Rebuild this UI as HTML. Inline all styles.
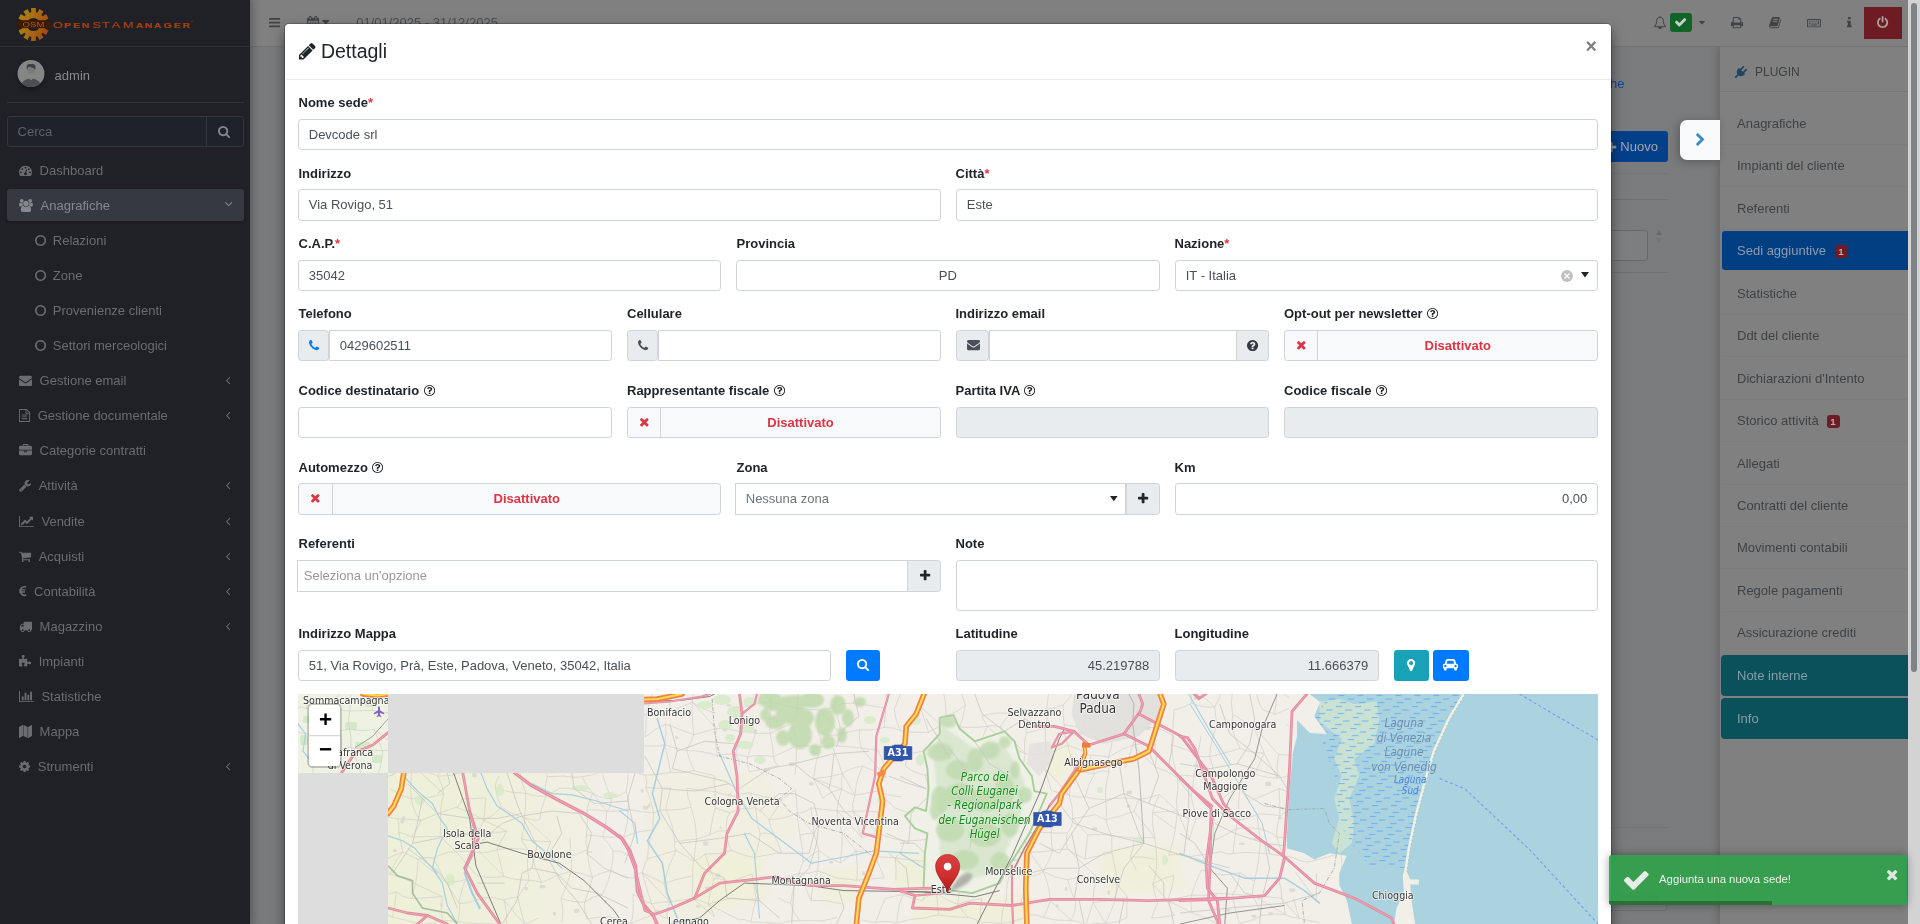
<!DOCTYPE html>
<html lang="it"><head><meta charset="utf-8"><title>OpenSTAManager - Dettagli sede</title>
<style>
html,body{margin:0;padding:0}
body{width:1920px;height:924px;overflow:hidden;position:relative;background:#7a7b7d;font-family:"Liberation Sans",Arial,Helvetica,sans-serif;font-size:13px;}
.ic{position:absolute;display:block;overflow:visible}
.t{position:absolute;white-space:nowrap}
.b{position:absolute}
</style></head>
<body>
<div id="app" style="position:absolute;left:0;top:0;width:1920px;height:924px;overflow:hidden;will-change:transform">
<!-- page content behind backdrop -->
<div class="t" style="left:1555.20px;top:73.50px;font-size:13px;color:#0a4a96;line-height:20px;">Anagrafiche</div>
<div class="b" style="left:1560.00px;top:131.00px;width:108.00px;height:31.00px;background:#04408a;border-radius:3px"></div>
<svg class="ic" style="left:1605.89px;top:141.59px;" width="10.21" height="10.21" viewBox="0.0 -1408.0 1408.0 1408.0"><path fill="#9c9ea2" transform="scale(1,-1)" d="M1408 800v-192q0 -40 -28 -68t-68 -28h-416v-416q0 -40 -28 -68t-68 -28h-192q-40 0 -68 28t-28 68v416h-416q-40 0 -68 28t-28 68v192q0 40 28 68t68 28h416v416q0 40 28 68t68 28h192q40 0 68 -28t28 -68v-416h416q40 0 68 -28t28 -68z"/></svg>
<div class="t" style="left:1620.30px;top:136.50px;font-size:13px;color:#a4a6aa;line-height:20px;">Nuovo</div>
<div class="b" style="left:1500.00px;top:172.50px;width:168.00px;height:1.00px;background:#747577"></div>
<div class="b" style="left:1500.00px;top:199.00px;width:168.00px;height:1.00px;background:#6e6f71"></div>
<div class="b" style="left:1500.00px;top:230.00px;width:147.50px;height:31.00px;box-sizing:border-box;border:1px solid #67696b;border-radius:3px;background:#7d7e80"></div>
<svg class="ic" style="left:1654.8px;top:228.5px" width="8" height="16" viewBox="0 0 8 16"><path d="M4 1 L7 6 H1Z" fill="#68696b"/><path d="M4 14 L7 9 H1Z" fill="#747577"/></svg>
<div class="b" style="left:1500.00px;top:271.50px;width:168.00px;height:1.50px;background:#6e6f71"></div>
<div class="b" style="left:1500.00px;top:827.00px;width:168.00px;height:1.00px;background:#727375"></div>
<div class="b" style="left:1560.00px;top:881.00px;width:107.00px;height:30.00px;box-sizing:border-box;border:1px solid #6f7072;border-radius:3px;background:#7c7d7f"></div>
<div class="t" style="left:1614.00px;top:886.00px;font-size:13px;color:#5a5c5f;line-height:20px;">Stampa</div>
<div class="b" style="left:1720.00px;top:47.00px;width:188.00px;height:877.00px;background:#808080;box-shadow:0 0 9px 1px rgba(0,0,0,.22)"></div>
<div class="b" style="left:1720.00px;top:91.00px;width:188.00px;height:1.00px;background:#767779"></div>
<svg class="ic" style="left:1735.00px;top:65.50px;" width="12.00" height="12.00" viewBox="0.0 -1536.0 1792.0 1792.0"><path fill="#1e4660" transform="scale(1,-1)" d="M1755 1083q37 -38 37 -90.5t-37 -90.5l-401 -400l150 -150l-160 -160q-163 -163 -389.5 -186.5t-411.5 100.5l-362 -362h-181v181l362 362q-124 185 -100.5 411.5t186.5 389.5l160 160l150 -150l400 401q38 37 91 37t90 -37t37 -90.5t-37 -90.5l-400 -401l234 -234 l401 400q38 37 91 37t90 -37z"/></svg>
<div class="t" style="left:1755.00px;top:61.80px;font-size:12px;color:#3d4043;line-height:20px;">PLUGIN</div>
<div class="b" style="left:1722.00px;top:143.80px;width:186.00px;height:1.00px;background:#7b7c7e"></div>
<div class="t" style="left:1737.00px;top:113.60px;font-size:13px;color:#3f4245;line-height:20px;">Anagrafiche</div>
<div class="b" style="left:1722.00px;top:185.80px;width:186.00px;height:1.00px;background:#7b7c7e"></div>
<div class="t" style="left:1737.00px;top:155.60px;font-size:13px;color:#3f4245;line-height:20px;">Impianti del cliente</div>
<div class="b" style="left:1722.00px;top:228.80px;width:186.00px;height:1.00px;background:#7b7c7e"></div>
<div class="t" style="left:1737.00px;top:198.60px;font-size:13px;color:#3f4245;line-height:20px;">Referenti</div>
<div class="b" style="left:1722.00px;top:231.00px;width:186.00px;height:39.00px;background:#003e82;border-radius:3px 0 0 3px"></div>
<div class="t" style="left:1737.00px;top:240.60px;font-size:13px;color:#8a9bb3;line-height:20px;">Sedi aggiuntive</div>
<div class="b" style="left:1834.50px;top:244.70px;width:13.00px;height:13.40px;background:#6e1b23;border-radius:3px"></div>
<div class="t" style="left:1834.50px;top:245.80px;font-size:9.75px;color:#b9adae;line-height:12px;font-weight:700;width:13.00px;text-align:center;">1</div>
<div class="b" style="left:1722.00px;top:313.80px;width:186.00px;height:1.00px;background:#7b7c7e"></div>
<div class="t" style="left:1737.00px;top:283.60px;font-size:13px;color:#3f4245;line-height:20px;">Statistiche</div>
<div class="b" style="left:1722.00px;top:355.80px;width:186.00px;height:1.00px;background:#7b7c7e"></div>
<div class="t" style="left:1737.00px;top:325.60px;font-size:13px;color:#3f4245;line-height:20px;">Ddt del cliente</div>
<div class="b" style="left:1722.00px;top:398.80px;width:186.00px;height:1.00px;background:#7b7c7e"></div>
<div class="t" style="left:1737.00px;top:368.60px;font-size:13px;color:#3f4245;line-height:20px;">Dichiarazioni d'Intento</div>
<div class="b" style="left:1722.00px;top:440.80px;width:186.00px;height:1.00px;background:#7b7c7e"></div>
<div class="t" style="left:1737.00px;top:410.60px;font-size:13px;color:#3f4245;line-height:20px;">Storico attività</div>
<div class="b" style="left:1826.50px;top:414.70px;width:13.00px;height:13.40px;background:#6e1b23;border-radius:3px"></div>
<div class="t" style="left:1826.50px;top:415.80px;font-size:9.75px;color:#b9adae;line-height:12px;font-weight:700;width:13.00px;text-align:center;">1</div>
<div class="b" style="left:1722.00px;top:483.80px;width:186.00px;height:1.00px;background:#7b7c7e"></div>
<div class="t" style="left:1737.00px;top:453.60px;font-size:13px;color:#3f4245;line-height:20px;">Allegati</div>
<div class="b" style="left:1722.00px;top:525.80px;width:186.00px;height:1.00px;background:#7b7c7e"></div>
<div class="t" style="left:1737.00px;top:495.60px;font-size:13px;color:#3f4245;line-height:20px;">Contratti del cliente</div>
<div class="b" style="left:1722.00px;top:567.80px;width:186.00px;height:1.00px;background:#7b7c7e"></div>
<div class="t" style="left:1737.00px;top:537.60px;font-size:13px;color:#3f4245;line-height:20px;">Movimenti contabili</div>
<div class="b" style="left:1722.00px;top:610.80px;width:186.00px;height:1.00px;background:#7b7c7e"></div>
<div class="t" style="left:1737.00px;top:580.60px;font-size:13px;color:#3f4245;line-height:20px;">Regole pagamenti</div>
<div class="b" style="left:1722.00px;top:652.80px;width:186.00px;height:1.00px;background:#7b7c7e"></div>
<div class="t" style="left:1737.00px;top:622.60px;font-size:13px;color:#3f4245;line-height:20px;">Assicurazione crediti</div>
<div class="b" style="left:1721.00px;top:655.00px;width:187.00px;height:41.00px;background:#0b515c;border-radius:4px 0 0 4px"></div>
<div class="t" style="left:1737.00px;top:665.60px;font-size:13px;color:#869fa4;line-height:20px;">Note interne</div>
<div class="b" style="left:1721.00px;top:697.50px;width:187.00px;height:41.00px;background:#0b515c;border-radius:4px 0 0 4px"></div>
<div class="t" style="left:1737.00px;top:708.50px;font-size:13px;color:#869fa4;line-height:20px;">Info</div>
<div class="b" style="left:250.00px;top:0.00px;width:1658.00px;height:46.00px;background:#808080"></div>
<div class="b" style="left:250.00px;top:46.00px;width:1658.00px;height:1.00px;background:#707274"></div>
<svg class="ic" style="left:269.43px;top:17.76px;" width="11.14" height="9.29" viewBox="0.0 -1280.0 1536.0 1280.0"><path fill="#404346" transform="scale(1,-1)" d="M1536 192v-128q0 -26 -19 -45t-45 -19h-1408q-26 0 -45 19t-19 45v128q0 26 19 45t45 19h1408q26 0 45 -19t19 -45zM1536 704v-128q0 -26 -19 -45t-45 -19h-1408q-26 0 -45 19t-19 45v128q0 26 19 45t45 19h1408q26 0 45 -19t19 -45zM1536 1216v-128q0 -26 -19 -45 t-45 -19h-1408q-26 0 -45 19t-19 45v128q0 26 19 45t45 19h1408q26 0 45 -19t19 -45z"/></svg>
<svg class="ic" style="left:306.66px;top:15.50px;" width="12.07" height="13.00" viewBox="0.0 -1536.0 1664.0 1792.0"><path fill="#404346" transform="scale(1,-1)" d="M128 -128h288v288h-288v-288zM480 -128h320v288h-320v-288zM128 224h288v320h-288v-320zM480 224h320v320h-320v-320zM128 608h288v288h-288v-288zM864 -128h320v288h-320v-288zM480 608h320v288h-320v-288zM1248 -128h288v288h-288v-288zM864 224h320v320h-320v-320z M512 1088v288q0 13 -9.5 22.5t-22.5 9.5h-64q-13 0 -22.5 -9.5t-9.5 -22.5v-288q0 -13 9.5 -22.5t22.5 -9.5h64q13 0 22.5 9.5t9.5 22.5zM1248 224h288v320h-288v-320zM864 608h320v288h-320v-288zM1248 608h288v288h-288v-288zM1280 1088v288q0 13 -9.5 22.5t-22.5 9.5h-64 q-13 0 -22.5 -9.5t-9.5 -22.5v-288q0 -13 9.5 -22.5t22.5 -9.5h64q13 0 22.5 9.5t9.5 22.5zM1664 1152v-1280q0 -52 -38 -90t-90 -38h-1408q-52 0 -90 38t-38 90v1280q0 52 38 90t90 38h128v96q0 66 47 113t113 47h64q66 0 113 -47t47 -113v-96h384v96q0 66 47 113t113 47 h64q66 0 113 -47t47 -113v-96h128q52 0 90 -38t38 -90z"/></svg>
<svg class="ic" style="left:322.49px;top:20.41px;" width="7.43" height="4.18" viewBox="0.0 -896.0 1024.0 576.0"><path fill="#404346" transform="scale(1,-1)" d="M1024 832q0 -26 -19 -45l-448 -448q-19 -19 -45 -19t-45 19l-448 448q-19 19 -19 45t19 45t45 19h896q26 0 45 -19t19 -45z"/></svg>
<div class="t" style="left:356.20px;top:13.20px;font-size:13px;color:#4a4d50;line-height:20px;">01/01/2025 - 31/12/2025</div>
<svg class="ic" style="left:1653.66px;top:15.70px;" width="12.07" height="13.00" viewBox="64.0 -1536.0 1664.0 1792.0"><path fill="#404346" transform="scale(1,-1)" d="M912 -160q0 16 -16 16q-59 0 -101.5 42.5t-42.5 101.5q0 16 -16 16t-16 -16q0 -73 51.5 -124.5t124.5 -51.5q16 0 16 16zM246 128h1300q-266 300 -266 832q0 51 -24 105t-69 103t-121.5 80.5t-169.5 31.5t-169.5 -31.5t-121.5 -80.5t-69 -103t-24 -105q0 -532 -266 -832z M1728 128q0 -52 -38 -90t-90 -38h-448q0 -106 -75 -181t-181 -75t-181 75t-75 181h-448q-52 0 -90 38t-38 90q50 42 91 88t85 119.5t74.5 158.5t50 206t19.5 260q0 152 117 282.5t307 158.5q-8 19 -8 39q0 40 28 68t68 28t68 -28t28 -68q0 -20 -8 -39q190 -28 307 -158.5 t117 -282.5q0 -139 19.5 -260t50 -206t74.5 -158.5t85 -119.5t91 -88z"/></svg>
<div class="b" style="left:1670.00px;top:12.70px;width:22.20px;height:19.30px;background:#116428;border-radius:3px"></div>
<svg class="ic" style="left:1675.18px;top:18.09px;" width="11.24" height="8.62" viewBox="121.0 -1202.0 1550.0 1188.0"><path fill="#cccccc" transform="scale(1,-1)" d="M1671 970q0 -40 -28 -68l-724 -724l-136 -136q-28 -28 -68 -28t-68 28l-136 136l-362 362q-28 28 -28 68t28 68l136 136q28 28 68 28t68 -28l294 -295l656 657q28 28 68 28t68 -28l136 -136q28 -28 28 -68z"/></svg>
<svg class="ic" style="left:1698.80px;top:20.51px;" width="6.00" height="3.38" viewBox="0.0 -896.0 1024.0 576.0"><path fill="#404346" transform="scale(1,-1)" d="M1024 832q0 -26 -19 -45l-448 -448q-19 -19 -45 -19t-45 19l-448 448q-19 19 -19 45t19 45t45 19h896q26 0 45 -19t19 -45z"/></svg>
<svg class="ic" style="left:1730.96px;top:16.93px;" width="12.07" height="11.14" viewBox="0.0 -1408.0 1664.0 1536.0"><path fill="#404346" transform="scale(1,-1)" d="M384 0h896v256h-896v-256zM384 640h896v384h-160q-40 0 -68 28t-28 68v160h-640v-640zM1536 576q0 26 -19 45t-45 19t-45 -19t-19 -45t19 -45t45 -19t45 19t19 45zM1664 576v-416q0 -13 -9.5 -22.5t-22.5 -9.5h-224v-160q0 -40 -28 -68t-68 -28h-960q-40 0 -68 28t-28 68 v160h-224q-13 0 -22.5 9.5t-9.5 22.5v416q0 79 56.5 135.5t135.5 56.5h64v544q0 40 28 68t68 28h672q40 0 88 -20t76 -48l152 -152q28 -28 48 -76t20 -88v-256h64q79 0 135.5 -56.5t56.5 -135.5z"/></svg>
<svg class="ic" style="left:1768.96px;top:16.93px;" width="12.08" height="11.14" viewBox="-0.5217391304347814 -1408.0 1665.328190743338 1536.0"><path fill="#404346" transform="scale(1,-1)" d="M1639 1058q40 -57 18 -129l-275 -906q-19 -64 -76.5 -107.5t-122.5 -43.5h-923q-77 0 -148.5 53.5t-99.5 131.5q-24 67 -2 127q0 4 3 27t4 37q1 8 -3 21.5t-3 19.5q2 11 8 21t16.5 23.5t16.5 23.5q23 38 45 91.5t30 91.5q3 10 0.5 30t-0.5 28q3 11 17 28t17 23 q21 36 42 92t25 90q1 9 -2.5 32t0.5 28q4 13 22 30.5t22 22.5q19 26 42.5 84.5t27.5 96.5q1 8 -3 25.5t-2 26.5q2 8 9 18t18 23t17 21q8 12 16.5 30.5t15 35t16 36t19.5 32t26.5 23.5t36 11.5t47.5 -5.5l-1 -3q38 9 51 9h761q74 0 114 -56t18 -130l-274 -906 q-36 -119 -71.5 -153.5t-128.5 -34.5h-869q-27 0 -38 -15q-11 -16 -1 -43q24 -70 144 -70h923q29 0 56 15.5t35 41.5l300 987q7 22 5 57q38 -15 59 -43zM575 1056q-4 -13 2 -22.5t20 -9.5h608q13 0 25.5 9.5t16.5 22.5l21 64q4 13 -2 22.5t-20 9.5h-608q-13 0 -25.5 -9.5 t-16.5 -22.5zM492 800q-4 -13 2 -22.5t20 -9.5h608q13 0 25.5 9.5t16.5 22.5l21 64q4 13 -2 22.5t-20 9.5h-608q-13 0 -25.5 -9.5t-16.5 -22.5z"/></svg>
<svg class="ic" style="left:1807.04px;top:18.82px;" width="13.93" height="8.36" viewBox="0.0 -1152.0 1920.0 1152.0"><path fill="#404346" transform="scale(1,-1)" d="M384 368v-96q0 -16 -16 -16h-96q-16 0 -16 16v96q0 16 16 16h96q16 0 16 -16zM512 624v-96q0 -16 -16 -16h-224q-16 0 -16 16v96q0 16 16 16h224q16 0 16 -16zM384 880v-96q0 -16 -16 -16h-96q-16 0 -16 16v96q0 16 16 16h96q16 0 16 -16zM1408 368v-96q0 -16 -16 -16 h-864q-16 0 -16 16v96q0 16 16 16h864q16 0 16 -16zM768 624v-96q0 -16 -16 -16h-96q-16 0 -16 16v96q0 16 16 16h96q16 0 16 -16zM640 880v-96q0 -16 -16 -16h-96q-16 0 -16 16v96q0 16 16 16h96q16 0 16 -16zM1024 624v-96q0 -16 -16 -16h-96q-16 0 -16 16v96q0 16 16 16 h96q16 0 16 -16zM896 880v-96q0 -16 -16 -16h-96q-16 0 -16 16v96q0 16 16 16h96q16 0 16 -16zM1280 624v-96q0 -16 -16 -16h-96q-16 0 -16 16v96q0 16 16 16h96q16 0 16 -16zM1664 368v-96q0 -16 -16 -16h-96q-16 0 -16 16v96q0 16 16 16h96q16 0 16 -16zM1152 880v-96 q0 -16 -16 -16h-96q-16 0 -16 16v96q0 16 16 16h96q16 0 16 -16zM1408 880v-96q0 -16 -16 -16h-96q-16 0 -16 16v96q0 16 16 16h96q16 0 16 -16zM1664 880v-352q0 -16 -16 -16h-224q-16 0 -16 16v96q0 16 16 16h112v240q0 16 16 16h96q16 0 16 -16zM1792 128v896h-1664v-896 h1664zM1920 1024v-896q0 -53 -37.5 -90.5t-90.5 -37.5h-1664q-53 0 -90.5 37.5t-37.5 90.5v896q0 53 37.5 90.5t90.5 37.5h1664q53 0 90.5 -37.5t37.5 -90.5z"/></svg>
<svg class="ic" style="left:1846.88px;top:17.19px;" width="4.64" height="10.21" viewBox="0.0 -1408.0 640.0 1408.0"><path fill="#404346" transform="scale(1,-1)" d="M640 192v-128q0 -26 -19 -45t-45 -19h-512q-26 0 -45 19t-19 45v128q0 26 19 45t45 19h64v384h-64q-26 0 -45 19t-19 45v128q0 26 19 45t45 19h384q26 0 45 -19t19 -45v-576h64q26 0 45 -19t19 -45zM512 1344v-192q0 -26 -19 -45t-45 -19h-256q-26 0 -45 19t-19 45v192 q0 26 19 45t45 19h256q26 0 45 -19t19 -45z"/></svg>
<div class="b" style="left:1864.00px;top:7.00px;width:38.00px;height:32.00px;background:#6f1b23"></div>
<svg class="ic" style="left:1877.43px;top:15.76px;" width="11.14" height="12.07" viewBox="0.0 -1536.0 1536.0 1664.0"><path fill="#a9a0a1" transform="scale(1,-1)" d="M1536 640q0 -156 -61 -298t-164 -245t-245 -164t-298 -61t-298 61t-245 164t-164 245t-61 298q0 182 80.5 343t226.5 270q43 32 95.5 25t83.5 -50q32 -42 24.5 -94.5t-49.5 -84.5q-98 -74 -151.5 -181t-53.5 -228q0 -104 40.5 -198.5t109.5 -163.5t163.5 -109.5 t198.5 -40.5t198.5 40.5t163.5 109.5t109.5 163.5t40.5 198.5q0 121 -53.5 228t-151.5 181q-42 32 -49.5 84.5t24.5 94.5q31 43 84 50t95 -25q146 -109 226.5 -270t80.5 -343zM896 1408v-640q0 -52 -38 -90t-90 -38t-90 38t-38 90v640q0 52 38 90t90 38t90 -38t38 -90z"/></svg>
<!-- modal shadow gradient on the sides -->
<div class="b" style="left:0;top:0;width:250px;height:924px;background:#1f2127;box-shadow:0 0 9px 2px rgba(0,0,0,.32)"></div>
<div class="b" style="left:0.00px;top:46.00px;width:250.00px;height:1.00px;background:#2e3036"></div>
<svg class="ic" style="left:16px;top:7px" width="36" height="36" viewBox="-17.5 -17.5 36 36">
<defs><linearGradient id="gg" gradientUnits="userSpaceOnUse" x1="-16" x2="16" y1="-6" y2="6"><stop offset="0" stop-color="#ad8211"/><stop offset=".5" stop-color="#a86a12"/><stop offset="1" stop-color="#a24413"/></linearGradient></defs>
<path d="M-2.27 -12.22 L-2.41 -16.54 L2.41 -16.54 L2.27 -12.22 L3.93 -11.76 L5.90 -15.57 L10.08 -13.07 L7.87 -9.41 L9.08 -8.15 L12.63 -10.43 L15.04 -6.11 L11.35 -4.07 L11.80 -2.35 L15.97 -2.50 L15.97 2.50 L11.80 2.35 L11.35 4.07 L15.04 6.11 L12.63 10.43 L9.08 8.15 L7.87 9.41 L10.08 13.07 L5.90 15.57 L3.93 11.76 L2.27 12.22 L2.41 16.54 L-2.41 16.54 L-2.27 12.22 L-3.93 11.76 L-5.90 15.57 L-10.08 13.07 L-7.87 9.41 L-9.08 8.15 L-12.63 10.43 L-15.04 6.11 L-11.35 4.07 L-11.80 2.35 L-15.97 2.50 L-15.97 -2.50 L-11.80 -2.35 L-11.35 -4.07 L-15.04 -6.11 L-12.63 -10.43 L-9.08 -8.15 L-7.87 -9.41 L-10.08 -13.07 L-5.90 -15.57 L-3.93 -11.76Z" fill="url(#gg)"/>
<circle r="6.6" fill="#1f2127"/>
<rect x="-16.6" y="-4.3" width="33.4" height="7.9" fill="#3d1a07"/>
<text x="0" y="2.2" transform="scale(1.45,1)" font-family="Liberation Sans, sans-serif" font-size="6.6" font-weight="400" fill="#a8600f" text-anchor="middle">OSM</text>
</svg>
<svg class="ic" style="left:0;top:10px" width="200" height="26" viewBox="0 10 200 26"><text y="28.1" transform="scale(1.42,1)" font-family="Liberation Sans, sans-serif" fill="#a5400f" stroke="#a5400f" stroke-width=".22"><tspan x="37.32" font-size="9.0" font-weight="400">O</tspan><tspan x="45.28 51.55 57.75" font-size="7.3" font-weight="700">PEN</tspan><tspan x="65.07 71.83 78.66 86.62" font-size="9.0" font-weight="400">STAM</tspan><tspan x="95.77 102.11 108.45 115.28 122.54 128.73" font-size="7.3" font-weight="700">ANAGER</tspan></text><text x="191" y="22.5" font-size="3.6" fill="#8a380f" font-family="Liberation Sans, sans-serif">®</text></svg>
<svg class="ic" style="left:12px;top:55px" width="38" height="40" viewBox="-19 -18.5 38 40">
<defs><clipPath id="avc"><circle r="13.5"/></clipPath></defs>
<circle r="13.5" cy="2" fill="#000" opacity=".35" style="filter:blur(2px)"/>
<circle r="13.5" fill="#858585"/>
<g clip-path="url(#avc)">
<path d="M-10 14 C-10 7 -5 6 -2 5 L0 7 L2 5 C5 6 10 7 10 14 Z" fill="#4b4e53"/>
<path d="M-3.6 -3 C-5 -8 -2 -9.5 0 -8.8 C3 -10 5.5 -7.5 3.8 -3 C3.5 1.5 -3.3 1.5 -3.6 -3Z" fill="#7a7a7a"/>
<path d="M-4 -3.5 C-5.5 -9 -2 -10 -0.5 -9.2 C3 -10.5 6 -8 4 -3.5 C4 -6 1 -5.5 -1 -6.8 C-3 -6.5 -3.8 -5.5 -4 -3.5Z" fill="#3b3e43"/>
</g></svg>
<div class="t" style="left:54.60px;top:65.50px;font-size:13px;color:#85888c;line-height:20px;">admin</div>
<div class="b" style="left:7.00px;top:102.00px;width:236.50px;height:1.00px;background:#30333a"></div>
<div class="b" style="left:7.00px;top:116.00px;width:236.50px;height:30.50px;box-sizing:border-box;border:1px solid #33363c;border-radius:3px;background:#1f2228"></div>
<div class="b" style="left:205.50px;top:116.50px;width:1.00px;height:29.50px;background:#33363c"></div>
<div class="t" style="left:17.60px;top:121.50px;font-size:13px;color:#5e6166;line-height:20px;">Cerca</div>
<svg class="ic" style="left:218.26px;top:125.66px;" width="12.07" height="12.07" viewBox="0.0 -1408.0 1664.0 1664.0"><path fill="#85888c" transform="scale(1,-1)" d="M1152 704q0 185 -131.5 316.5t-316.5 131.5t-316.5 -131.5t-131.5 -316.5t131.5 -316.5t316.5 -131.5t316.5 131.5t131.5 316.5zM1664 -128q0 -52 -38 -90t-90 -38q-54 0 -90 38l-343 342q-179 -124 -399 -124q-143 0 -273.5 55.5t-225 150t-150 225t-55.5 273.5 t55.5 273.5t150 225t225 150t273.5 55.5t273.5 -55.5t225 -150t150 -225t55.5 -273.5q0 -220 -124 -399l343 -343q37 -37 37 -90z"/></svg>
<svg class="ic" style="left:19.40px;top:163.90px;" width="13.00" height="13.00" viewBox="0 -1536 1792 1792"><path fill="#696c71" transform="scale(1,-1)" d="M384 384q0 53 -37.5 90.5t-90.5 37.5t-90.5 -37.5t-37.5 -90.5t37.5 -90.5t90.5 -37.5t90.5 37.5t37.5 90.5zM576 832q0 53 -37.5 90.5t-90.5 37.5t-90.5 -37.5t-37.5 -90.5t37.5 -90.5t90.5 -37.5t90.5 37.5t37.5 90.5zM1004 351l101 382q6 26 -7.5 48.5t-38.5 29.5 t-48 -6.5t-30 -39.5l-101 -382q-60 -5 -107 -43.5t-63 -98.5q-20 -77 20 -146t117 -89t146 20t89 117q16 60 -6 117t-72 91zM1664 384q0 53 -37.5 90.5t-90.5 37.5t-90.5 -37.5t-37.5 -90.5t37.5 -90.5t90.5 -37.5t90.5 37.5t37.5 90.5zM1024 1024q0 53 -37.5 90.5 t-90.5 37.5t-90.5 -37.5t-37.5 -90.5t37.5 -90.5t90.5 -37.5t90.5 37.5t37.5 90.5zM1472 832q0 53 -37.5 90.5t-90.5 37.5t-90.5 -37.5t-37.5 -90.5t37.5 -90.5t90.5 -37.5t90.5 37.5t37.5 90.5zM1792 384q0 -261 -141 -483q-19 -29 -54 -29h-1402q-35 0 -54 29 q-141 221 -141 483q0 182 71 348t191 286t286 191t348 71t348 -71t286 -191t191 -286t71 -348z"/></svg>
<div class="t" style="left:39.60px;top:160.60px;font-size:13px;color:#696c71;line-height:20px;">Dashboard</div>
<div class="b" style="left:7.00px;top:189.00px;width:236.50px;height:32.00px;background:#363a40;border-radius:3px;box-shadow:0 1px 3px rgba(0,0,0,.25)"></div>
<svg class="ic" style="left:19.40px;top:198.90px;" width="13.93" height="13.00" viewBox="0 -1536 1920 1792"><path fill="#85888c" transform="scale(1,-1)" d="M593 640q-162 -5 -265 -128h-134q-82 0 -138 40.5t-56 118.5q0 353 124 353q6 0 43.5 -21t97.5 -42.5t119 -21.5q67 0 133 23q-5 -37 -5 -66q0 -139 81 -256zM1664 3q0 -120 -73 -189.5t-194 -69.5h-874q-121 0 -194 69.5t-73 189.5q0 53 3.5 103.5t14 109t26.5 108.5 t43 97.5t62 81t85.5 53.5t111.5 20q10 0 43 -21.5t73 -48t107 -48t135 -21.5t135 21.5t107 48t73 48t43 21.5q61 0 111.5 -20t85.5 -53.5t62 -81t43 -97.5t26.5 -108.5t14 -109t3.5 -103.5zM640 1280q0 -106 -75 -181t-181 -75t-181 75t-75 181t75 181t181 75t181 -75 t75 -181zM1344 896q0 -159 -112.5 -271.5t-271.5 -112.5t-271.5 112.5t-112.5 271.5t112.5 271.5t271.5 112.5t271.5 -112.5t112.5 -271.5zM1920 671q0 -78 -56 -118.5t-138 -40.5h-134q-103 123 -265 128q81 117 81 256q0 29 -5 66q66 -23 133 -23q59 0 119 21.5t97.5 42.5 t43.5 21q124 0 124 -353zM1792 1280q0 -106 -75 -181t-181 -75t-181 75t-75 181t75 181t181 75t181 -75t75 -181z"/></svg>
<div class="t" style="left:40.53px;top:195.60px;font-size:13px;color:#85888c;line-height:20px;">Anagrafiche</div>
<svg class="ic" style="left:224.88px;top:202.49px;" width="7.24" height="4.22" viewBox="77.0 -883.0 998.0 582.0"><path fill="#85888c" transform="scale(1,-1)" d="M1075 800q0 -13 -10 -23l-466 -466q-10 -10 -23 -10t-23 10l-466 466q-10 10 -10 23t10 23l50 50q10 10 23 10t23 -10l393 -393l393 393q10 10 23 10t23 -10l50 -50q10 -10 10 -23z"/></svg>
<svg class="ic" style="left:34.50px;top:233.90px;" width="11.14" height="13.00" viewBox="0 -1536 1536 1792"><path fill="#696c71" transform="scale(1,-1)" d="M768 1184q-148 0 -273 -73t-198 -198t-73 -273t73 -273t198 -198t273 -73t273 73t198 198t73 273t-73 273t-198 198t-273 73zM1536 640q0 -209 -103 -385.5t-279.5 -279.5t-385.5 -103t-385.5 103t-279.5 279.5t-103 385.5t103 385.5t279.5 279.5t385.5 103t385.5 -103 t279.5 -279.5t103 -385.5z"/></svg>
<div class="t" style="left:52.84px;top:230.60px;font-size:13px;color:#696c71;line-height:20px;">Relazioni</div>
<svg class="ic" style="left:34.50px;top:268.90px;" width="11.14" height="13.00" viewBox="0 -1536 1536 1792"><path fill="#696c71" transform="scale(1,-1)" d="M768 1184q-148 0 -273 -73t-198 -198t-73 -273t73 -273t198 -198t273 -73t273 73t198 198t73 273t-73 273t-198 198t-273 73zM1536 640q0 -209 -103 -385.5t-279.5 -279.5t-385.5 -103t-385.5 103t-279.5 279.5t-103 385.5t103 385.5t279.5 279.5t385.5 103t385.5 -103 t279.5 -279.5t103 -385.5z"/></svg>
<div class="t" style="left:52.84px;top:265.60px;font-size:13px;color:#696c71;line-height:20px;">Zone</div>
<svg class="ic" style="left:34.50px;top:303.90px;" width="11.14" height="13.00" viewBox="0 -1536 1536 1792"><path fill="#696c71" transform="scale(1,-1)" d="M768 1184q-148 0 -273 -73t-198 -198t-73 -273t73 -273t198 -198t273 -73t273 73t198 198t73 273t-73 273t-198 198t-273 73zM1536 640q0 -209 -103 -385.5t-279.5 -279.5t-385.5 -103t-385.5 103t-279.5 279.5t-103 385.5t103 385.5t279.5 279.5t385.5 103t385.5 -103 t279.5 -279.5t103 -385.5z"/></svg>
<div class="t" style="left:52.84px;top:300.60px;font-size:13px;color:#696c71;line-height:20px;">Provenienze clienti</div>
<svg class="ic" style="left:34.50px;top:338.90px;" width="11.14" height="13.00" viewBox="0 -1536 1536 1792"><path fill="#696c71" transform="scale(1,-1)" d="M768 1184q-148 0 -273 -73t-198 -198t-73 -273t73 -273t198 -198t273 -73t273 73t198 198t73 273t-73 273t-198 198t-273 73zM1536 640q0 -209 -103 -385.5t-279.5 -279.5t-385.5 -103t-385.5 103t-279.5 279.5t-103 385.5t103 385.5t279.5 279.5t385.5 103t385.5 -103 t279.5 -279.5t103 -385.5z"/></svg>
<div class="t" style="left:52.84px;top:335.60px;font-size:13px;color:#696c71;line-height:20px;">Settori merceologici</div>
<svg class="ic" style="left:19.40px;top:373.90px;" width="13.00" height="13.00" viewBox="0 -1536 1792 1792"><path fill="#696c71" transform="scale(1,-1)" d="M1792 826v-794q0 -66 -47 -113t-113 -47h-1472q-66 0 -113 47t-47 113v794q44 -49 101 -87q362 -246 497 -345q57 -42 92.5 -65.5t94.5 -48t110 -24.5h1h1q51 0 110 24.5t94.5 48t92.5 65.5q170 123 498 345q57 39 100 87zM1792 1120q0 -79 -49 -151t-122 -123 q-376 -261 -468 -325q-10 -7 -42.5 -30.5t-54 -38t-52 -32.5t-57.5 -27t-50 -9h-1h-1q-23 0 -50 9t-57.5 27t-52 32.5t-54 38t-42.5 30.5q-91 64 -262 182.5t-205 142.5q-62 42 -117 115.5t-55 136.5q0 78 41.5 130t118.5 52h1472q65 0 112.5 -47t47.5 -113z"/></svg>
<div class="t" style="left:39.60px;top:370.60px;font-size:13px;color:#696c71;line-height:20px;">Gestione email</div>
<svg class="ic" style="left:226.29px;top:377.28px;" width="4.22" height="7.24" viewBox="45.0 -1075.0 582.0 998.0"><path fill="#696c71" transform="scale(1,-1)" d="M627 992q0 -13 -10 -23l-393 -393l393 -393q10 -10 10 -23t-10 -23l-50 -50q-10 -10 -23 -10t-23 10l-466 466q-10 10 -10 23t10 23l466 466q10 10 23 10t23 -10l50 -50q10 -10 10 -23z"/></svg>
<svg class="ic" style="left:19.40px;top:408.90px;" width="11.14" height="13.00" viewBox="0 -1536 1536 1792"><path fill="#696c71" transform="scale(1,-1)" d="M1468 1156q28 -28 48 -76t20 -88v-1152q0 -40 -28 -68t-68 -28h-1344q-40 0 -68 28t-28 68v1600q0 40 28 68t68 28h896q40 0 88 -20t76 -48zM1024 1400v-376h376q-10 29 -22 41l-313 313q-12 12 -41 22zM1408 -128v1024h-416q-40 0 -68 28t-28 68v416h-768v-1536h1280z M384 736q0 14 9 23t23 9h704q14 0 23 -9t9 -23v-64q0 -14 -9 -23t-23 -9h-704q-14 0 -23 9t-9 23v64zM1120 512q14 0 23 -9t9 -23v-64q0 -14 -9 -23t-23 -9h-704q-14 0 -23 9t-9 23v64q0 14 9 23t23 9h704zM1120 256q14 0 23 -9t9 -23v-64q0 -14 -9 -23t-23 -9h-704 q-14 0 -23 9t-9 23v64q0 14 9 23t23 9h704z"/></svg>
<div class="t" style="left:37.74px;top:405.60px;font-size:13px;color:#696c71;line-height:20px;">Gestione documentale</div>
<svg class="ic" style="left:226.29px;top:412.28px;" width="4.22" height="7.24" viewBox="45.0 -1075.0 582.0 998.0"><path fill="#696c71" transform="scale(1,-1)" d="M627 992q0 -13 -10 -23l-393 -393l393 -393q10 -10 10 -23t-10 -23l-50 -50q-10 -10 -23 -10t-23 10l-466 466q-10 10 -10 23t10 23l466 466q10 10 23 10t23 -10l50 -50q10 -10 10 -23z"/></svg>
<svg class="ic" style="left:19.40px;top:443.90px;" width="13.00" height="13.00" viewBox="0 -1536 1792 1792"><path fill="#696c71" transform="scale(1,-1)" d="M640 1280h512v128h-512v-128zM1792 640v-480q0 -66 -47 -113t-113 -47h-1472q-66 0 -113 47t-47 113v480h672v-160q0 -26 19 -45t45 -19h320q26 0 45 19t19 45v160h672zM1024 640v-128h-256v128h256zM1792 1120v-384h-1792v384q0 66 47 113t113 47h352v160q0 40 28 68 t68 28h576q40 0 68 -28t28 -68v-160h352q66 0 113 -47t47 -113z"/></svg>
<div class="t" style="left:39.60px;top:440.60px;font-size:13px;color:#696c71;line-height:20px;">Categorie contratti</div>
<svg class="ic" style="left:19.40px;top:478.90px;" width="12.07" height="13.00" viewBox="0 -1536 1664 1792"><path fill="#696c71" transform="scale(1,-1)" d="M384 64q0 26 -19 45t-45 19t-45 -19t-19 -45t19 -45t45 -19t45 19t19 45zM1028 484l-682 -682q-37 -37 -90 -37q-52 0 -91 37l-106 108q-38 36 -38 90q0 53 38 91l681 681q39 -98 114.5 -173.5t173.5 -114.5zM1662 919q0 -39 -23 -106q-47 -134 -164.5 -217.5 t-258.5 -83.5q-185 0 -316.5 131.5t-131.5 316.5t131.5 316.5t316.5 131.5q58 0 121.5 -16.5t107.5 -46.5q16 -11 16 -28t-16 -28l-293 -169v-224l193 -107q5 3 79 48.5t135.5 81t70.5 35.5q15 0 23.5 -10t8.5 -25z"/></svg>
<div class="t" style="left:38.67px;top:475.60px;font-size:13px;color:#696c71;line-height:20px;">Attività</div>
<svg class="ic" style="left:226.29px;top:482.28px;" width="4.22" height="7.24" viewBox="45.0 -1075.0 582.0 998.0"><path fill="#696c71" transform="scale(1,-1)" d="M627 992q0 -13 -10 -23l-393 -393l393 -393q10 -10 10 -23t-10 -23l-50 -50q-10 -10 -23 -10t-23 10l-466 466q-10 10 -10 23t10 23l466 466q10 10 23 10t23 -10l50 -50q10 -10 10 -23z"/></svg>
<svg class="ic" style="left:19.40px;top:514.90px;" width="14.86" height="13.00" viewBox="0 -1536 2048 1792"><path fill="#696c71" transform="scale(1,-1)" d="M2048 0v-128h-2048v1536h128v-1408h1920zM1920 1248v-435q0 -21 -19.5 -29.5t-35.5 7.5l-121 121l-633 -633q-10 -10 -23 -10t-23 10l-233 233l-416 -416l-192 192l585 585q10 10 23 10t23 -10l233 -233l464 464l-121 121q-16 16 -7.5 35.5t29.5 19.5h435q14 0 23 -9 t9 -23z"/></svg>
<div class="t" style="left:41.46px;top:511.60px;font-size:13px;color:#696c71;line-height:20px;">Vendite</div>
<svg class="ic" style="left:226.29px;top:518.28px;" width="4.22" height="7.24" viewBox="45.0 -1075.0 582.0 998.0"><path fill="#696c71" transform="scale(1,-1)" d="M627 992q0 -13 -10 -23l-393 -393l393 -393q10 -10 10 -23t-10 -23l-50 -50q-10 -10 -23 -10t-23 10l-466 466q-10 10 -10 23t10 23l466 466q10 10 23 10t23 -10l50 -50q10 -10 10 -23z"/></svg>
<svg class="ic" style="left:19.40px;top:549.90px;" width="12.07" height="13.00" viewBox="0 -1536 1664 1792"><path fill="#696c71" transform="scale(1,-1)" d="M640 0q0 -52 -38 -90t-90 -38t-90 38t-38 90t38 90t90 38t90 -38t38 -90zM1536 0q0 -52 -38 -90t-90 -38t-90 38t-38 90t38 90t90 38t90 -38t38 -90zM1664 1088v-512q0 -24 -16.5 -42.5t-40.5 -21.5l-1044 -122q13 -60 13 -70q0 -16 -24 -64h920q26 0 45 -19t19 -45 t-19 -45t-45 -19h-1024q-26 0 -45 19t-19 45q0 11 8 31.5t16 36t21.5 40t15.5 29.5l-177 823h-204q-26 0 -45 19t-19 45t19 45t45 19h256q16 0 28.5 -6.5t19.5 -15.5t13 -24.5t8 -26t5.5 -29.5t4.5 -26h1201q26 0 45 -19t19 -45z"/></svg>
<div class="t" style="left:38.67px;top:546.60px;font-size:13px;color:#696c71;line-height:20px;">Acquisti</div>
<svg class="ic" style="left:226.29px;top:553.28px;" width="4.22" height="7.24" viewBox="45.0 -1075.0 582.0 998.0"><path fill="#696c71" transform="scale(1,-1)" d="M627 992q0 -13 -10 -23l-393 -393l393 -393q10 -10 10 -23t-10 -23l-50 -50q-10 -10 -23 -10t-23 10l-466 466q-10 10 -10 23t10 23l466 466q10 10 23 10t23 -10l50 -50q10 -10 10 -23z"/></svg>
<svg class="ic" style="left:19.40px;top:584.90px;" width="7.43" height="13.00" viewBox="0 -1536 1024 1792"><path fill="#696c71" transform="scale(1,-1)" d="M976 229l35 -159q3 -12 -3 -22.5t-17 -14.5l-5 -1q-4 -2 -10.5 -3.5t-16 -4.5t-21.5 -5.5t-25.5 -5t-30 -5t-33.5 -4.5t-36.5 -3t-38.5 -1q-234 0 -409 130.5t-238 351.5h-95q-13 0 -22.5 9.5t-9.5 22.5v113q0 13 9.5 22.5t22.5 9.5h66q-2 57 1 105h-67q-14 0 -23 9 t-9 23v114q0 14 9 23t23 9h98q67 210 243.5 338t400.5 128q102 0 194 -23q11 -3 20 -15q6 -11 3 -24l-43 -159q-3 -13 -14 -19.5t-24 -2.5l-4 1q-4 1 -11.5 2.5l-17.5 3.5t-22.5 3.5t-26 3t-29 2.5t-29.5 1q-126 0 -226 -64t-150 -176h468q16 0 25 -12q10 -12 7 -26 l-24 -114q-5 -26 -32 -26h-488q-3 -37 0 -105h459q15 0 25 -12q9 -12 6 -27l-24 -112q-2 -11 -11 -18.5t-20 -7.5h-387q48 -117 149.5 -185.5t228.5 -68.5q18 0 36 1.5t33.5 3.5t29.5 4.5t24.5 5t18.5 4.5l12 3l5 2q13 5 26 -2q12 -7 15 -21z"/></svg>
<div class="t" style="left:34.03px;top:581.60px;font-size:13px;color:#696c71;line-height:20px;">Contabilità</div>
<svg class="ic" style="left:226.29px;top:588.28px;" width="4.22" height="7.24" viewBox="45.0 -1075.0 582.0 998.0"><path fill="#696c71" transform="scale(1,-1)" d="M627 992q0 -13 -10 -23l-393 -393l393 -393q10 -10 10 -23t-10 -23l-50 -50q-10 -10 -23 -10t-23 10l-466 466q-10 10 -10 23t10 23l466 466q10 10 23 10t23 -10l50 -50q10 -10 10 -23z"/></svg>
<svg class="ic" style="left:19.40px;top:619.90px;" width="13.00" height="13.00" viewBox="0 -1536 1792 1792"><path fill="#696c71" transform="scale(1,-1)" d="M640 128q0 52 -38 90t-90 38t-90 -38t-38 -90t38 -90t90 -38t90 38t38 90zM256 640h384v256h-158q-13 0 -22 -9l-195 -195q-9 -9 -9 -22v-30zM1536 128q0 52 -38 90t-90 38t-90 -38t-38 -90t38 -90t90 -38t90 38t38 90zM1792 1216v-1024q0 -15 -4 -26.5t-13.5 -18.5 t-16.5 -11.5t-23.5 -6t-22.5 -2t-25.5 0t-22.5 0.5q0 -106 -75 -181t-181 -75t-181 75t-75 181h-384q0 -106 -75 -181t-181 -75t-181 75t-75 181h-64q-3 0 -22.5 -0.5t-25.5 0t-22.5 2t-23.5 6t-16.5 11.5t-13.5 18.5t-4 26.5q0 26 19 45t45 19v320q0 8 -0.5 35t0 38 t2.5 34.5t6.5 37t14 30.5t22.5 30l198 198q19 19 50.5 32t58.5 13h160v192q0 26 19 45t45 19h1024q26 0 45 -19t19 -45z"/></svg>
<div class="t" style="left:39.60px;top:616.60px;font-size:13px;color:#696c71;line-height:20px;">Magazzino</div>
<svg class="ic" style="left:226.29px;top:623.28px;" width="4.22" height="7.24" viewBox="45.0 -1075.0 582.0 998.0"><path fill="#696c71" transform="scale(1,-1)" d="M627 992q0 -13 -10 -23l-393 -393l393 -393q10 -10 10 -23t-10 -23l-50 -50q-10 -10 -23 -10t-23 10l-466 466q-10 10 -10 23t10 23l466 466q10 10 23 10t23 -10l50 -50q10 -10 10 -23z"/></svg>
<svg class="ic" style="left:19.40px;top:654.90px;" width="12.07" height="13.00" viewBox="0 -1536 1664 1792"><path fill="#696c71" transform="scale(1,-1)" d="M1664 438q0 -81 -44.5 -135t-123.5 -54q-41 0 -77.5 17.5t-59 38t-56.5 38t-71 17.5q-110 0 -110 -124q0 -39 16 -115t15 -115v-5q-22 0 -33 -1q-34 -3 -97.5 -11.5t-115.5 -13.5t-98 -5q-61 0 -103 26.5t-42 83.5q0 37 17.5 71t38 56.5t38 59t17.5 77.5q0 79 -54 123.5 t-135 44.5q-84 0 -143 -45.5t-59 -127.5q0 -43 15 -83t33.5 -64.5t33.5 -53t15 -50.5q0 -45 -46 -89q-37 -35 -117 -35q-95 0 -245 24q-9 2 -27.5 4t-27.5 4l-13 2q-1 0 -3 1q-2 0 -2 1v1024q2 -1 17.5 -3.5t34 -5t21.5 -3.5q150 -24 245 -24q80 0 117 35q46 44 46 89 q0 22 -15 50.5t-33.5 53t-33.5 64.5t-15 83q0 82 59 127.5t144 45.5q80 0 134 -44.5t54 -123.5q0 -41 -17.5 -77.5t-38 -59t-38 -56.5t-17.5 -71q0 -57 42 -83.5t103 -26.5q64 0 180 15t163 17v-2q-1 -2 -3.5 -17.5t-5 -34t-3.5 -21.5q-24 -150 -24 -245q0 -80 35 -117 q44 -46 89 -46q22 0 50.5 15t53 33.5t64.5 33.5t83 15q82 0 127.5 -59t45.5 -143z"/></svg>
<div class="t" style="left:38.67px;top:651.60px;font-size:13px;color:#696c71;line-height:20px;">Impianti</div>
<svg class="ic" style="left:19.40px;top:689.90px;" width="14.86" height="13.00" viewBox="0 -1536 2048 1792"><path fill="#696c71" transform="scale(1,-1)" d="M640 640v-512h-256v512h256zM1024 1152v-1024h-256v1024h256zM2048 0v-128h-2048v1536h128v-1408h1920zM1408 896v-768h-256v768h256zM1792 1280v-1152h-256v1152h256z"/></svg>
<div class="t" style="left:41.46px;top:686.60px;font-size:13px;color:#696c71;line-height:20px;">Statistiche</div>
<svg class="ic" style="left:19.40px;top:724.90px;" width="13.00" height="13.00" viewBox="0 -1536 1792 1792"><path fill="#696c71" transform="scale(1,-1)" d="M512 1536q13 0 22.5 -9.5t9.5 -22.5v-1472q0 -20 -17 -28l-480 -256q-7 -4 -15 -4q-13 0 -22.5 9.5t-9.5 22.5v1472q0 20 17 28l480 256q7 4 15 4zM1760 1536q13 0 22.5 -9.5t9.5 -22.5v-1472q0 -20 -17 -28l-480 -256q-7 -4 -15 -4q-13 0 -22.5 9.5t-9.5 22.5v1472 q0 20 17 28l480 256q7 4 15 4zM640 1536q8 0 14 -3l512 -256q18 -10 18 -29v-1472q0 -13 -9.5 -22.5t-22.5 -9.5q-8 0 -14 3l-512 256q-18 10 -18 29v1472q0 13 9.5 22.5t22.5 9.5z"/></svg>
<div class="t" style="left:39.60px;top:721.60px;font-size:13px;color:#696c71;line-height:20px;">Mappa</div>
<svg class="ic" style="left:19.40px;top:759.90px;" width="11.14" height="13.00" viewBox="0 -1536 1536 1792"><path fill="#696c71" transform="scale(1,-1)" d="M1024 640q0 106 -75 181t-181 75t-181 -75t-75 -181t75 -181t181 -75t181 75t75 181zM1536 749v-222q0 -12 -8 -23t-20 -13l-185 -28q-19 -54 -39 -91q35 -50 107 -138q10 -12 10 -25t-9 -23q-27 -37 -99 -108t-94 -71q-12 0 -26 9l-138 108q-44 -23 -91 -38 q-16 -136 -29 -186q-7 -28 -36 -28h-222q-14 0 -24.5 8.5t-11.5 21.5l-28 184q-49 16 -90 37l-141 -107q-10 -9 -25 -9q-14 0 -25 11q-126 114 -165 168q-7 10 -7 23q0 12 8 23q15 21 51 66.5t54 70.5q-27 50 -41 99l-183 27q-13 2 -21 12.5t-8 23.5v222q0 12 8 23t19 13 l186 28q14 46 39 92q-40 57 -107 138q-10 12 -10 24q0 10 9 23q26 36 98.5 107.5t94.5 71.5q13 0 26 -10l138 -107q44 23 91 38q16 136 29 186q7 28 36 28h222q14 0 24.5 -8.5t11.5 -21.5l28 -184q49 -16 90 -37l142 107q9 9 24 9q13 0 25 -10q129 -119 165 -170q7 -8 7 -22 q0 -12 -8 -23q-15 -21 -51 -66.5t-54 -70.5q26 -50 41 -98l183 -28q13 -2 21 -12.5t8 -23.5z"/></svg>
<div class="t" style="left:37.74px;top:756.60px;font-size:13px;color:#696c71;line-height:20px;">Strumenti</div>
<svg class="ic" style="left:226.29px;top:763.28px;" width="4.22" height="7.24" viewBox="45.0 -1075.0 582.0 998.0"><path fill="#696c71" transform="scale(1,-1)" d="M627 992q0 -13 -10 -23l-393 -393l393 -393q10 -10 10 -23t-10 -23l-50 -50q-10 -10 -23 -10t-23 10l-466 466q-10 10 -10 23t10 23l466 466q10 10 23 10t23 -10l50 -50q10 -10 10 -23z"/></svg>
<div class="b" style="left:1908.00px;top:0.00px;width:12.00px;height:924.00px;background:#d3d3d3"></div>
<div class="b" style="left:1911.00px;top:3.00px;width:6.00px;height:668.50px;background:#7f8385;border-radius:3px"></div>
<div class="b" style="left:1680.00px;top:120.00px;width:40.00px;height:40.00px;background:#f8f9fa;border-radius:7px 0 0 7px;box-shadow:-2px 2px 8px rgba(0,0,0,.25)"></div>
<svg class="ic" style="left:1696.07px;top:133.37px;" width="8.27" height="12.86" viewBox="90.0 -1510.0 1036.0 1612.0"><path fill="#3c8dbc" transform="scale(1,-1)" d="M1107 659l-742 -742q-19 -19 -45 -19t-45 19l-166 166q-19 19 -19 45t19 45l531 531l-531 531q-19 19 -19 45t19 45l166 166q19 19 45 19t45 -19l742 -742q19 -19 19 -45t-19 -45z"/></svg>
<div class="b" style="left:285px;top:24px;width:1326px;height:920px;background:#fff;border-radius:4px 4px 0 0;box-shadow:0 6px 13px rgba(0,0,0,.5), 0 0 0 1px rgba(0,0,0,.2)"></div>
<div class="b" style="left:286.00px;top:79.25px;width:1324.00px;height:1.00px;background:#e9ecef"></div>
<svg class="ic" style="left:299.06px;top:43.26px;" width="16.49" height="16.49" viewBox="0.0 -1387.0 1515.0 1515.0"><path fill="#212529" transform="scale(1,-1)" d="M363 0l91 91l-235 235l-91 -91v-107h128v-128h107zM886 928q0 22 -22 22q-10 0 -17 -7l-542 -542q-7 -7 -7 -17q0 -22 22 -22q10 0 17 7l542 542q7 7 7 17zM832 1120l416 -416l-832 -832h-416v416zM1515 1024q0 -53 -37 -90l-166 -166l-416 416l166 165q36 38 90 38 q53 0 91 -38l235 -234q37 -39 37 -91z"/></svg>
<div class="t" style="left:320.90px;top:36.20px;font-size:19.5px;color:#212529;line-height:30px;">Dettagli</div>
<div class="t" style="left:1585.60px;top:36.30px;font-size:19.5px;color:#7f7f7f;line-height:20px;font-weight:700;">×</div>
<div class="t" style="left:298.50px;top:93.00px;line-height:19.5px;font-weight:700;color:#212529;font-size:13px">Nome sede<span style="color:#dc3545">*</span></div>
<div class="b" style="left:298.00px;top:119.00px;width:1300.00px;height:31.25px;box-sizing:border-box;border:1px solid #ced4da;border-radius:3.25px;background:#fff;padding:0 9.75px;line-height:29.25px;color:#495057;text-align:left;font-size:13px;white-space:nowrap;overflow:hidden">Devcode srl</div>
<div class="t" style="left:298.50px;top:163.85px;line-height:19.5px;font-weight:700;color:#212529;font-size:13px">Indirizzo</div>
<div class="b" style="left:298.00px;top:189.25px;width:643.00px;height:31.25px;box-sizing:border-box;border:1px solid #ced4da;border-radius:3.25px;background:#fff;padding:0 9.75px;line-height:29.25px;color:#495057;text-align:left;font-size:13px;white-space:nowrap;overflow:hidden">Via Rovigo, 51</div>
<div class="t" style="left:955.50px;top:163.85px;line-height:19.5px;font-weight:700;color:#212529;font-size:13px">Città<span style="color:#dc3545">*</span></div>
<div class="b" style="left:956.00px;top:189.25px;width:642.00px;height:31.25px;box-sizing:border-box;border:1px solid #ced4da;border-radius:3.25px;background:#fff;padding:0 9.75px;line-height:29.25px;color:#495057;text-align:left;font-size:13px;white-space:nowrap;overflow:hidden">Este</div>
<div class="t" style="left:298.50px;top:233.50px;line-height:19.5px;font-weight:700;color:#212529;font-size:13px">C.A.P.<span style="color:#dc3545">*</span></div>
<div class="b" style="left:298.00px;top:259.50px;width:423.00px;height:31.25px;box-sizing:border-box;border:1px solid #ced4da;border-radius:3.25px;background:#fff;padding:0 9.75px;line-height:29.25px;color:#495057;text-align:left;font-size:13px;white-space:nowrap;overflow:hidden">35042</div>
<div class="t" style="left:736.50px;top:233.50px;line-height:19.5px;font-weight:700;color:#212529;font-size:13px">Provincia</div>
<div class="b" style="left:736.00px;top:259.50px;width:423.70px;height:31.25px;box-sizing:border-box;border:1px solid #ced4da;border-radius:3.25px;background:#fff;padding:0 9.75px;line-height:29.25px;color:#495057;text-align:center;font-size:13px;white-space:nowrap;overflow:hidden">PD</div>
<div class="t" style="left:1174.50px;top:233.50px;line-height:19.5px;font-weight:700;color:#212529;font-size:13px">Nazione<span style="color:#dc3545">*</span></div>
<div class="b" style="left:1175.00px;top:259.50px;width:423.00px;height:31.25px;box-sizing:border-box;border:1px solid #ced4da;border-radius:3.25px;background:#fff;padding:0 9.75px;line-height:29.25px;color:#495057;text-align:left;font-size:13px;white-space:nowrap;overflow:hidden">IT - Italia</div>
<svg class="ic" style="left:1561px;top:269.5px" width="12" height="12" viewBox="-6 -6 12 12"><circle r="5.9" fill="#c0c0c0"/><path d="M-2.5 -2.5L2.5 2.5M2.5 -2.5L-2.5 2.5" stroke="#fff" stroke-width="1.2" fill="none"/></svg>
<svg class="ic" style="left:1581px;top:272.4px" width="8" height="6" viewBox="0 0 8 6"><path d="M0 0H8L4 5.6Z" fill="#212529"/></svg>
<div class="t" style="left:298.50px;top:303.75px;line-height:19.5px;font-weight:700;color:#212529;font-size:13px">Telefono</div>
<div class="b" style="left:298.00px;top:329.75px;width:31.00px;height:31.25px;box-sizing:border-box;border:1px solid #ced4da;border-radius:3.25px;background:#e9ecef;padding:0 9.75px;line-height:29.25px;color:#495057;text-align:left;font-size:13px;white-space:nowrap;overflow:hidden"></div><svg class="ic" style="left:308.89px;top:339.97px;" width="10.21" height="10.21" viewBox="0.0 -1408.0 1408.0 1408.0"><path fill="#007bff" transform="scale(1,-1)" d="M1408 296q0 -27 -10 -70.5t-21 -68.5q-21 -50 -122 -106q-94 -51 -186 -51q-27 0 -53 3.5t-57.5 12.5t-47 14.5t-55.5 20.5t-49 18q-98 35 -175 83q-127 79 -264 216t-216 264q-48 77 -83 175q-3 9 -18 49t-20.5 55.5t-14.5 47t-12.5 57.5t-3.5 53q0 92 51 186 q56 101 106 122q25 11 68.5 21t70.5 10q14 0 21 -3q18 -6 53 -76q11 -19 30 -54t35 -63.5t31 -53.5q3 -4 17.5 -25t21.5 -35.5t7 -28.5q0 -20 -28.5 -50t-62 -55t-62 -53t-28.5 -46q0 -9 5 -22.5t8.5 -20.5t14 -24t11.5 -19q76 -137 174 -235t235 -174q2 -1 19 -11.5t24 -14 t20.5 -8.5t22.5 -5q18 0 46 28.5t53 62t55 62t50 28.5q14 0 28.5 -7t35.5 -21.5t25 -17.5q25 -15 53.5 -31t63.5 -35t54 -30q70 -35 76 -53q3 -7 3 -21z"/></svg>
<div class="b" style="left:329.00px;top:329.75px;width:282.60px;height:31.25px;box-sizing:border-box;border:1px solid #ced4da;border-radius:0 3.25px 3.25px 0;background:#fff;padding:0 9.75px;line-height:29.25px;color:#495057;text-align:left;font-size:13px;white-space:nowrap;overflow:hidden">0429602511</div>
<div class="t" style="left:627.00px;top:303.75px;line-height:19.5px;font-weight:700;color:#212529;font-size:13px">Cellulare</div>
<div class="b" style="left:627.00px;top:329.75px;width:31.00px;height:31.25px;box-sizing:border-box;border:1px solid #ced4da;border-radius:3.25px;background:#e9ecef;padding:0 9.75px;line-height:29.25px;color:#495057;text-align:left;font-size:13px;white-space:nowrap;overflow:hidden"></div><svg class="ic" style="left:637.89px;top:339.97px;" width="10.21" height="10.21" viewBox="0.0 -1408.0 1408.0 1408.0"><path fill="#495057" transform="scale(1,-1)" d="M1408 296q0 -27 -10 -70.5t-21 -68.5q-21 -50 -122 -106q-94 -51 -186 -51q-27 0 -53 3.5t-57.5 12.5t-47 14.5t-55.5 20.5t-49 18q-98 35 -175 83q-127 79 -264 216t-216 264q-48 77 -83 175q-3 9 -18 49t-20.5 55.5t-14.5 47t-12.5 57.5t-3.5 53q0 92 51 186 q56 101 106 122q25 11 68.5 21t70.5 10q14 0 21 -3q18 -6 53 -76q11 -19 30 -54t35 -63.5t31 -53.5q3 -4 17.5 -25t21.5 -35.5t7 -28.5q0 -20 -28.5 -50t-62 -55t-62 -53t-28.5 -46q0 -9 5 -22.5t8.5 -20.5t14 -24t11.5 -19q76 -137 174 -235t235 -174q2 -1 19 -11.5t24 -14 t20.5 -8.5t22.5 -5q18 0 46 28.5t53 62t55 62t50 28.5q14 0 28.5 -7t35.5 -21.5t25 -17.5q25 -15 53.5 -31t63.5 -35t54 -30q70 -35 76 -53q3 -7 3 -21z"/></svg>
<div class="b" style="left:658.00px;top:329.75px;width:282.60px;height:31.25px;box-sizing:border-box;border:1px solid #ced4da;border-radius:0 3.25px 3.25px 0;background:#fff;padding:0 9.75px;line-height:29.25px;color:#495057;text-align:left;font-size:13px;white-space:nowrap;overflow:hidden"></div>
<div class="t" style="left:955.50px;top:303.75px;line-height:19.5px;font-weight:700;color:#212529;font-size:13px">Indirizzo email</div>
<div class="b" style="left:956.00px;top:329.75px;width:33.30px;height:31.25px;box-sizing:border-box;border:1px solid #ced4da;border-radius:3.25px;background:#e9ecef;padding:0 9.75px;line-height:29.25px;color:#495057;text-align:left;font-size:13px;white-space:nowrap;overflow:hidden"></div><svg class="ic" style="left:966.65px;top:339.97px;" width="13.00" height="10.21" viewBox="0.0 -1280.0 1792.0 1408.0"><path fill="#495057" transform="scale(1,-1)" d="M1792 826v-794q0 -66 -47 -113t-113 -47h-1472q-66 0 -113 47t-47 113v794q44 -49 101 -87q362 -246 497 -345q57 -42 92.5 -65.5t94.5 -48t110 -24.5h1h1q51 0 110 24.5t94.5 48t92.5 65.5q170 123 498 345q57 39 100 87zM1792 1120q0 -79 -49 -151t-122 -123 q-376 -261 -468 -325q-10 -7 -42.5 -30.5t-54 -38t-52 -32.5t-57.5 -27t-50 -9h-1h-1q-23 0 -50 9t-57.5 27t-52 32.5t-54 38t-42.5 30.5q-91 64 -262 182.5t-205 142.5q-62 42 -117 115.5t-55 136.5q0 78 41.5 130t118.5 52h1472q65 0 112.5 -47t47.5 -113z"/></svg>
<div class="b" style="left:989.30px;top:329.75px;width:248.00px;height:31.25px;box-sizing:border-box;border:1px solid #ced4da;border-radius:0;background:#fff;padding:0 9.75px;line-height:29.25px;color:#495057;text-align:left;font-size:13px;white-space:nowrap;overflow:hidden"></div>
<div class="b" style="left:1236.30px;top:329.75px;width:32.30px;height:31.25px;box-sizing:border-box;border:1px solid #ced4da;border-radius:0 3.25px 3.25px 0;background:#e9ecef;padding:0 9.75px;line-height:29.25px;color:#495057;text-align:left;font-size:13px;white-space:nowrap;overflow:hidden"></div><svg class="ic" style="left:1247.38px;top:339.50px;" width="11.14" height="11.14" viewBox="0.0 -1408.0 1536.0 1536.0"><path fill="#343a40" transform="scale(1,-1)" d="M896 160v192q0 14 -9 23t-23 9h-192q-14 0 -23 -9t-9 -23v-192q0 -14 9 -23t23 -9h192q14 0 23 9t9 23zM1152 832q0 88 -55.5 163t-138.5 116t-170 41q-243 0 -371 -213q-15 -24 8 -42l132 -100q7 -6 19 -6q16 0 25 12q53 68 86 92q34 24 86 24q48 0 85.5 -26t37.5 -59 q0 -38 -20 -61t-68 -45q-63 -28 -115.5 -86.5t-52.5 -125.5v-36q0 -14 9 -23t23 -9h192q14 0 23 9t9 23q0 19 21.5 49.5t54.5 49.5q32 18 49 28.5t46 35t44.5 48t28 60.5t12.5 81zM1536 640q0 -209 -103 -385.5t-279.5 -279.5t-385.5 -103t-385.5 103t-279.5 279.5 t-103 385.5t103 385.5t279.5 279.5t385.5 103t385.5 -103t279.5 -279.5t103 -385.5z"/></svg>
<div class="t" style="left:1284.00px;top:303.75px;line-height:19.5px;font-weight:700;color:#212529;font-size:13px">Opt-out per newsletter <svg style="display:inline-block;vertical-align:-2px;margin-left:0.8px" width="11.14" height="13.00" viewBox="0 -1536 1536 1792"><path fill="#212529" transform="scale(1,-1)" d="M880 336v-160q0 -14 -9 -23t-23 -9h-160q-14 0 -23 9t-9 23v160q0 14 9 23t23 9h160q14 0 23 -9t9 -23zM1136 832q0 -50 -15 -90t-45.5 -69t-52 -44t-59.5 -36q-32 -18 -46.5 -28t-26 -24t-11.5 -29v-32q0 -14 -9 -23t-23 -9h-160q-14 0 -23 9t-9 23v68q0 35 10.5 64.5 t24 47.5t39 35.5t41 25.5t44.5 21q53 25 75 43t22 49q0 42 -43.5 71.5t-95.5 29.5q-56 0 -95 -27q-29 -20 -80 -83q-9 -12 -25 -12q-11 0 -19 6l-108 82q-10 7 -12 20t5 23q122 192 349 192q129 0 238.5 -89.5t109.5 -214.5zM768 1280q-130 0 -248.5 -51t-204 -136.5 t-136.5 -204t-51 -248.5t51 -248.5t136.5 -204t204 -136.5t248.5 -51t248.5 51t204 136.5t136.5 204t51 248.5t-51 248.5t-136.5 204t-204 136.5t-248.5 51zM1536 640q0 -209 -103 -385.5t-279.5 -279.5t-385.5 -103t-385.5 103t-279.5 279.5t-103 385.5t103 385.5 t279.5 279.5t385.5 103t385.5 -103t279.5 -279.5t103 -385.5z"/></svg></div>
<div class="b" style="left:1284.00px;top:329.75px;width:314.00px;height:31.25px;box-sizing:border-box;border:1px solid #ced4da;border-radius:3.25px;background:#f8f9fa;padding:0 9.75px;line-height:29.25px;color:#495057;text-align:left;font-size:13px;white-space:nowrap;overflow:hidden"></div><div class="b" style="left:1317.00px;top:330.75px;width:1.00px;height:29.25px;background:#ced4da"></div><svg class="ic" style="left:1296.74px;top:340.87px;" width="8.62" height="8.62" viewBox="110.0 -1170.0 1188.0 1188.0"><path fill="#dc3545" transform="scale(1,-1)" d="M1298 214q0 -40 -28 -68l-136 -136q-28 -28 -68 -28t-68 28l-294 294l-294 -294q-28 -28 -68 -28t-68 28l-136 136q-28 28 -28 68t28 68l294 294l-294 294q-28 28 -28 68t28 68l136 136q28 28 68 28t68 -28l294 -294l294 294q28 28 68 28t68 -28l136 -136q28 -28 28 -68 t-28 -68l-294 -294l294 -294q28 -28 28 -68z"/></svg><div class="t" style="left:1317.50px;top:335.88px;font-size:13px;color:#dc3545;line-height:20px;font-weight:700;width:280.50px;text-align:center;">Disattivato</div>
<div class="t" style="left:298.50px;top:381.00px;line-height:19.5px;font-weight:700;color:#212529;font-size:13px">Codice destinatario <svg style="display:inline-block;vertical-align:-2px;margin-left:0.8px" width="11.14" height="13.00" viewBox="0 -1536 1536 1792"><path fill="#212529" transform="scale(1,-1)" d="M880 336v-160q0 -14 -9 -23t-23 -9h-160q-14 0 -23 9t-9 23v160q0 14 9 23t23 9h160q14 0 23 -9t9 -23zM1136 832q0 -50 -15 -90t-45.5 -69t-52 -44t-59.5 -36q-32 -18 -46.5 -28t-26 -24t-11.5 -29v-32q0 -14 -9 -23t-23 -9h-160q-14 0 -23 9t-9 23v68q0 35 10.5 64.5 t24 47.5t39 35.5t41 25.5t44.5 21q53 25 75 43t22 49q0 42 -43.5 71.5t-95.5 29.5q-56 0 -95 -27q-29 -20 -80 -83q-9 -12 -25 -12q-11 0 -19 6l-108 82q-10 7 -12 20t5 23q122 192 349 192q129 0 238.5 -89.5t109.5 -214.5zM768 1280q-130 0 -248.5 -51t-204 -136.5 t-136.5 -204t-51 -248.5t51 -248.5t136.5 -204t204 -136.5t248.5 -51t248.5 51t204 136.5t136.5 204t51 248.5t-51 248.5t-136.5 204t-204 136.5t-248.5 51zM1536 640q0 -209 -103 -385.5t-279.5 -279.5t-385.5 -103t-385.5 103t-279.5 279.5t-103 385.5t103 385.5 t279.5 279.5t385.5 103t385.5 -103t279.5 -279.5t103 -385.5z"/></svg></div>
<div class="b" style="left:298.00px;top:407.00px;width:313.60px;height:31.25px;box-sizing:border-box;border:1px solid #ced4da;border-radius:3.25px;background:#fff;padding:0 9.75px;line-height:29.25px;color:#495057;text-align:left;font-size:13px;white-space:nowrap;overflow:hidden"></div>
<div class="t" style="left:627.00px;top:381.00px;line-height:19.5px;font-weight:700;color:#212529;font-size:13px">Rappresentante fiscale <svg style="display:inline-block;vertical-align:-2px;margin-left:0.8px" width="11.14" height="13.00" viewBox="0 -1536 1536 1792"><path fill="#212529" transform="scale(1,-1)" d="M880 336v-160q0 -14 -9 -23t-23 -9h-160q-14 0 -23 9t-9 23v160q0 14 9 23t23 9h160q14 0 23 -9t9 -23zM1136 832q0 -50 -15 -90t-45.5 -69t-52 -44t-59.5 -36q-32 -18 -46.5 -28t-26 -24t-11.5 -29v-32q0 -14 -9 -23t-23 -9h-160q-14 0 -23 9t-9 23v68q0 35 10.5 64.5 t24 47.5t39 35.5t41 25.5t44.5 21q53 25 75 43t22 49q0 42 -43.5 71.5t-95.5 29.5q-56 0 -95 -27q-29 -20 -80 -83q-9 -12 -25 -12q-11 0 -19 6l-108 82q-10 7 -12 20t5 23q122 192 349 192q129 0 238.5 -89.5t109.5 -214.5zM768 1280q-130 0 -248.5 -51t-204 -136.5 t-136.5 -204t-51 -248.5t51 -248.5t136.5 -204t204 -136.5t248.5 -51t248.5 51t204 136.5t136.5 204t51 248.5t-51 248.5t-136.5 204t-204 136.5t-248.5 51zM1536 640q0 -209 -103 -385.5t-279.5 -279.5t-385.5 -103t-385.5 103t-279.5 279.5t-103 385.5t103 385.5 t279.5 279.5t385.5 103t385.5 -103t279.5 -279.5t103 -385.5z"/></svg></div>
<div class="b" style="left:627.00px;top:407.00px;width:313.60px;height:31.25px;box-sizing:border-box;border:1px solid #ced4da;border-radius:3.25px;background:#f8f9fa;padding:0 9.75px;line-height:29.25px;color:#495057;text-align:left;font-size:13px;white-space:nowrap;overflow:hidden"></div><div class="b" style="left:660.00px;top:408.00px;width:1.00px;height:29.25px;background:#ced4da"></div><svg class="ic" style="left:639.74px;top:418.12px;" width="8.62" height="8.62" viewBox="110.0 -1170.0 1188.0 1188.0"><path fill="#dc3545" transform="scale(1,-1)" d="M1298 214q0 -40 -28 -68l-136 -136q-28 -28 -68 -28t-68 28l-294 294l-294 -294q-28 -28 -68 -28t-68 28l-136 136q-28 28 -28 68t28 68l294 294l-294 294q-28 28 -28 68t28 68l136 136q28 28 68 28t68 -28l294 -294l294 294q28 28 68 28t68 -28l136 -136q28 -28 28 -68 t-28 -68l-294 -294l294 -294q28 -28 28 -68z"/></svg><div class="t" style="left:660.50px;top:413.12px;font-size:13px;color:#dc3545;line-height:20px;font-weight:700;width:280.10px;text-align:center;">Disattivato</div>
<div class="t" style="left:955.50px;top:381.00px;line-height:19.5px;font-weight:700;color:#212529;font-size:13px">Partita IVA <svg style="display:inline-block;vertical-align:-2px;margin-left:0.8px" width="11.14" height="13.00" viewBox="0 -1536 1536 1792"><path fill="#212529" transform="scale(1,-1)" d="M880 336v-160q0 -14 -9 -23t-23 -9h-160q-14 0 -23 9t-9 23v160q0 14 9 23t23 9h160q14 0 23 -9t9 -23zM1136 832q0 -50 -15 -90t-45.5 -69t-52 -44t-59.5 -36q-32 -18 -46.5 -28t-26 -24t-11.5 -29v-32q0 -14 -9 -23t-23 -9h-160q-14 0 -23 9t-9 23v68q0 35 10.5 64.5 t24 47.5t39 35.5t41 25.5t44.5 21q53 25 75 43t22 49q0 42 -43.5 71.5t-95.5 29.5q-56 0 -95 -27q-29 -20 -80 -83q-9 -12 -25 -12q-11 0 -19 6l-108 82q-10 7 -12 20t5 23q122 192 349 192q129 0 238.5 -89.5t109.5 -214.5zM768 1280q-130 0 -248.5 -51t-204 -136.5 t-136.5 -204t-51 -248.5t51 -248.5t136.5 -204t204 -136.5t248.5 -51t248.5 51t204 136.5t136.5 204t51 248.5t-51 248.5t-136.5 204t-204 136.5t-248.5 51zM1536 640q0 -209 -103 -385.5t-279.5 -279.5t-385.5 -103t-385.5 103t-279.5 279.5t-103 385.5t103 385.5 t279.5 279.5t385.5 103t385.5 -103t279.5 -279.5t103 -385.5z"/></svg></div>
<div class="b" style="left:956.00px;top:407.00px;width:312.60px;height:31.25px;box-sizing:border-box;border:1px solid #ced4da;border-radius:3.25px;background:#e9ecef;padding:0 9.75px;line-height:29.25px;color:#495057;text-align:left;font-size:13px;white-space:nowrap;overflow:hidden"></div>
<div class="t" style="left:1284.00px;top:381.00px;line-height:19.5px;font-weight:700;color:#212529;font-size:13px">Codice fiscale <svg style="display:inline-block;vertical-align:-2px;margin-left:0.8px" width="11.14" height="13.00" viewBox="0 -1536 1536 1792"><path fill="#212529" transform="scale(1,-1)" d="M880 336v-160q0 -14 -9 -23t-23 -9h-160q-14 0 -23 9t-9 23v160q0 14 9 23t23 9h160q14 0 23 -9t9 -23zM1136 832q0 -50 -15 -90t-45.5 -69t-52 -44t-59.5 -36q-32 -18 -46.5 -28t-26 -24t-11.5 -29v-32q0 -14 -9 -23t-23 -9h-160q-14 0 -23 9t-9 23v68q0 35 10.5 64.5 t24 47.5t39 35.5t41 25.5t44.5 21q53 25 75 43t22 49q0 42 -43.5 71.5t-95.5 29.5q-56 0 -95 -27q-29 -20 -80 -83q-9 -12 -25 -12q-11 0 -19 6l-108 82q-10 7 -12 20t5 23q122 192 349 192q129 0 238.5 -89.5t109.5 -214.5zM768 1280q-130 0 -248.5 -51t-204 -136.5 t-136.5 -204t-51 -248.5t51 -248.5t136.5 -204t204 -136.5t248.5 -51t248.5 51t204 136.5t136.5 204t51 248.5t-51 248.5t-136.5 204t-204 136.5t-248.5 51zM1536 640q0 -209 -103 -385.5t-279.5 -279.5t-385.5 -103t-385.5 103t-279.5 279.5t-103 385.5t103 385.5 t279.5 279.5t385.5 103t385.5 -103t279.5 -279.5t103 -385.5z"/></svg></div>
<div class="b" style="left:1284.00px;top:407.00px;width:314.00px;height:31.25px;box-sizing:border-box;border:1px solid #ced4da;border-radius:3.25px;background:#e9ecef;padding:0 9.75px;line-height:29.25px;color:#495057;text-align:left;font-size:13px;white-space:nowrap;overflow:hidden"></div>
<div class="t" style="left:298.50px;top:458.00px;line-height:19.5px;font-weight:700;color:#212529;font-size:13px">Automezzo <svg style="display:inline-block;vertical-align:-2px;margin-left:0.8px" width="11.14" height="13.00" viewBox="0 -1536 1536 1792"><path fill="#212529" transform="scale(1,-1)" d="M880 336v-160q0 -14 -9 -23t-23 -9h-160q-14 0 -23 9t-9 23v160q0 14 9 23t23 9h160q14 0 23 -9t9 -23zM1136 832q0 -50 -15 -90t-45.5 -69t-52 -44t-59.5 -36q-32 -18 -46.5 -28t-26 -24t-11.5 -29v-32q0 -14 -9 -23t-23 -9h-160q-14 0 -23 9t-9 23v68q0 35 10.5 64.5 t24 47.5t39 35.5t41 25.5t44.5 21q53 25 75 43t22 49q0 42 -43.5 71.5t-95.5 29.5q-56 0 -95 -27q-29 -20 -80 -83q-9 -12 -25 -12q-11 0 -19 6l-108 82q-10 7 -12 20t5 23q122 192 349 192q129 0 238.5 -89.5t109.5 -214.5zM768 1280q-130 0 -248.5 -51t-204 -136.5 t-136.5 -204t-51 -248.5t51 -248.5t136.5 -204t204 -136.5t248.5 -51t248.5 51t204 136.5t136.5 204t51 248.5t-51 248.5t-136.5 204t-204 136.5t-248.5 51zM1536 640q0 -209 -103 -385.5t-279.5 -279.5t-385.5 -103t-385.5 103t-279.5 279.5t-103 385.5t103 385.5 t279.5 279.5t385.5 103t385.5 -103t279.5 -279.5t103 -385.5z"/></svg></div>
<div class="b" style="left:298.00px;top:483.25px;width:423.00px;height:31.25px;box-sizing:border-box;border:1px solid #ced4da;border-radius:3.25px;background:#f8f9fa;padding:0 9.75px;line-height:29.25px;color:#495057;text-align:left;font-size:13px;white-space:nowrap;overflow:hidden"></div><div class="b" style="left:332.00px;top:484.25px;width:1.00px;height:29.25px;background:#ced4da"></div><svg class="ic" style="left:311.24px;top:494.37px;" width="8.62" height="8.62" viewBox="110.0 -1170.0 1188.0 1188.0"><path fill="#dc3545" transform="scale(1,-1)" d="M1298 214q0 -40 -28 -68l-136 -136q-28 -28 -68 -28t-68 28l-294 294l-294 -294q-28 -28 -68 -28t-68 28l-136 136q-28 28 -28 68t28 68l294 294l-294 294q-28 28 -28 68t28 68l136 136q28 28 68 28t68 -28l294 -294l294 294q28 28 68 28t68 -28l136 -136q28 -28 28 -68 t-28 -68l-294 -294l294 -294q28 -28 28 -68z"/></svg><div class="t" style="left:332.50px;top:489.38px;font-size:13px;color:#dc3545;line-height:20px;font-weight:700;width:388.50px;text-align:center;">Disattivato</div>
<div class="t" style="left:736.50px;top:458.00px;line-height:19.5px;font-weight:700;color:#212529;font-size:13px">Zona</div>
<div class="b" style="left:735.00px;top:483.25px;width:391.40px;height:31.75px;box-sizing:border-box;border:1px solid #ced4da;border-radius:0;background:#fff;padding:0 9.75px;line-height:29.75px;color:#6c757d;text-align:left;font-size:13px;white-space:nowrap;overflow:hidden">Nessuna zona</div>
<svg class="ic" style="left:1110px;top:496.2px" width="8" height="6" viewBox="0 0 8 6"><path d="M0 0H7.6L3.8 5.2Z" fill="#212529"/></svg>
<div class="b" style="left:1126.40px;top:483.25px;width:33.30px;height:31.25px;box-sizing:border-box;border:1px solid #ced4da;border-radius:0 3.25px 3.25px 0;background:#e9ecef;padding:0 9.75px;line-height:29.25px;color:#495057;text-align:left;font-size:13px;white-space:nowrap;overflow:hidden"></div><svg class="ic" style="left:1138.44px;top:493.47px;" width="10.21" height="10.21" viewBox="0.0 -1408.0 1408.0 1408.0"><path fill="#212529" transform="scale(1,-1)" d="M1408 800v-192q0 -40 -28 -68t-68 -28h-416v-416q0 -40 -28 -68t-68 -28h-192q-40 0 -68 28t-28 68v416h-416q-40 0 -68 28t-28 68v192q0 40 28 68t68 28h416v416q0 40 28 68t68 28h192q40 0 68 -28t28 -68v-416h416q40 0 68 -28t28 -68z"/></svg>
<div class="t" style="left:1174.50px;top:458.00px;line-height:19.5px;font-weight:700;color:#212529;font-size:13px">Km</div>
<div class="b" style="left:1175.00px;top:483.25px;width:423.00px;height:31.25px;box-sizing:border-box;border:1px solid #ced4da;border-radius:3.25px;background:#fff;padding:0 9.75px;line-height:29.25px;color:#495057;text-align:right;font-size:13px;white-space:nowrap;overflow:hidden">0,00</div>
<div class="t" style="left:298.50px;top:534.00px;line-height:19.5px;font-weight:700;color:#212529;font-size:13px">Referenti</div>
<div class="b" style="left:297.00px;top:560.00px;width:611.00px;height:32.00px;box-sizing:border-box;border:1px solid #ced4da;border-radius:0;background:#fff;padding:0 5.8px;line-height:30.00px;color:#999;text-align:left;font-size:13px;white-space:nowrap;overflow:hidden">Seleziona un'opzione</div>
<div class="b" style="left:907.30px;top:560.25px;width:33.70px;height:31.25px;box-sizing:border-box;border:1px solid #ced4da;border-radius:0 3.25px 3.25px 0;background:#e9ecef;padding:0 9.75px;line-height:29.25px;color:#495057;text-align:left;font-size:13px;white-space:nowrap;overflow:hidden"></div><svg class="ic" style="left:919.54px;top:570.47px;" width="10.21" height="10.21" viewBox="0.0 -1408.0 1408.0 1408.0"><path fill="#212529" transform="scale(1,-1)" d="M1408 800v-192q0 -40 -28 -68t-68 -28h-416v-416q0 -40 -28 -68t-68 -28h-192q-40 0 -68 28t-28 68v416h-416q-40 0 -68 28t-28 68v192q0 40 28 68t68 28h416v416q0 40 28 68t68 28h192q40 0 68 -28t28 -68v-416h416q40 0 68 -28t28 -68z"/></svg>
<div class="t" style="left:955.50px;top:534.00px;line-height:19.5px;font-weight:700;color:#212529;font-size:13px">Note</div>
<div class="b" style="left:956.00px;top:560.00px;width:642.00px;height:50.75px;box-sizing:border-box;border:1px solid #ced4da;border-radius:3.25px;background:#fff;padding:0 9.75px;line-height:48.75px;color:#495057;text-align:left;font-size:13px;white-space:nowrap;overflow:hidden"></div>
<div class="t" style="left:298.50px;top:624.00px;line-height:19.5px;font-weight:700;color:#212529;font-size:13px">Indirizzo Mappa</div>
<div class="b" style="left:298.00px;top:650.00px;width:533.00px;height:31.25px;box-sizing:border-box;border:1px solid #ced4da;border-radius:3.25px;background:#fff;padding:0 9.75px;line-height:29.25px;color:#495057;text-align:left;font-size:13px;white-space:nowrap;overflow:hidden">51, Via Rovigo, Prà, Este, Padova, Veneto, 35042, Italia</div>
<div class="b" style="left:846.00px;top:649.75px;width:34.00px;height:31.00px;background:#007bff;border-radius:3.25px"></div>
<svg class="ic" style="left:856.96px;top:659.36px;" width="12.07" height="12.07" viewBox="0.0 -1408.0 1664.0 1664.0"><path fill="#fff" transform="scale(1,-1)" d="M1152 704q0 185 -131.5 316.5t-316.5 131.5t-316.5 -131.5t-131.5 -316.5t131.5 -316.5t316.5 -131.5t316.5 131.5t131.5 316.5zM1664 -128q0 -52 -38 -90t-90 -38q-54 0 -90 38l-343 342q-179 -124 -399 -124q-143 0 -273.5 55.5t-225 150t-150 225t-55.5 273.5 t55.5 273.5t150 225t225 150t273.5 55.5t273.5 -55.5t225 -150t150 -225t55.5 -273.5q0 -220 -124 -399l343 -343q37 -37 37 -90z"/></svg>
<div class="t" style="left:955.50px;top:624.00px;line-height:19.5px;font-weight:700;color:#212529;font-size:13px">Latitudine</div>
<div class="b" style="left:956.00px;top:650.00px;width:204.00px;height:31.25px;box-sizing:border-box;border:1px solid #ced4da;border-radius:3.25px;background:#e9ecef;padding:0 9.75px;line-height:29.25px;color:#495057;text-align:right;font-size:13px;white-space:nowrap;overflow:hidden">45.219788</div>
<div class="t" style="left:1174.50px;top:624.00px;line-height:19.5px;font-weight:700;color:#212529;font-size:13px">Longitudine</div>
<div class="b" style="left:1175.00px;top:650.00px;width:204.00px;height:31.25px;box-sizing:border-box;border:1px solid #ced4da;border-radius:3.25px;background:#e9ecef;padding:0 9.75px;line-height:29.25px;color:#495057;text-align:right;font-size:13px;white-space:nowrap;overflow:hidden">11.666379</div>
<div class="b" style="left:1394.00px;top:649.75px;width:34.50px;height:31.00px;background:#17a2b8;border-radius:3.25px"></div>
<svg class="ic" style="left:1407.21px;top:659.27px;" width="8.17" height="12.26" viewBox="0.0 -1408.0 1024.0 1536.0"><path fill="#fff" transform="scale(1,-1)" d="M768 896q0 106 -75 181t-181 75t-181 -75t-75 -181t75 -181t181 -75t181 75t75 181zM1024 896q0 -109 -33 -179l-364 -774q-16 -33 -47.5 -52t-67.5 -19t-67.5 19t-46.5 52l-365 774q-33 70 -33 179q0 212 150 362t362 150t362 -150t150 -362z"/></svg>
<div class="b" style="left:1433.00px;top:649.75px;width:35.70px;height:31.00px;background:#007bff;border-radius:3.25px"></div>
<svg class="ic" style="left:1443.37px;top:659.40px;" width="14.86" height="11.61" viewBox="0.0 -1408.0 2048.0 1600.0"><path fill="#fff" transform="scale(1,-1)" d="M480 448q0 66 -47 113t-113 47t-113 -47t-47 -113t47 -113t113 -47t113 47t47 113zM516 768h1016l-89 357q-2 8 -14 17.5t-21 9.5h-768q-9 0 -21 -9.5t-14 -17.5zM1888 448q0 66 -47 113t-113 47t-113 -47t-47 -113t47 -113t113 -47t113 47t47 113zM2048 544v-384 q0 -14 -9 -23t-23 -9h-96v-128q0 -80 -56 -136t-136 -56t-136 56t-56 136v128h-1024v-128q0 -80 -56 -136t-136 -56t-136 56t-56 136v128h-96q-14 0 -23 9t-9 23v384q0 93 65.5 158.5t158.5 65.5h28l105 419q23 94 104 157.5t179 63.5h768q98 0 179 -63.5t104 -157.5 l105 -419h28q93 0 158.5 -65.5t65.5 -158.5z"/></svg>
<svg class="ic" style="left:298px;top:694px;overflow:hidden" width="1299.5" height="230" viewBox="298 694 1299.5 230" font-family="'DejaVu Sans Condensed','DejaVu Sans','Liberation Sans',sans-serif">
<defs><clipPath id="tiles"><path d="M298 694H388V773H298Z M644 694H1598V773H644Z M388 773H1598V924H388Z"/></clipPath><pattern id="wet" width="19" height="11" patternUnits="userSpaceOnUse" patternTransform="translate(3,1) skewX(-12)"><path d="M1 1.5H7M11 5H17.5M4 8.6H10.5" stroke="#4a9dff" stroke-width=".75" fill="none"/></pattern><pattern id="forest" width="9" height="9" patternUnits="userSpaceOnUse"><rect width="9" height="9" fill="#c3dcb0"/><circle cx="2" cy="2" r="1.6" fill="#b3d3a0"/><circle cx="6.5" cy="6" r="1.8" fill="#b8d6a4"/></pattern><filter id="blur0" x="-20%" y="-20%" width="140%" height="140%"><feGaussianBlur stdDeviation="1.1"/></filter><filter id="blur3" x="-30%" y="-30%" width="160%" height="160%"><feGaussianBlur stdDeviation="4"/></filter></defs>
<rect x="298" y="694" width="1300" height="230" fill="#dddddd"/>
<g clip-path="url(#tiles)">
<rect x="298" y="694" width="1300" height="230" fill="#f2efe9"/>
<defs><linearGradient id="farm" gradientUnits="userSpaceOnUse" x1="388" x2="640" y1="0" y2="0"><stop offset="0" stop-color="#eef0d8"/><stop offset=".45" stop-color="#eff0dc"/><stop offset="1" stop-color="#f2efe9"/></linearGradient></defs><rect x="388" y="773" width="256" height="151" fill="url(#farm)"/>
<rect x="298" y="694" width="90" height="79" fill="#eef2e2"/>
<path d="M644 773H760L800 830L700 924H644Z" fill="#f0efe0" opacity=".8"/>
<rect x="303" y="716" width="10" height="7" rx="2" fill="#cfe6c0" opacity=".8"/>
<rect x="320" y="705" width="14" height="6" rx="2" fill="#cfe6c0" opacity=".8"/>
<rect x="345" y="722" width="12" height="8" rx="2" fill="#cfe6c0" opacity=".8"/>
<rect x="355" y="742" width="16" height="7" rx="2" fill="#cfe6c0" opacity=".8"/>
<rect x="300" y="735" width="8" height="10" rx="2" fill="#cfe6c0" opacity=".8"/>
<rect x="365" y="700" width="12" height="7" rx="2" fill="#cfe6c0" opacity=".8"/>
<rect x="330" y="730" width="9" height="5" rx="2" fill="#cfe6c0" opacity=".8"/>
<rect x="372" y="755" width="10" height="8" rx="2" fill="#cfe6c0" opacity=".8"/>
<polygon points="891.0,855.0 929.0,850.0 935.0,893.0 895.0,893.0" fill="#eff0d6" opacity=".75" filter="url(#blur3)"/>
<polygon points="912.0,897.0 1025.0,897.0 1025.0,924.0 912.0,924.0" fill="#eff0d6" opacity=".75" filter="url(#blur3)"/>
<polygon points="820.0,870.0 860.0,865.0 865.0,900.0 822.0,905.0" fill="#eff0d6" opacity=".75" filter="url(#blur3)"/>
<polygon points="690.0,860.0 760.0,850.0 770.0,900.0 700.0,915.0" fill="#eff0d6" opacity=".75" filter="url(#blur3)"/>
<polygon points="1100.0,850.0 1180.0,845.0 1185.0,890.0 1105.0,895.0" fill="#eff0d6" opacity=".75" filter="url(#blur3)"/>
<polygon points="1040.0,740.0 1075.0,745.0 1070.0,780.0 1045.0,778.0" fill="#eff0d6" opacity=".75" filter="url(#blur3)"/>
<path d="M291.3 688.8Q297.9 687.4 308.7 684.4M291.3 688.8Q293.0 698.6 297.9 708.5M297.9 708.5Q299.5 705.9 306.4 708.5M292.1 731.2Q300.2 732.9 312.2 734.8M287.6 751.2Q290.2 765.5 293.8 776.1M293.8 776.1Q303.7 776.1 313.0 774.3M293.8 776.1Q288.7 785.8 286.3 790.2M286.3 790.2Q288.3 805.6 286.3 818.3M286.3 790.2L320.0 820.9M286.3 818.3Q301.1 817.4 320.0 820.9M286.3 818.3Q289.6 825.0 294.7 828.6M294.7 828.6Q303.3 831.5 317.8 837.9M294.7 828.6L310.4 852.2M298.8 862.5Q306.4 859.1 310.4 852.2M287.2 891.2Q292.5 901.4 292.4 912.8M292.4 912.8Q307.6 912.3 317.9 917.4M308.7 684.4Q322.9 688.0 340.4 692.9M308.7 684.4Q308.5 698.3 306.4 708.5M306.4 708.5Q315.8 705.4 327.0 704.9M312.2 734.8Q325.0 733.6 339.7 729.6M312.2 734.8Q314.2 744.2 313.3 753.0M313.3 753.0Q324.6 749.1 340.7 749.6M313.3 753.0Q312.7 760.7 313.0 774.3M313.0 774.3Q319.4 774.3 328.0 773.8M312.4 789.9Q317.7 803.1 320.0 820.9M320.0 820.9Q326.9 814.6 328.2 811.7M320.0 820.9Q320.1 827.5 317.8 837.9M317.8 837.9Q331.8 837.2 340.5 838.6M317.8 837.9Q313.2 848.0 310.4 852.2M317.8 837.9L328.7 852.4M310.4 852.2Q318.8 853.2 328.7 852.4M310.4 852.2Q310.9 863.9 310.0 871.0M310.0 871.0Q319.3 871.3 328.4 870.8M310.0 871.0Q315.4 884.9 316.7 896.6M316.7 896.6Q327.0 894.4 338.2 893.5M316.7 896.6Q317.9 907.4 317.9 917.4M317.9 917.4Q327.1 917.5 334.8 918.3M340.4 692.9Q346.1 694.6 350.7 691.2M340.4 692.9Q333.5 701.9 327.0 704.9M327.0 704.9Q339.8 710.9 349.8 711.0M327.0 704.9Q335.6 715.0 339.7 729.6M339.7 729.6Q343.1 731.3 349.6 728.9M339.7 729.6Q342.9 741.5 340.7 749.6M340.7 749.6Q348.8 746.1 351.0 747.8M328.0 773.8Q346.7 774.8 361.6 776.2M328.0 773.8Q335.2 780.0 337.9 789.8M337.9 789.8Q342.5 794.4 352.3 798.4M328.2 811.7Q341.4 814.2 350.9 812.5M340.5 838.6L349.4 862.9M328.7 852.4Q336.6 854.9 349.4 862.9M328.7 852.4Q330.7 863.6 328.4 870.8M328.7 852.4L351.0 873.6M328.4 870.8Q339.0 874.3 351.0 873.6M328.4 870.8Q335.7 879.6 338.2 893.5M338.2 893.5Q349.3 896.8 358.8 895.6M334.8 918.3Q343.1 912.7 352.1 913.0M350.7 691.2Q359.4 691.0 370.3 689.2M350.7 691.2Q350.9 702.3 349.8 711.0M349.8 711.0Q362.3 710.5 372.4 710.4M349.8 711.0Q347.4 722.6 349.6 728.9M349.6 728.9Q360.1 732.1 374.2 729.3M349.6 728.9Q351.7 737.5 351.0 747.8M351.0 747.8Q364.6 750.1 382.4 750.8M351.0 747.8Q358.2 761.5 361.6 776.2M361.6 776.2Q372.0 775.8 377.0 777.1M361.6 776.2Q355.3 787.8 352.3 798.4M352.3 798.4Q353.7 806.5 350.9 812.5M350.9 812.5Q356.9 825.4 360.0 837.0M360.0 837.0Q365.7 832.5 372.5 830.7M360.0 837.0Q357.4 848.7 349.4 862.9M349.4 862.9Q362.8 862.0 379.4 862.2M349.4 862.9Q352.6 866.7 351.0 873.6M351.0 873.6Q363.3 880.6 371.8 883.3M351.0 873.6Q355.2 882.2 358.8 895.6M358.8 895.6Q369.3 896.8 381.4 899.4M352.1 913.0Q365.9 915.9 374.9 913.5M370.3 689.2Q381.2 691.6 390.5 694.5M370.3 689.2Q371.1 698.7 372.4 710.4M372.4 710.4Q385.7 714.0 393.3 711.9M374.2 729.3Q379.5 743.0 382.4 750.8M374.2 729.3L398.4 748.1M382.4 750.8Q389.8 750.4 398.4 748.1M382.4 750.8Q382.7 762.2 377.0 777.1M377.0 777.1Q384.1 777.6 392.5 775.1M377.0 777.1Q372.3 783.5 371.6 788.2M371.6 788.2Q378.5 804.7 381.7 818.4M381.7 818.4Q389.6 815.8 397.8 818.9M372.5 830.7Q375.0 846.6 379.4 862.2M379.4 862.2Q392.8 855.8 402.8 851.9M379.4 862.2Q373.3 873.1 371.8 883.3M379.4 862.2L390.2 873.8M371.8 883.3Q381.1 877.3 390.2 873.8M381.4 899.4Q386.1 894.0 396.2 891.8M381.4 899.4Q378.5 906.2 374.9 913.5M374.9 913.5Q385.8 913.2 392.5 917.2M390.5 694.5Q391.4 703.8 393.3 711.9M393.3 711.9Q390.5 721.1 393.6 734.5M393.6 734.5Q393.9 741.5 398.4 748.1M393.6 734.5L420.7 752.2M398.4 748.1Q408.3 752.9 420.7 752.2M398.4 748.1Q397.5 758.9 392.5 775.1M392.5 775.1Q401.3 768.0 413.0 765.5M391.0 789.2Q402.0 796.3 411.3 798.7M397.8 818.9Q411.7 819.1 420.8 820.5M397.8 818.9Q399.7 824.0 398.6 831.9M398.6 831.9Q404.8 833.6 411.3 836.9M398.6 831.9Q400.4 839.2 402.8 851.9M402.8 851.9Q410.5 855.8 417.8 859.2M402.8 851.9Q394.9 860.4 390.2 873.8M390.2 873.8Q402.8 877.3 415.5 884.0M396.2 891.8Q403.6 898.0 412.1 898.6M396.2 891.8Q394.9 907.3 392.5 917.2M392.5 917.2Q406.1 919.7 421.3 924.6M419.0 682.8Q431.2 685.7 442.3 690.9M419.0 682.8Q417.6 700.2 416.1 714.5M419.0 682.8L443.1 714.8M416.1 714.5Q428.1 713.3 443.1 714.8M424.7 732.2Q421.4 743.3 420.7 752.2M424.7 732.2L444.6 756.2M413.0 765.5Q427.3 772.5 437.8 776.1M413.0 765.5Q409.4 783.7 411.3 798.7M413.0 765.5L444.1 794.0M411.3 798.7Q428.0 798.9 444.1 794.0M411.3 798.7Q413.2 812.2 420.8 820.5M420.8 820.5Q427.8 817.8 440.7 812.4M420.8 820.5Q417.1 831.6 411.3 836.9M411.3 836.9Q427.4 836.4 440.2 836.5M417.8 859.2Q425.1 856.3 433.1 858.0M417.8 859.2Q418.0 869.0 415.5 884.0M417.8 859.2L445.9 882.3M415.5 884.0Q414.0 889.0 412.1 898.6M415.5 884.0L442.2 896.4M412.1 898.6Q429.8 897.9 442.2 896.4M421.3 924.6Q432.0 924.4 442.3 920.1M442.3 690.9Q453.0 691.6 459.2 692.7M442.3 690.9Q442.3 702.1 443.1 714.8M443.1 714.8Q441.2 723.0 436.9 732.6M436.9 732.6Q446.6 730.0 453.4 731.4M436.9 732.6Q439.0 743.5 444.6 756.2M436.9 732.6L459.7 747.2M444.6 756.2Q452.7 751.8 459.7 747.2M444.6 756.2Q441.7 768.2 437.8 776.1M437.8 776.1Q450.2 776.9 462.8 772.0M437.8 776.1Q442.1 783.4 444.1 794.0M444.1 794.0Q441.0 800.6 440.7 812.4M440.7 812.4Q450.0 809.4 456.6 807.2M440.7 812.4Q440.8 827.3 440.2 836.5M440.2 836.5Q448.6 835.4 457.2 837.5M440.2 836.5L455.8 851.4M433.1 858.0Q446.6 851.9 455.8 851.4M433.1 858.0Q439.9 870.4 445.9 882.3M445.9 882.3Q458.5 882.4 465.7 879.2M445.9 882.3L459.2 903.5M442.2 896.4Q440.4 908.5 442.3 920.1M442.3 920.1Q451.5 921.2 457.6 921.3M454.2 712.5Q472.4 715.0 485.3 714.8M454.2 712.5Q455.9 723.3 453.4 731.4M453.4 731.4Q467.0 730.1 486.3 728.4M453.4 731.4Q455.3 737.8 459.7 747.2M453.4 731.4L482.2 748.4M459.7 747.2Q469.6 746.5 482.2 748.4M459.7 747.2Q461.3 761.8 462.8 772.0M459.7 747.2L475.9 772.0M461.6 798.9Q475.1 798.6 485.7 797.9M461.6 798.9Q461.6 804.7 456.6 807.2M456.6 807.2Q472.9 812.9 484.0 820.3M457.2 837.5Q466.8 835.3 477.9 830.4M455.8 851.4Q467.2 850.5 480.3 852.9M455.8 851.4L477.0 875.8M465.7 879.2Q459.9 893.8 459.2 903.5M465.7 879.2L482.8 897.9M459.2 903.5Q468.7 903.6 482.8 897.9M459.2 903.5Q460.6 909.8 457.6 921.3M457.6 921.3Q465.2 923.0 478.4 923.7M476.8 687.0Q483.2 702.6 485.3 714.8M485.3 714.8Q490.8 706.7 496.0 702.4M485.3 714.8Q484.9 721.6 486.3 728.4M486.3 728.4Q496.3 725.9 507.2 723.6M486.3 728.4Q484.2 738.8 482.2 748.4M482.2 748.4Q491.4 749.0 504.9 752.0M482.2 748.4Q480.2 762.8 475.9 772.0M485.7 797.9Q484.8 809.6 484.0 820.3M484.0 820.3Q493.3 816.4 501.4 807.3M484.0 820.3Q481.0 828.1 477.9 830.4M484.0 820.3L506.6 831.3M477.9 830.4Q494.5 833.6 506.6 831.3M477.9 830.4Q476.3 843.6 480.3 852.9M480.3 852.9Q489.1 852.8 497.0 849.7M480.3 852.9L503.8 876.3M477.0 875.8Q492.2 878.9 503.8 876.3M482.8 897.9Q492.4 896.1 503.8 900.2M478.4 923.7Q492.5 923.6 506.3 925.4M508.7 687.3Q516.9 684.0 525.6 683.8M508.7 687.3L522.7 704.5M496.0 702.4Q507.9 703.3 522.7 704.5M507.2 723.6Q512.6 725.2 516.2 729.6M507.2 723.6Q504.6 740.0 504.9 752.0M504.9 752.0Q514.3 748.2 526.0 746.5M499.3 776.1Q494.8 783.6 495.3 787.9M495.3 787.9Q510.0 793.5 525.8 793.3M495.3 787.9Q497.5 800.1 501.4 807.3M501.4 807.3Q510.8 814.2 524.6 817.6M506.6 831.3Q500.5 841.1 497.0 849.7M497.0 849.7Q514.7 847.0 528.7 850.2M497.0 849.7Q499.7 860.3 503.8 876.3M503.8 876.3Q514.7 880.5 529.1 880.1M503.8 900.2Q513.4 896.6 517.8 897.3M503.8 900.2Q507.7 911.0 506.3 925.4M503.8 900.2L524.8 924.7M506.3 925.4Q517.8 926.4 524.8 924.7M525.6 683.8Q523.4 691.9 522.7 704.5M522.7 704.5Q517.5 716.1 516.2 729.6M522.7 704.5L550.2 729.5M516.2 729.6Q531.3 727.3 550.2 729.5M516.2 729.6Q521.3 738.5 526.0 746.5M526.0 746.5Q538.7 744.2 546.1 746.9M526.0 746.5Q520.4 757.0 519.8 769.8M519.8 769.8Q520.7 780.5 525.8 793.3M525.8 793.3Q537.6 797.5 546.0 796.0M525.8 793.3Q525.8 807.5 524.6 817.6M524.6 817.6Q535.0 821.5 540.0 819.6M524.6 817.6Q524.6 827.7 521.5 839.1M524.6 817.6L550.7 841.7M521.5 839.1Q534.2 841.8 550.7 841.7M521.5 839.1Q522.2 843.0 528.7 850.2M528.7 850.2Q537.5 854.9 544.5 860.1M528.7 850.2Q526.0 864.0 529.1 880.1M528.7 850.2L541.5 882.7M529.1 880.1Q536.0 880.6 541.5 882.7M529.1 880.1Q524.2 887.6 517.8 897.3M517.8 897.3Q520.8 911.3 524.8 924.7M524.8 924.7Q533.9 919.9 538.2 918.2M549.3 713.2Q557.1 710.7 564.8 702.4M549.3 713.2Q547.8 722.7 550.2 729.5M550.2 729.5Q557.7 729.4 569.3 723.9M550.2 729.5Q545.8 739.3 546.1 746.9M546.1 746.9Q557.6 749.2 569.2 746.4M546.1 746.9Q545.9 758.7 547.1 776.5M547.1 776.5Q555.3 777.0 562.7 776.0M547.1 776.5Q544.1 786.2 546.0 796.0M546.0 796.0Q555.8 790.7 560.0 788.1M546.0 796.0Q540.5 809.6 540.0 819.6M550.7 841.7Q547.2 851.2 544.5 860.1M544.5 860.1Q557.8 856.7 571.2 855.9M541.5 882.7Q554.6 875.3 571.3 871.2M565.7 691.8Q578.7 691.8 587.9 688.3M565.7 691.8Q567.2 695.9 564.8 702.4M564.8 702.4Q567.1 712.2 569.3 723.9M569.3 723.9Q578.8 728.7 583.4 728.3M569.3 723.9Q566.7 736.2 569.2 746.4M569.3 723.9L590.8 756.6M562.7 776.0Q573.5 778.0 581.9 776.9M560.0 788.1Q577.6 788.1 592.6 793.3M569.8 837.7Q570.5 846.1 571.2 855.9M571.2 855.9Q577.3 854.4 587.5 849.4M571.2 855.9Q572.2 865.2 571.3 871.2M571.3 871.2Q580.8 872.9 592.6 877.2M571.3 871.2Q567.1 885.9 561.1 898.4M561.1 898.4Q575.4 902.8 584.6 902.2M561.1 898.4Q564.3 911.0 562.1 922.2M587.9 688.3Q597.5 685.3 609.7 681.9M587.9 688.3Q586.6 701.3 590.8 709.8M590.8 709.8Q600.6 707.3 607.5 707.8M590.8 709.8Q587.6 717.5 583.4 728.3M583.4 728.3Q595.7 731.3 613.4 735.9M583.4 728.3Q589.8 743.3 590.8 756.6M590.8 756.6Q595.7 753.5 603.8 750.6M590.8 756.6L601.8 771.1M581.9 776.9Q593.0 775.6 601.8 771.1M581.9 776.9Q588.1 787.8 592.6 793.3M592.6 793.3Q602.2 799.0 611.4 798.6M592.6 793.3Q587.9 803.2 587.0 809.8M592.6 793.3L606.7 811.4M587.0 809.8Q597.2 809.3 606.7 811.4M587.0 809.8Q588.1 821.3 586.5 835.0M586.5 835.0Q595.8 835.6 602.7 836.7M586.5 835.0Q584.6 842.1 587.5 849.4M587.5 849.4Q587.4 861.9 592.6 877.2M592.6 877.2Q599.5 873.3 610.9 870.3M592.6 877.2Q590.1 889.1 584.6 902.2M584.6 902.2Q594.4 895.5 602.7 894.2M584.6 902.2Q583.5 907.9 586.9 918.9M586.9 918.9Q595.7 917.0 609.6 916.5M609.7 681.9Q615.5 688.5 626.0 689.7M607.5 707.8Q613.9 712.9 622.5 712.2M607.5 707.8Q609.3 720.2 613.4 735.9M613.4 735.9Q617.5 732.4 622.7 730.1M603.8 750.6Q602.5 760.0 601.8 771.1M601.8 771.1Q614.0 771.8 628.4 771.1M601.8 771.1Q605.4 786.5 611.4 798.6M611.4 798.6Q621.1 794.9 626.3 791.8M611.4 798.6Q611.4 807.9 606.7 811.4M606.7 811.4Q618.6 811.8 628.4 809.2M606.7 811.4Q606.0 826.7 602.7 836.7M602.7 836.7Q612.9 837.7 623.9 836.8M602.7 836.7Q609.4 844.0 613.0 850.8M613.0 850.8Q622.7 850.7 629.9 856.4M613.0 850.8Q613.5 859.1 610.9 870.3M610.9 870.3Q621.3 877.4 632.9 878.6M610.9 870.3Q609.3 879.6 602.7 894.2M609.6 916.5Q621.8 921.5 631.4 923.3M626.0 689.7Q622.7 702.2 622.5 712.2M622.5 712.2Q637.4 711.4 646.4 714.9M624.5 746.8Q639.6 746.3 654.4 745.9M624.5 746.8Q627.2 761.3 628.4 771.1M628.4 771.1Q638.7 772.7 645.4 775.2M628.4 771.1Q628.0 781.2 626.3 791.8M626.3 791.8Q630.1 799.6 628.4 809.2M628.4 809.2Q639.8 812.2 653.7 812.9M628.4 809.2Q628.1 822.3 623.9 836.8M623.9 836.8Q638.7 830.4 653.1 829.8M623.9 836.8Q627.8 844.5 629.9 856.4M632.9 878.6Q635.3 873.2 642.2 872.8M633.0 894.3Q642.2 900.2 651.6 903.8M633.0 894.3Q634.1 911.0 631.4 923.3M631.4 923.3Q644.7 917.5 655.6 913.6M654.6 685.4Q650.4 699.1 646.4 714.9M646.4 714.9Q646.4 728.9 645.1 737.0M645.1 737.0Q656.1 728.4 665.6 724.0M654.4 745.9Q659.0 747.2 664.5 744.5M645.4 775.2Q657.2 774.9 670.7 772.2M645.4 775.2Q647.8 783.5 645.6 787.4M645.6 787.4Q656.7 789.0 671.0 788.1M645.6 787.4Q650.8 797.5 653.7 812.9M653.7 812.9Q660.1 809.0 665.6 809.9M653.7 812.9Q652.5 824.2 653.1 829.8M653.1 829.8Q648.0 841.3 647.6 858.6M647.6 858.6Q660.4 855.5 676.0 850.3M647.6 858.6Q643.9 865.5 642.2 872.8M642.2 872.8Q652.2 877.2 663.9 883.3M642.2 872.8Q645.7 886.9 651.6 903.8M642.2 872.8L669.5 901.7M651.6 903.8Q661.1 901.3 669.5 901.7M651.6 903.8Q655.6 908.5 655.6 913.6M655.6 913.6Q663.9 917.6 667.6 918.5M670.1 691.6Q681.6 690.5 691.2 687.0M670.1 691.6Q669.5 700.9 670.0 711.6M670.0 711.6Q681.4 707.1 692.4 702.2M665.6 724.0Q676.9 728.2 693.8 734.8M665.6 724.0Q666.8 735.0 664.5 744.5M664.5 744.5Q677.7 749.5 686.5 750.4M664.5 744.5Q668.8 759.8 670.7 772.2M670.7 772.2Q682.9 773.7 694.4 770.7M671.0 788.1Q666.8 801.8 665.6 809.9M665.6 809.9Q677.2 810.7 691.2 807.2M665.6 809.9Q673.1 823.3 674.8 841.9M674.8 841.9Q683.5 839.9 696.5 839.2M674.8 841.9Q673.0 846.5 676.0 850.3M676.0 850.3Q686.5 856.2 693.9 861.1M676.0 850.3Q668.0 866.6 663.9 883.3M663.9 883.3Q676.6 879.2 692.8 875.7M663.9 883.3Q665.7 893.0 669.5 901.7M669.5 901.7Q679.3 900.8 692.4 898.1M669.5 901.7Q666.0 911.7 667.6 918.5M691.2 687.0Q697.5 691.2 708.6 693.8M691.2 687.0Q693.7 695.9 692.4 702.2M692.4 702.2Q701.1 709.3 715.4 712.9M692.4 702.2Q691.3 715.7 693.8 734.8M692.4 702.2L716.4 728.7M693.8 734.8Q707.9 730.7 716.4 728.7M693.8 734.8Q692.1 740.7 686.5 750.4M686.5 750.4Q704.7 750.6 717.6 756.3M686.5 750.4Q689.7 762.5 694.4 770.7M694.4 770.7Q702.7 773.2 714.7 775.7M686.7 788.3Q703.7 791.0 715.7 791.7M686.7 788.3Q687.1 796.2 691.2 807.2M691.2 807.2Q696.7 824.2 696.5 839.2M696.5 839.2Q704.4 836.9 709.8 834.6M696.5 839.2Q695.1 849.4 693.9 861.1M693.9 861.1Q696.7 860.4 705.1 854.0M693.9 861.1Q692.3 866.2 692.8 875.7M692.8 875.7Q692.6 886.9 692.4 898.1M692.4 898.1Q698.8 899.3 708.2 904.2M692.4 898.1L714.3 916.7M708.6 693.8Q720.1 691.2 735.2 689.0M716.4 728.7Q730.2 728.2 740.0 732.0M716.4 728.7Q714.2 739.7 717.6 756.3M717.6 756.3Q724.2 752.8 735.8 754.7M714.7 775.7Q712.9 782.4 715.7 791.7M715.7 791.7Q723.4 794.9 734.6 796.3M715.7 791.7Q713.4 800.0 715.1 808.0M715.1 808.0Q722.8 810.4 729.6 812.6M715.1 808.0Q712.3 818.5 709.8 834.6M709.8 834.6Q717.3 829.7 726.7 830.7M705.1 854.0Q718.5 854.8 731.3 850.4M705.1 854.0Q708.8 867.6 713.9 878.7M713.9 878.7Q724.2 878.0 729.5 882.7M713.9 878.7Q709.9 893.0 708.2 904.2M708.2 904.2Q723.5 899.3 733.7 898.1M708.2 904.2Q713.4 912.1 714.3 916.7M708.2 904.2L739.5 920.0M733.5 707.5Q748.7 707.6 758.3 703.1M733.5 707.5Q739.1 722.7 740.0 732.0M740.0 732.0Q750.4 730.7 755.4 733.6M740.0 732.0Q738.3 741.1 735.8 754.7M735.8 754.7Q742.5 754.5 747.6 757.0M735.8 754.7Q738.4 758.1 739.7 765.3M734.6 796.3Q743.2 792.8 749.4 792.9M729.6 812.6Q741.6 807.2 755.6 807.8M729.6 812.6Q725.2 820.6 726.7 830.7M726.7 830.7Q726.4 841.9 731.3 850.4M731.3 850.4Q744.2 856.0 754.4 857.4M729.5 882.7Q740.2 877.2 752.1 874.0M733.7 898.1Q742.8 900.2 756.2 898.8M739.5 920.0Q743.2 918.2 751.0 922.0M760.9 689.9Q764.6 686.9 772.1 681.2M760.9 689.9Q760.7 699.3 758.3 703.1M760.9 689.9L771.4 702.6M758.3 703.1Q762.1 702.6 771.4 702.6M755.4 733.6Q764.9 732.8 770.2 733.6M755.4 733.6Q752.3 742.5 747.6 757.0M747.6 757.0Q758.5 754.2 773.5 756.6M747.6 757.0Q746.2 764.9 749.2 771.6M749.2 771.6Q761.6 769.7 778.5 765.7M749.4 792.9Q766.1 798.3 781.8 799.2M749.4 792.9Q755.3 799.1 755.6 807.8M755.6 807.8Q762.1 810.8 769.0 819.7M755.6 807.8Q756.5 821.5 760.2 833.9M760.2 833.9Q764.5 832.1 774.0 834.7M760.2 833.9Q758.4 848.6 754.4 857.4M754.4 857.4Q767.7 854.9 781.6 852.4M752.1 874.0Q753.5 886.3 756.2 898.8M756.2 898.8Q753.0 907.9 751.0 922.0M751.0 922.0Q764.2 922.3 781.7 923.4M772.1 681.2Q786.4 681.6 797.5 682.6M772.1 681.2Q771.0 694.2 771.4 702.6M771.4 702.6Q786.9 705.4 797.7 708.4M771.4 702.6Q768.6 720.4 770.2 733.6M770.2 733.6Q782.1 726.9 791.9 723.7M770.2 733.6Q772.5 742.4 773.5 756.6M773.5 756.6Q782.8 752.8 796.4 745.7M773.5 756.6Q773.2 762.0 778.5 765.7M781.8 799.2Q789.2 794.3 795.4 789.7M781.8 799.2Q777.9 807.7 769.0 819.7M769.0 819.7Q785.6 819.0 797.2 812.9M769.0 819.7Q770.4 828.5 774.0 834.7M774.0 834.7Q777.8 841.4 781.6 852.4M775.3 883.1Q786.2 876.2 799.3 873.3M778.1 897.6Q783.9 901.7 790.6 903.5M781.7 923.4Q788.4 920.1 800.0 920.7M797.5 682.6Q798.5 694.7 797.7 708.4M797.7 708.4Q811.5 709.8 819.6 709.9M797.7 708.4Q796.0 716.6 791.9 723.7M791.9 723.7Q796.4 737.6 796.4 745.7M796.4 745.7Q807.7 745.7 820.5 746.7M796.4 745.7Q796.7 759.2 795.2 774.4M795.4 789.7Q797.1 799.8 797.2 812.9M797.2 812.9Q805.6 812.9 810.6 807.9M797.2 812.9Q797.8 821.9 799.9 835.4M797.2 812.9L813.8 834.0M799.9 835.4Q809.2 832.2 813.8 834.0M799.9 835.4Q803.0 847.2 803.0 862.3M803.0 862.3Q810.7 854.6 818.7 850.4M803.0 862.3Q800.7 866.5 799.3 873.3M799.3 873.3Q809.3 874.0 817.6 871.0M799.3 873.3Q793.1 886.1 790.6 903.5M799.3 873.3L811.2 900.5M790.6 903.5Q792.4 911.8 800.0 920.7M800.0 920.7Q806.1 920.3 817.7 920.8M815.0 684.8Q828.5 685.4 836.2 687.7M819.6 709.9Q824.5 710.2 833.9 706.8M819.6 709.9Q819.3 718.5 818.3 731.9M819.6 709.9L841.4 734.7M818.3 731.9Q827.8 736.3 841.4 734.7M818.3 731.9Q821.8 742.0 820.5 746.7M820.5 746.7Q826.1 747.8 832.0 745.7M820.5 746.7Q815.0 762.9 813.5 778.7M813.5 778.7Q829.2 777.4 842.3 773.7M813.5 778.7Q819.9 790.5 822.8 798.3M813.5 778.7L841.8 789.0M822.8 798.3Q829.6 791.6 841.8 789.0M810.6 807.9Q823.5 809.6 836.9 810.6M810.6 807.9Q813.8 819.9 813.8 834.0M813.8 834.0Q816.5 839.8 818.7 850.4M818.7 850.4Q828.0 858.3 840.2 862.8M818.7 850.4Q819.2 860.2 817.6 871.0M817.6 871.0Q826.3 872.9 835.6 877.7M817.6 871.0Q812.0 883.6 811.2 900.5M811.2 900.5Q826.8 899.2 841.4 903.9M817.7 920.8Q825.3 921.0 837.0 917.2M836.2 687.7Q836.6 699.2 833.9 706.8M833.9 706.8Q841.2 703.0 853.1 703.2M833.9 706.8Q840.1 723.2 841.4 734.7M841.4 734.7Q849.8 730.7 859.9 729.8M841.4 734.7Q838.1 741.9 832.0 745.7M832.0 745.7Q846.6 746.2 861.6 748.2M832.0 745.7Q838.3 761.0 842.3 773.7M842.3 773.7Q850.5 767.2 862.9 766.1M842.3 773.7Q841.2 778.6 841.8 789.0M842.3 773.7L855.0 795.3M841.8 789.0Q851.0 794.2 855.0 795.3M841.8 789.0Q838.3 799.0 836.9 810.6M836.9 810.6Q845.6 813.0 853.1 811.3M836.9 810.6Q837.7 819.5 842.3 833.2M836.9 810.6L862.1 837.7M842.3 833.2Q842.6 849.8 840.2 862.8M842.3 833.2L856.0 851.0M840.2 862.8Q846.9 858.5 856.0 851.0M835.6 877.7Q845.4 878.8 857.0 880.2M853.4 693.3Q856.2 696.4 853.1 703.2M853.1 703.2Q868.3 705.3 885.8 708.1M859.9 729.8Q874.5 730.7 884.2 727.3M859.9 729.8Q858.1 737.7 861.6 748.2M861.6 748.2Q872.2 749.5 877.4 749.6M861.6 748.2L886.1 777.5M862.9 766.1Q875.9 770.8 886.1 777.5M862.9 766.1Q856.3 778.0 855.0 795.3M855.0 795.3Q865.1 793.6 876.5 791.1M855.0 795.3Q851.2 804.3 853.1 811.3M853.1 811.3Q864.9 810.3 878.1 812.1M853.1 811.3Q856.4 823.3 862.1 837.7M853.1 811.3L878.5 833.4M862.1 837.7Q870.2 832.7 878.5 833.4M856.0 851.0Q866.0 851.1 875.7 856.9M856.0 851.0Q858.2 865.9 857.0 880.2M857.0 880.2Q872.1 878.9 884.2 877.6M861.9 920.0Q868.9 921.8 875.5 922.6M885.9 694.2Q898.0 691.7 906.3 684.9M885.9 694.2Q887.3 701.8 885.8 708.1M885.8 708.1Q884.9 717.0 884.2 727.3M884.2 727.3Q893.3 727.0 901.6 730.9M877.4 749.6Q884.1 760.6 886.1 777.5M876.5 791.1Q886.6 795.3 901.7 797.0M876.5 791.1L895.2 808.1M878.1 812.1Q875.5 822.6 878.5 833.4M878.5 833.4Q893.7 839.6 904.3 840.6M878.5 833.4Q876.8 843.8 875.7 856.9M875.7 856.9Q884.5 856.8 895.2 857.9M875.7 856.9Q879.6 867.8 884.2 877.6M884.7 898.9Q892.4 896.4 903.1 894.4M884.7 898.9Q880.7 909.8 875.5 922.6M875.5 922.6Q883.4 920.2 897.1 922.7M906.3 684.9Q915.7 690.4 922.3 691.7M906.3 684.9Q898.7 695.5 894.3 709.2M894.3 709.2Q895.6 722.9 901.6 730.9M901.6 730.9Q914.9 733.2 928.6 732.4M907.5 753.1Q914.9 753.3 921.9 751.5M907.5 753.1Q907.2 757.4 905.3 765.9M905.3 765.9Q913.5 773.2 925.1 774.9M895.2 808.1Q908.3 813.6 926.6 816.3M904.3 840.6Q913.0 841.3 926.9 839.3M904.3 840.6Q902.1 852.2 895.2 857.9M895.2 857.9Q911.9 860.8 926.7 861.4M895.2 857.9Q896.4 866.6 896.0 880.4M903.1 894.4Q912.4 898.8 922.3 900.9M903.1 894.4Q897.7 905.6 897.1 922.7M897.1 922.7Q910.0 918.6 926.2 917.9M922.3 691.7Q933.3 689.9 941.9 683.0M922.3 691.7Q918.5 701.4 920.5 706.7M920.5 706.7Q923.7 718.6 928.6 732.4M920.5 706.7L941.3 725.3M928.6 732.4Q932.2 730.0 941.3 725.3M921.9 751.5Q932.2 753.5 938.9 749.9M925.1 774.9Q929.7 777.4 940.1 778.6M925.1 774.9Q928.6 784.0 927.8 791.7M927.8 791.7Q934.3 791.8 936.8 790.3M926.9 839.3Q939.3 834.3 946.9 830.5M926.9 839.3Q925.8 849.5 926.7 861.4M926.7 861.4Q930.4 859.6 936.9 855.4M926.7 861.4Q926.4 869.6 928.4 879.0M926.7 861.4L944.2 882.7M928.4 879.0Q935.8 882.7 944.2 882.7M928.4 879.0Q928.2 888.1 922.3 900.9M922.3 900.9Q926.5 895.5 936.5 892.5M926.2 917.9Q932.6 915.1 938.6 915.0M941.9 683.0Q948.5 686.1 960.3 691.0M941.9 683.0Q946.0 701.1 946.4 715.9M946.4 715.9Q958.1 712.0 965.3 705.1M946.4 715.9Q941.6 722.1 941.3 725.3M941.3 725.3L959.4 754.6M938.9 749.9Q949.9 752.9 959.4 754.6M938.9 749.9Q942.3 764.3 940.1 778.6M940.1 778.6Q935.9 785.5 936.8 790.3M936.8 790.3Q951.4 792.2 968.4 792.7M936.8 790.3Q938.2 805.6 937.6 816.1M946.9 830.5Q942.4 840.4 936.9 855.4M946.9 830.5L964.7 862.4M936.9 855.4Q941.8 869.2 944.2 882.7M936.9 855.4L963.8 873.1M944.2 882.7Q942.7 889.5 936.5 892.5M936.5 892.5Q944.3 899.6 957.7 904.3M936.5 892.5Q937.7 906.3 938.6 915.0M938.6 915.0Q954.7 917.4 968.2 917.4M960.3 691.0Q974.5 690.1 985.4 688.2M960.3 691.0Q963.0 696.7 965.3 705.1M965.3 705.1Q964.1 715.2 959.6 726.9M959.6 726.9Q976.2 728.1 987.2 726.3M959.4 754.6Q966.8 749.9 978.2 750.6M959.4 754.6Q961.1 766.4 961.4 772.7M961.4 772.7Q970.6 772.3 983.2 776.2M961.4 772.7Q964.9 782.2 968.4 792.7M968.4 792.7Q966.5 806.3 960.6 819.4M968.4 792.7L980.2 809.2M960.6 819.4Q971.1 816.6 980.2 809.2M960.6 819.4Q966.4 824.5 969.8 832.8M964.7 862.4Q980.2 861.8 990.2 856.2M963.8 873.1Q974.5 881.0 986.9 883.9M963.8 873.1Q959.5 885.9 957.7 904.3M957.7 904.3Q967.2 900.5 981.7 898.5M957.7 904.3Q962.6 911.5 968.2 917.4M968.2 917.4Q974.4 917.4 980.1 922.8M985.4 688.2Q994.1 688.9 999.0 692.5M981.8 715.9Q998.1 711.7 1010.8 713.5M981.8 715.9Q984.7 722.4 987.2 726.3M987.2 726.3Q992.0 724.7 1000.2 726.8M987.2 726.3Q981.4 738.8 978.2 750.6M987.2 726.3L1009.0 745.4M978.2 750.6Q993.1 745.3 1009.0 745.4M978.2 750.6Q983.3 765.5 983.2 776.2M983.2 776.2Q997.4 771.9 1005.7 771.6M988.0 794.5Q997.2 792.1 1012.4 794.2M988.0 794.5Q985.9 802.5 980.2 809.2M980.2 809.2Q996.5 808.0 1011.0 811.3M980.2 809.2Q981.9 821.3 982.5 831.6M982.5 831.6Q985.2 841.8 990.2 856.2M990.2 856.2Q1003.2 854.3 1011.8 850.3M981.7 898.5Q980.0 908.0 980.1 922.8M980.1 922.8Q993.6 922.0 1001.2 923.6M999.0 692.5Q1013.9 691.7 1024.4 685.4M1010.8 713.5Q1006.2 717.5 1000.2 726.8M1000.2 726.8Q1002.5 736.5 1009.0 745.4M1000.2 726.8L1025.0 753.6M1009.0 745.4Q1014.5 749.0 1025.0 753.6M1005.7 771.6Q1008.7 780.2 1012.4 794.2M1012.4 794.2Q1018.9 794.7 1026.5 799.5M1012.4 794.2Q1009.1 800.5 1011.0 811.3M1012.4 794.2L1031.6 816.2M1011.0 811.3Q1019.1 815.7 1031.6 816.2M1011.0 811.3Q1012.7 822.9 1010.1 833.8M1011.0 811.3L1020.2 833.3M1010.1 833.8Q1017.1 834.1 1020.2 833.3M1010.1 833.8Q1011.7 839.3 1011.8 850.3M1011.8 850.3Q1023.0 854.0 1029.9 852.3M1011.8 850.3Q1009.8 858.9 1010.6 872.9M1010.6 872.9Q1021.8 872.9 1027.9 876.4M1010.6 872.9Q1005.7 882.8 1006.6 898.4M1006.6 898.4Q1001.0 911.5 1001.2 923.6M1001.2 923.6Q1018.7 920.8 1031.2 914.9M1024.4 685.4Q1037.6 683.9 1049.6 685.1M1021.1 706.3Q1026.2 718.7 1026.5 733.0M1026.5 733.0Q1034.4 731.2 1045.2 727.7M1026.5 733.0Q1023.5 740.6 1025.0 753.6M1025.0 753.6Q1033.4 755.1 1046.5 753.3M1025.0 753.6Q1024.8 760.7 1021.5 770.5M1026.5 799.5Q1031.7 808.6 1031.6 816.2M1031.6 816.2Q1042.2 815.9 1054.2 814.9M1031.6 816.2Q1026.7 826.9 1020.2 833.3M1020.2 833.3Q1032.8 832.2 1051.1 832.6M1020.2 833.3Q1027.1 843.1 1029.9 852.3M1029.9 852.3Q1041.6 852.4 1052.6 850.3M1029.9 852.3Q1029.2 862.8 1027.9 876.4M1029.9 852.3L1043.0 871.3M1027.9 876.4Q1037.8 876.5 1043.0 871.3M1027.9 876.4Q1024.5 890.8 1020.1 904.9M1020.1 904.9Q1037.1 900.4 1050.5 900.9M1020.1 904.9Q1024.3 908.1 1031.2 914.9M1031.2 914.9Q1037.5 914.3 1043.5 917.6M1049.6 685.1Q1062.3 687.9 1073.7 689.3M1049.6 685.1Q1048.6 696.1 1046.3 709.6M1046.3 709.6Q1053.1 708.8 1063.3 705.2M1046.3 709.6Q1048.6 719.3 1045.2 727.7M1045.2 727.7Q1045.1 740.1 1046.5 753.3M1046.5 753.3Q1055.2 751.9 1067.7 745.0M1044.6 767.8Q1047.2 776.7 1051.2 790.6M1044.6 767.8L1069.2 795.1M1051.2 790.6Q1061.5 793.5 1069.2 795.1M1054.2 814.9Q1053.5 824.1 1051.1 832.6M1051.1 832.6Q1056.8 833.7 1067.4 832.6M1051.1 832.6Q1051.4 844.3 1052.6 850.3M1052.6 850.3Q1060.2 848.9 1067.8 849.2M1052.6 850.3Q1050.1 858.9 1043.0 871.3M1043.0 871.3Q1055.4 878.5 1067.6 879.8M1043.0 871.3Q1048.9 883.2 1050.5 900.9M1050.5 900.9Q1047.8 909.0 1043.5 917.6M1050.5 900.9L1071.2 920.5M1043.5 917.6Q1057.0 921.3 1071.2 920.5M1073.7 689.3Q1078.7 687.3 1083.3 685.6M1073.7 689.3Q1070.2 697.8 1063.3 705.2M1063.3 705.2Q1062.4 715.2 1064.2 724.7M1064.2 724.7Q1075.2 726.4 1084.5 728.3M1064.2 724.7Q1063.9 733.3 1067.7 745.0M1067.7 745.0Q1079.5 748.7 1090.1 755.0M1067.7 745.0Q1071.1 759.8 1074.9 771.0M1074.9 771.0Q1087.6 772.5 1094.6 773.6M1074.9 771.0Q1070.6 784.3 1069.2 795.1M1069.2 795.1Q1075.7 798.1 1085.2 796.7M1069.2 795.1Q1073.2 806.4 1072.7 818.5M1072.7 818.5Q1084.3 816.9 1095.6 814.7M1072.7 818.5Q1072.8 827.0 1067.4 832.6M1072.7 818.5L1087.9 835.0M1067.4 832.6Q1064.9 842.8 1067.8 849.2M1067.8 849.2Q1074.4 854.1 1085.0 859.0M1067.8 849.2L1096.8 877.2M1067.6 879.8Q1079.3 875.8 1096.8 877.2M1067.6 879.8Q1071.6 893.7 1075.7 902.1M1075.7 902.1Q1076.0 912.3 1071.2 920.5M1071.2 920.5Q1078.4 920.5 1085.8 925.2M1083.3 685.6Q1083.7 698.3 1087.8 711.1M1087.8 711.1Q1097.0 705.8 1105.2 705.4M1087.8 711.1Q1084.3 719.7 1084.5 728.3M1084.5 728.3Q1099.4 731.0 1112.1 732.8M1090.1 755.0Q1102.3 755.8 1108.6 757.0M1090.1 755.0Q1090.4 761.8 1094.6 773.6M1094.6 773.6Q1099.0 770.0 1109.1 771.5M1094.6 773.6Q1088.1 783.7 1085.2 796.7M1085.2 796.7Q1093.4 799.3 1105.7 799.6M1095.6 814.7Q1101.0 818.4 1105.9 819.7M1087.9 835.0Q1101.5 833.1 1111.6 835.9M1087.9 835.0Q1086.5 845.1 1085.0 859.0M1085.0 859.0Q1101.1 855.4 1111.8 852.7M1096.8 877.2Q1108.4 880.5 1116.7 883.9M1096.8 877.2Q1092.7 890.9 1093.0 902.7M1093.0 902.7Q1103.1 901.2 1115.4 899.4M1093.0 902.7Q1088.7 915.6 1085.8 925.2M1093.0 902.7L1105.7 923.5M1085.8 925.2Q1095.8 922.3 1105.7 923.5M1112.8 683.8Q1108.4 693.1 1105.2 705.4M1105.2 705.4Q1117.9 707.3 1128.4 710.0M1112.1 732.8Q1124.3 727.7 1136.6 725.6M1112.1 732.8Q1113.0 744.8 1108.6 757.0M1108.6 757.0Q1121.4 748.7 1132.7 745.1M1108.6 757.0Q1106.6 761.4 1109.1 771.5M1109.1 771.5Q1104.5 787.0 1105.7 799.6M1105.7 799.6Q1123.9 796.8 1138.8 799.2M1105.7 799.6Q1107.5 811.2 1105.9 819.7M1105.9 819.7Q1121.9 816.1 1134.2 811.3M1105.9 819.7Q1106.9 825.2 1111.6 835.9M1111.6 835.9Q1123.6 836.9 1134.4 838.3M1111.6 835.9Q1112.1 845.1 1111.8 852.7M1111.8 852.7Q1116.6 871.2 1116.7 883.9M1116.7 883.9Q1116.4 890.1 1115.4 899.4M1116.7 883.9L1127.8 897.6M1115.4 899.4Q1120.1 899.2 1127.8 897.6M1115.4 899.4Q1111.2 911.1 1105.7 923.5M1105.7 923.5Q1117.5 922.8 1127.0 917.4M1129.0 693.6Q1140.4 688.2 1154.0 683.4M1129.0 693.6Q1129.5 703.3 1128.4 710.0M1136.6 725.6Q1145.0 727.5 1154.0 727.6M1136.6 725.6Q1136.6 734.8 1132.7 745.1M1132.7 745.1Q1143.0 741.9 1155.0 744.5M1132.7 745.1Q1128.9 759.0 1125.4 767.5M1132.7 745.1L1155.4 767.0M1138.8 799.2Q1146.2 799.1 1159.4 794.4M1138.8 799.2Q1135.3 807.9 1134.2 811.3M1134.2 811.3L1154.7 837.7M1134.4 838.3Q1142.1 837.3 1154.7 837.7M1134.4 838.3Q1134.3 846.5 1130.3 857.3M1130.3 857.3Q1142.0 855.8 1156.6 859.5M1130.3 857.3Q1133.8 865.0 1136.3 870.2M1127.8 897.6Q1126.2 907.8 1127.0 917.4M1154.0 683.4Q1161.7 691.2 1174.9 693.7M1154.0 683.4Q1151.9 696.1 1153.3 705.7M1153.3 705.7Q1152.1 716.5 1154.0 727.6M1154.0 727.6Q1164.0 729.5 1173.1 735.7M1154.0 727.6Q1152.2 733.3 1155.0 744.5M1155.0 744.5Q1157.6 756.4 1155.4 767.0M1155.4 767.0Q1168.7 771.4 1177.2 777.6M1159.4 794.4Q1154.1 805.0 1152.6 812.8M1159.4 794.4L1177.5 811.3M1152.6 812.8Q1164.3 811.0 1177.5 811.3M1152.6 812.8Q1151.6 824.6 1154.7 837.7M1152.6 812.8L1175.3 829.0M1154.7 837.7Q1156.9 848.2 1156.6 859.5M1156.6 859.5Q1156.8 874.2 1152.8 883.9M1152.8 883.9Q1164.0 877.2 1174.0 875.6M1152.8 883.9Q1154.2 894.2 1157.7 903.0M1152.8 883.9L1167.7 900.7M1157.7 903.0Q1154.3 910.4 1151.7 918.1M1151.7 918.1Q1160.9 917.7 1174.4 915.3M1174.9 693.7Q1184.3 689.6 1192.3 686.5M1174.4 709.4Q1181.7 708.9 1191.3 703.0M1174.4 709.4Q1172.2 722.7 1173.1 735.7M1173.1 735.7Q1171.2 741.6 1171.5 744.8M1171.5 744.8Q1185.5 748.0 1197.3 756.1M1171.5 744.8Q1172.4 760.0 1177.2 777.6M1177.2 777.6Q1183.2 774.1 1193.9 776.3M1177.2 777.6Q1178.8 783.9 1177.2 794.4M1177.2 777.6L1191.1 796.5M1177.2 794.4Q1175.2 802.8 1177.5 811.3M1177.5 811.3Q1176.6 819.4 1175.3 829.0M1177.5 811.3L1189.4 839.1M1175.3 829.0Q1174.0 839.8 1168.7 855.3M1168.7 855.3Q1177.2 853.3 1189.7 856.5M1174.0 875.6Q1172.3 888.7 1167.7 900.7M1167.7 900.7Q1180.4 897.6 1191.4 895.2M1167.7 900.7Q1168.3 906.8 1174.4 915.3M1167.7 900.7L1192.5 912.9M1192.3 686.5Q1205.6 691.2 1221.5 692.4M1192.3 686.5Q1190.5 694.1 1191.3 703.0M1192.3 686.5L1214.6 707.0M1191.3 703.0Q1200.2 707.7 1214.6 707.0M1200.8 736.5Q1200.1 744.0 1197.3 756.1M1197.3 756.1Q1202.8 757.3 1209.4 756.6M1197.3 756.1Q1196.5 764.5 1193.9 776.3M1193.9 776.3Q1203.8 771.5 1213.3 772.0M1193.9 776.3Q1193.8 784.4 1191.1 796.5M1191.1 796.5Q1194.9 809.7 1195.9 819.6M1195.9 819.6Q1205.2 816.3 1215.6 809.9M1195.9 819.6Q1192.5 828.0 1189.4 839.1M1189.7 856.5Q1203.1 855.1 1221.6 851.7M1201.3 870.0Q1211.1 872.0 1220.7 875.0M1201.3 870.0Q1194.5 884.4 1191.4 895.2M1191.4 895.2Q1204.2 896.3 1215.6 893.4M1191.4 895.2Q1190.1 906.7 1192.5 912.9M1192.5 912.9Q1206.7 917.4 1221.3 925.9M1221.5 692.4Q1225.3 689.1 1232.8 689.9M1221.5 692.4Q1218.9 700.7 1214.6 707.0M1214.6 707.0Q1215.6 717.9 1217.2 723.6M1217.2 723.6Q1225.4 725.5 1230.7 724.5M1217.2 723.6Q1210.7 741.5 1209.4 756.6M1209.4 756.6Q1222.5 753.9 1240.2 748.4M1209.4 756.6Q1213.2 765.0 1213.3 772.0M1213.3 772.0Q1227.1 776.0 1242.6 777.2M1213.3 772.0Q1214.9 785.3 1222.1 799.7M1222.1 799.7Q1229.4 791.3 1240.0 787.9M1215.6 809.9Q1225.9 816.5 1239.7 820.1M1215.6 809.9Q1212.4 824.3 1213.1 840.9M1213.1 840.9Q1222.6 836.4 1236.2 829.1M1221.6 851.7Q1229.5 855.3 1233.1 853.3M1220.7 875.0Q1231.8 874.8 1239.9 872.8M1215.6 893.4Q1226.9 893.6 1232.5 894.3M1215.6 893.4Q1219.3 911.4 1221.3 925.9M1232.8 689.9Q1246.9 692.3 1256.2 690.3M1232.8 689.9Q1229.9 702.7 1232.7 714.3M1232.7 714.3Q1233.0 721.0 1230.7 724.5M1232.7 714.3L1254.2 727.2M1230.7 724.5Q1242.1 724.1 1254.2 727.2M1230.7 724.5Q1234.6 737.8 1240.2 748.4M1240.2 748.4Q1249.4 752.6 1264.0 753.3M1242.6 777.2Q1240.0 782.3 1240.0 787.9M1240.0 787.9Q1237.0 803.7 1239.7 820.1M1240.0 787.9L1257.2 814.4M1239.7 820.1Q1249.1 817.9 1257.2 814.4M1239.7 820.1Q1235.4 825.0 1236.2 829.1M1236.2 829.1Q1245.7 826.8 1258.4 828.6M1236.2 829.1Q1233.9 841.7 1233.1 853.3M1233.1 853.3Q1246.9 851.7 1259.4 853.0M1239.9 872.8Q1248.6 878.8 1254.5 881.2M1239.9 872.8Q1238.7 886.4 1232.5 894.3M1232.5 894.3Q1241.0 895.4 1252.2 895.0M1232.5 894.3Q1234.0 906.2 1239.3 923.1M1239.3 923.1Q1253.0 921.1 1261.6 915.4M1256.2 690.3Q1265.1 688.4 1275.9 688.7M1256.2 690.3Q1257.5 702.5 1263.4 710.3M1263.4 710.3Q1271.9 711.7 1274.6 714.6M1254.2 727.2Q1258.9 741.2 1264.0 753.3M1254.2 727.2L1278.5 754.5M1264.0 753.3Q1260.5 761.1 1254.9 774.0M1264.0 753.3L1277.4 778.0M1254.9 774.0Q1267.9 778.6 1277.4 778.0M1252.3 799.8Q1267.3 794.2 1279.0 788.5M1257.2 814.4Q1266.5 813.1 1279.8 816.0M1257.2 814.4Q1257.4 820.2 1258.4 828.6M1258.4 828.6Q1269.3 830.6 1277.0 837.2M1258.4 828.6Q1261.5 839.1 1259.4 853.0M1259.4 853.0Q1270.6 853.7 1283.0 856.2M1259.4 853.0Q1258.1 866.3 1254.5 881.2M1254.5 881.2Q1252.9 887.2 1252.2 895.0M1252.2 895.0Q1265.1 896.4 1281.6 898.3M1252.2 895.0Q1257.0 902.6 1261.6 915.4M1252.2 895.0L1285.3 914.4M1261.6 915.4Q1273.7 913.2 1285.3 914.4M1275.9 688.7Q1288.8 687.2 1303.9 683.3M1275.9 688.7Q1277.3 701.3 1274.6 714.6M1275.9 688.7L1301.5 705.3M1274.6 714.6Q1288.8 707.5 1301.5 705.3M1285.8 723.5Q1289.9 728.4 1299.2 733.8M1278.5 754.5Q1291.5 755.6 1304.0 755.1M1278.5 754.5Q1276.2 766.9 1277.4 778.0M1277.4 778.0Q1288.0 777.1 1296.3 771.8M1279.0 788.5Q1286.4 791.9 1296.1 794.1M1279.0 788.5Q1280.1 802.6 1279.8 816.0M1279.8 816.0Q1287.4 809.1 1300.0 807.5M1279.8 816.0Q1275.9 828.9 1277.0 837.2M1277.0 837.2Q1292.0 838.4 1301.4 838.0M1277.0 837.2Q1279.3 845.9 1283.0 856.2M1283.0 856.2Q1290.4 855.8 1301.0 861.2M1283.0 856.2Q1280.9 867.4 1279.1 881.8M1279.1 881.8Q1282.1 889.2 1281.6 898.3M1281.6 898.3Q1284.9 905.5 1285.3 914.4M1281.6 898.3L1299.1 918.2M1285.3 914.4Q1289.9 917.6 1299.1 918.2M1303.9 683.3Q1310.8 689.6 1317.7 692.2M1303.9 683.3Q1305.2 695.7 1301.5 705.3M1301.5 705.3Q1302.9 720.1 1299.2 733.8M1299.2 733.8Q1310.8 734.9 1322.0 730.6M1299.2 733.8Q1299.7 744.5 1304.0 755.1M1304.0 755.1Q1315.4 748.2 1325.1 747.3M1304.0 755.1Q1300.9 762.8 1296.3 771.8M1296.3 771.8Q1303.8 771.7 1316.0 769.4M1296.3 771.8L1314.6 790.4M1296.1 794.1Q1306.0 792.9 1314.6 790.4M1296.1 794.1Q1298.1 803.7 1300.0 807.5M1300.0 807.5Q1313.2 811.9 1322.7 814.4M1301.4 838.0Q1307.8 835.5 1317.7 836.2M1301.0 861.2Q1308.0 863.2 1315.2 860.5M1295.5 872.1L1316.2 900.7M1293.2 897.9Q1296.9 909.6 1299.1 918.2M1299.1 918.2Q1314.8 922.3 1325.6 923.0M1317.7 692.2Q1317.1 704.9 1315.0 714.7M1315.0 714.7Q1316.1 720.7 1322.0 730.6M1322.0 730.6Q1334.2 725.0 1348.6 723.6M1322.0 730.6Q1324.6 740.9 1325.1 747.3M1322.0 730.6L1341.9 754.7M1325.1 747.3Q1336.3 750.2 1341.9 754.7M1325.1 747.3Q1322.4 755.5 1316.0 769.4M1314.6 790.4Q1330.6 790.8 1341.4 796.4M1314.6 790.4Q1319.5 805.1 1322.7 814.4M1314.6 790.4L1335.5 810.4M1322.7 814.4Q1328.9 814.1 1335.5 810.4M1322.7 814.4Q1321.2 822.6 1317.7 836.2M1317.7 836.2Q1333.9 830.7 1347.5 830.0M1317.7 836.2Q1315.4 847.9 1315.2 860.5M1315.2 860.5Q1325.3 857.7 1340.5 853.2M1316.4 873.6Q1317.0 886.3 1316.2 900.7M1316.2 900.7Q1326.5 905.3 1335.5 904.9M1316.2 900.7L1345.7 922.3M1325.6 923.0Q1333.2 923.0 1345.7 922.3M1335.9 686.7Q1348.7 684.8 1359.2 684.5M1335.9 686.7Q1340.3 693.6 1340.1 705.0M1340.1 705.0Q1349.3 706.8 1363.7 705.4M1340.1 705.0Q1342.0 715.0 1348.6 723.6M1340.1 705.0L1362.5 736.1M1348.6 723.6Q1353.1 728.5 1362.5 736.1M1348.6 723.6Q1345.5 740.0 1341.9 754.7M1341.9 754.7Q1350.6 749.9 1361.1 748.7M1348.8 767.0Q1357.4 769.8 1369.7 773.6M1341.4 796.4Q1339.0 801.9 1335.5 810.4M1335.5 810.4Q1341.2 818.7 1347.5 830.0M1347.5 830.0Q1352.3 834.3 1360.8 837.7M1347.5 830.0Q1342.4 840.2 1340.5 853.2M1340.5 853.2Q1343.0 859.9 1340.9 871.1M1340.9 871.1Q1354.7 875.8 1368.4 876.5M1335.5 904.9Q1345.7 902.9 1361.5 902.8M1335.5 904.9Q1337.6 912.7 1345.7 922.3M1335.5 904.9L1361.3 922.9M1359.2 684.5Q1368.5 683.3 1380.0 685.9M1359.2 684.5L1379.6 709.7M1363.7 705.4Q1370.0 706.0 1379.6 709.7M1362.5 736.1Q1364.6 745.2 1361.1 748.7M1361.1 748.7Q1367.8 749.9 1380.0 750.5M1361.1 748.7Q1367.6 764.1 1369.7 773.6M1369.7 773.6Q1378.4 773.1 1381.3 771.3M1369.7 773.6Q1361.4 785.3 1356.6 791.6M1356.6 791.6Q1358.0 802.4 1365.1 807.8M1365.1 807.8Q1362.9 822.9 1360.8 837.7M1360.8 837.7Q1366.6 845.5 1368.1 857.3M1368.1 857.3Q1374.7 855.1 1386.7 854.1M1368.1 857.3Q1371.1 868.8 1368.4 876.5M1368.4 876.5Q1373.2 875.0 1380.8 870.3M1368.4 876.5Q1362.5 889.2 1361.5 902.8M1361.5 902.8Q1369.8 899.1 1379.5 894.7M1380.0 685.9Q1395.5 682.8 1408.0 684.8M1379.6 709.7Q1393.2 709.2 1403.1 704.1M1379.6 709.7Q1381.7 720.5 1379.3 725.9M1380.0 750.5Q1393.2 754.2 1408.7 754.1M1381.3 771.3Q1396.4 769.5 1410.7 765.3M1381.3 771.3Q1383.2 785.7 1390.9 795.5M1390.9 795.5Q1395.7 793.1 1402.5 791.4M1390.9 795.5L1399.2 819.4M1389.1 809.9Q1385.5 822.2 1382.4 829.0M1382.4 829.0Q1384.0 840.3 1386.7 854.1M1379.5 894.7Q1380.5 909.7 1382.5 924.9M1379.5 894.7L1406.3 912.4M1408.0 684.8Q1414.2 683.3 1423.4 686.9M1408.0 684.8Q1404.6 697.1 1403.1 704.1M1403.1 704.1Q1412.8 701.3 1426.6 703.9M1403.1 704.1Q1407.8 716.1 1411.1 728.0M1411.1 728.0Q1422.4 724.7 1428.9 726.6M1411.1 728.0Q1411.7 740.0 1408.7 754.1M1408.7 754.1Q1417.7 755.3 1429.2 753.3M1408.7 754.1Q1410.0 761.0 1410.7 765.3M1410.7 765.3Q1407.3 775.9 1402.5 791.4M1402.5 791.4Q1413.4 793.5 1422.9 796.0M1402.5 791.4Q1401.1 807.6 1399.2 819.4M1399.2 819.4Q1412.6 814.3 1424.7 812.4M1399.2 819.4Q1398.3 829.8 1402.6 838.8M1402.6 838.8Q1406.2 846.4 1405.3 849.8M1405.3 849.8Q1417.0 854.5 1423.1 853.8M1405.3 849.8Q1405.2 860.6 1403.5 873.3M1405.3 849.8L1422.0 870.6M1403.5 873.3Q1411.2 872.7 1422.0 870.6M1403.5 873.3Q1401.8 885.7 1398.6 893.1M1403.5 873.3L1419.3 899.8M1398.6 893.1Q1406.6 895.7 1419.3 899.8M1423.4 686.9Q1437.6 687.8 1453.7 685.2M1423.4 686.9Q1426.4 696.0 1426.6 703.9M1426.6 703.9Q1437.2 712.3 1449.4 714.9M1426.6 703.9Q1426.4 718.3 1428.9 726.6M1428.9 726.6Q1435.9 730.4 1443.0 732.6M1428.9 726.6Q1427.7 738.7 1429.2 753.3M1429.2 753.3Q1436.8 753.1 1449.3 757.4M1429.2 753.3Q1428.0 762.3 1421.1 767.9M1421.1 767.9Q1422.1 779.0 1422.9 796.0M1422.9 796.0Q1433.6 789.3 1448.9 787.3M1422.9 796.0Q1423.7 802.5 1424.7 812.4M1422.9 796.0L1446.0 812.5M1424.7 812.4Q1438.0 815.4 1446.0 812.5M1424.7 812.4L1440.8 833.4M1431.1 831.2Q1438.3 829.4 1440.8 833.4M1431.1 831.2Q1428.0 845.3 1423.1 853.8M1423.1 853.8Q1424.0 864.8 1422.0 870.6M1419.3 899.8Q1432.0 899.2 1445.6 897.7M1426.9 923.3Q1434.3 924.5 1442.3 921.3M1453.7 685.2Q1458.9 686.3 1464.4 682.3M1449.4 714.9Q1459.8 708.4 1465.8 707.9M1443.0 732.6Q1445.1 743.8 1449.3 757.4M1449.3 757.4Q1461.9 755.5 1470.8 751.7M1449.3 757.4L1470.8 765.3M1452.2 768.3Q1460.9 768.6 1470.8 765.3M1448.9 787.3Q1448.9 801.8 1446.0 812.5M1446.0 812.5Q1456.1 814.6 1461.9 812.7M1446.0 812.5Q1440.6 824.2 1440.8 833.4M1440.8 833.4Q1453.4 835.7 1461.8 834.9M1440.8 833.4Q1440.6 845.6 1444.6 856.0M1444.6 856.0Q1459.3 854.1 1469.2 855.6M1443.9 872.2Q1455.9 873.2 1465.6 873.5M1445.6 897.7Q1451.9 898.8 1461.3 895.9M1445.6 897.7Q1446.5 906.7 1442.3 921.3M1442.3 921.3Q1459.3 923.3 1473.5 919.9M1464.4 682.3Q1475.6 685.8 1485.7 690.4M1464.4 682.3Q1467.1 695.1 1465.8 707.9M1465.8 707.9Q1473.2 706.6 1484.6 708.6M1465.8 707.9L1490.6 736.4M1463.1 731.2Q1476.1 733.1 1490.6 736.4M1470.8 751.7Q1480.4 751.0 1487.1 752.1M1470.8 765.3Q1482.8 770.1 1495.2 775.8M1470.8 765.3Q1469.0 779.4 1466.5 791.1M1466.5 791.1Q1480.6 794.0 1490.8 794.7M1466.5 791.1Q1462.0 800.5 1461.9 812.7M1461.9 812.7Q1477.1 815.5 1487.8 812.8M1461.9 812.7Q1461.0 825.3 1461.8 834.9M1461.8 834.9Q1466.3 846.4 1469.2 855.6M1469.2 855.6Q1482.2 854.5 1494.3 854.3M1469.2 855.6Q1469.0 862.8 1465.6 873.5M1465.6 873.5Q1482.9 872.0 1494.7 870.5M1465.6 873.5Q1466.2 886.4 1461.3 895.9M1461.3 895.9Q1470.4 896.2 1483.9 898.1M1461.3 895.9Q1466.8 907.6 1473.5 919.9M1485.7 690.4Q1499.2 684.8 1516.7 683.1M1485.7 690.4Q1485.2 698.9 1484.6 708.6M1484.6 708.6Q1496.2 707.4 1505.7 705.2M1484.6 708.6Q1487.6 721.0 1490.6 736.4M1490.6 736.4Q1503.1 734.1 1512.5 726.3M1487.1 752.1Q1492.7 753.2 1503.0 751.6M1487.1 752.1Q1490.4 764.4 1495.2 775.8M1495.2 775.8Q1495.8 782.4 1490.8 794.7M1490.8 794.7Q1500.8 795.8 1509.9 795.1M1490.8 794.7Q1491.9 803.4 1487.8 812.8M1487.8 812.8Q1485.4 828.7 1485.9 839.6M1485.9 839.6Q1498.6 842.1 1510.9 839.6M1494.3 854.3Q1505.5 852.8 1516.6 853.7M1494.3 854.3Q1494.2 864.4 1494.7 870.5M1483.9 898.1Q1495.2 902.0 1507.4 901.0M1483.9 898.1L1512.7 921.6M1516.7 683.1Q1526.2 689.3 1537.5 692.5M1516.7 683.1Q1512.3 694.2 1505.7 705.2M1512.5 726.3Q1523.0 729.6 1530.9 730.9M1512.5 726.3Q1507.8 737.6 1503.0 751.6M1503.0 751.6Q1514.9 748.3 1529.2 748.0M1503.0 751.6Q1506.2 762.2 1508.5 768.4M1508.5 768.4Q1523.1 769.8 1534.5 772.5M1508.5 768.4Q1510.1 780.0 1509.9 795.1M1509.9 795.1L1528.5 809.5M1510.7 815.7Q1508.5 828.4 1510.9 839.6M1510.9 839.6Q1521.7 834.9 1531.2 829.8M1510.9 839.6Q1513.8 847.4 1516.6 853.7M1516.6 853.7Q1514.2 867.9 1507.9 882.4M1507.9 882.4Q1514.1 880.9 1525.4 879.9M1507.9 882.4Q1506.0 894.5 1507.4 901.0M1507.4 901.0Q1516.3 902.0 1525.6 897.3M1507.4 901.0Q1508.6 912.1 1512.7 921.6M1512.7 921.6Q1521.6 922.7 1534.8 918.7M1537.5 692.5Q1542.9 691.3 1547.3 693.1M1537.5 692.5L1557.2 702.7M1526.2 710.7Q1539.1 706.9 1557.2 702.7M1526.2 710.7Q1531.3 720.4 1530.9 730.9M1530.9 730.9Q1538.1 733.4 1548.6 730.1M1530.9 730.9Q1527.3 738.0 1529.2 748.0M1529.2 748.0Q1542.0 747.6 1556.2 749.5M1529.2 748.0Q1531.6 758.3 1534.5 772.5M1534.5 772.5Q1545.2 771.9 1555.0 768.5M1534.5 772.5Q1529.2 783.6 1527.3 789.5M1534.5 772.5L1555.0 790.6M1527.3 789.5Q1540.7 789.5 1555.0 790.6M1527.3 789.5Q1530.1 798.3 1528.5 809.5M1528.5 809.5Q1536.9 813.1 1549.7 817.6M1528.5 809.5Q1530.1 821.0 1531.2 829.8M1531.2 829.8Q1527.8 840.9 1524.9 850.0M1524.9 850.0Q1527.4 862.3 1525.4 879.9M1525.4 879.9Q1542.2 879.3 1554.9 878.7M1525.6 897.3Q1542.4 899.9 1556.6 902.2M1525.6 897.3Q1532.6 910.1 1534.8 918.7M1534.8 918.7Q1542.4 915.2 1546.8 917.3M1547.3 693.1Q1560.1 688.7 1575.4 684.2M1547.3 693.1Q1552.5 697.5 1557.2 702.7M1557.2 702.7Q1561.5 700.7 1568.6 702.2M1557.2 702.7Q1551.8 716.0 1548.6 730.1M1556.2 749.5Q1568.0 744.7 1579.6 745.9M1556.2 749.5Q1552.8 759.6 1555.0 768.5M1555.0 768.5Q1568.3 768.6 1575.6 770.9M1555.0 768.5Q1552.7 778.0 1555.0 790.6M1555.0 790.6Q1554.6 802.1 1549.7 817.6M1549.7 817.6Q1564.6 821.0 1579.1 820.8M1549.7 817.6Q1555.6 829.4 1556.8 839.6M1556.8 839.6Q1560.0 839.2 1566.7 838.0M1556.8 839.6L1567.7 849.6M1552.9 854.9Q1559.2 850.8 1567.7 849.6M1554.9 878.7Q1563.7 881.8 1570.0 880.2M1554.9 878.7Q1552.9 891.1 1556.6 902.2M1556.6 902.2Q1568.3 896.9 1579.9 892.7M1556.6 902.2Q1554.2 910.3 1546.8 917.3M1546.8 917.3Q1561.0 916.4 1570.6 912.4M1575.4 684.2Q1583.8 684.8 1594.6 687.8M1568.6 702.2Q1580.5 703.8 1592.2 706.3M1568.6 702.2Q1570.1 721.6 1574.2 736.2M1574.2 736.2Q1579.2 741.3 1579.6 745.9M1579.6 745.9Q1587.9 748.1 1591.0 749.5M1579.6 745.9Q1576.8 758.1 1575.6 770.9M1575.6 770.9Q1584.2 770.8 1595.6 775.7M1575.6 770.9Q1572.4 782.2 1574.8 791.6M1575.6 770.9L1600.7 791.5M1574.8 791.6Q1575.6 806.5 1579.1 820.8M1579.1 820.8Q1575.4 826.7 1566.7 838.0M1579.1 820.8L1598.2 830.1M1566.7 838.0Q1565.8 844.6 1567.7 849.6M1567.7 849.6Q1577.2 850.3 1589.5 850.5M1567.7 849.6Q1570.9 863.5 1570.0 880.2M1570.0 880.2Q1587.3 876.8 1600.1 873.5M1579.9 892.7Q1586.3 895.5 1593.8 892.7M1579.9 892.7Q1575.5 904.2 1570.6 912.4M1570.6 912.4Q1582.0 910.9 1591.5 912.3M1594.6 687.8Q1590.5 698.4 1592.2 706.3M1600.7 791.5Q1597.7 805.6 1596.7 814.6M1596.7 814.6Q1599.7 824.1 1598.2 830.1M1598.2 830.1Q1592.1 841.7 1589.5 850.5M1589.5 850.5Q1591.9 862.2 1600.1 873.5M1600.1 873.5Q1599.1 883.3 1593.8 892.7M1593.8 892.7Q1592.1 899.5 1591.5 912.3" fill="none" stroke="#d0cec9" stroke-width=".65"/>
<g fill="#dad7d3" opacity=".85"><rect x="950.6" y="863.6" width="5.3" height="4.4" rx="1"/><rect x="1055.9" y="904.4" width="2.6" height="3.2" rx="1"/><rect x="1239.0" y="842.7" width="5.7" height="2.3" rx="1"/><rect x="812.2" y="751.7" width="4.4" height="3.4" rx="1"/><rect x="401.8" y="745.0" width="3.5" height="4.3" rx="1"/><rect x="1079.2" y="732.1" width="5.3" height="2.3" rx="1"/><rect x="945.7" y="724.6" width="2.5" height="4.2" rx="1"/><rect x="578.5" y="744.7" width="5.9" height="4.2" rx="1"/><rect x="650.4" y="913.3" width="4.4" height="3.7" rx="1"/><rect x="574.3" y="908.7" width="4.9" height="4.4" rx="1"/><rect x="1194.4" y="763.5" width="3.8" height="2.4" rx="1"/><rect x="521.1" y="710.7" width="3.6" height="3.5" rx="1"/><rect x="393.0" y="849.2" width="3.7" height="2.8" rx="1"/><rect x="1126.7" y="804.6" width="3.6" height="3.2" rx="1"/><rect x="1024.2" y="708.9" width="5.9" height="2.1" rx="1"/><rect x="1064.8" y="886.9" width="2.6" height="4.0" rx="1"/><rect x="719.6" y="826.7" width="2.5" height="2.1" rx="1"/><rect x="552.8" y="911.9" width="3.2" height="3.9" rx="1"/><rect x="1226.7" y="908.9" width="3.7" height="2.9" rx="1"/><rect x="862.2" y="871.3" width="2.9" height="3.9" rx="1"/><rect x="1107.5" y="890.3" width="2.6" height="4.4" rx="1"/><rect x="472.1" y="773.0" width="4.6" height="4.3" rx="1"/><rect x="696.0" y="904.9" width="4.4" height="2.8" rx="1"/><rect x="675.1" y="736.1" width="2.8" height="2.4" rx="1"/><rect x="1010.3" y="921.3" width="3.1" height="2.1" rx="1"/><rect x="1278.0" y="816.6" width="3.9" height="2.6" rx="1"/><rect x="924.6" y="882.7" width="4.1" height="3.1" rx="1"/><rect x="440.1" y="903.0" width="2.6" height="3.2" rx="1"/><rect x="1144.6" y="725.5" width="5.1" height="4.4" rx="1"/><rect x="957.4" y="874.1" width="2.9" height="3.1" rx="1"/><rect x="524.3" y="886.9" width="3.5" height="3.1" rx="1"/><rect x="1289.4" y="888.6" width="5.9" height="3.1" rx="1"/><rect x="829.3" y="860.9" width="4.2" height="2.7" rx="1"/><rect x="753.4" y="729.1" width="3.8" height="4.5" rx="1"/><rect x="1253.8" y="837.7" width="4.2" height="2.8" rx="1"/><rect x="470.2" y="757.5" width="5.2" height="4.2" rx="1"/><rect x="715.2" y="873.6" width="5.2" height="3.7" rx="1"/><rect x="987.6" y="867.7" width="3.8" height="3.8" rx="1"/><rect x="642.8" y="805.8" width="5.2" height="3.7" rx="1"/><rect x="654.5" y="909.7" width="4.8" height="3.5" rx="1"/><rect x="400.4" y="819.6" width="3.4" height="3.7" rx="1"/><rect x="806.6" y="880.6" width="4.8" height="4.0" rx="1"/><rect x="703.1" y="841.6" width="5.1" height="4.1" rx="1"/><rect x="705.0" y="886.5" width="5.5" height="3.7" rx="1"/><rect x="1268.5" y="912.2" width="4.3" height="3.3" rx="1"/><rect x="539.6" y="885.1" width="5.8" height="3.2" rx="1"/><rect x="1012.3" y="858.6" width="5.1" height="2.4" rx="1"/><rect x="1092.3" y="827.3" width="4.8" height="3.1" rx="1"/><rect x="951.4" y="871.1" width="4.7" height="3.8" rx="1"/><rect x="414.9" y="732.2" width="4.0" height="3.6" rx="1"/><rect x="587.1" y="851.0" width="4.7" height="2.1" rx="1"/><rect x="814.4" y="747.1" width="2.7" height="2.3" rx="1"/><rect x="675.6" y="737.0" width="3.2" height="2.1" rx="1"/><rect x="808.8" y="781.9" width="4.6" height="3.5" rx="1"/><rect x="604.1" y="900.1" width="2.5" height="3.0" rx="1"/><rect x="640.7" y="788.7" width="2.9" height="4.1" rx="1"/><rect x="726.5" y="704.2" width="4.6" height="2.2" rx="1"/><rect x="880.7" y="772.7" width="4.5" height="4.4" rx="1"/><rect x="1126.7" y="790.7" width="5.3" height="3.6" rx="1"/><rect x="722.5" y="728.1" width="4.6" height="3.4" rx="1"/><rect x="1251.5" y="914.8" width="4.6" height="2.9" rx="1"/><rect x="1194.1" y="696.2" width="2.9" height="3.4" rx="1"/><rect x="943.7" y="727.8" width="4.7" height="4.2" rx="1"/><rect x="728.3" y="793.6" width="3.3" height="2.7" rx="1"/><rect x="1265.2" y="781.8" width="5.9" height="4.3" rx="1"/><rect x="926.2" y="754.7" width="5.9" height="3.2" rx="1"/><rect x="763.9" y="768.1" width="5.9" height="3.2" rx="1"/><rect x="647.8" y="803.8" width="2.9" height="3.6" rx="1"/><rect x="789.1" y="762.2" width="5.2" height="4.1" rx="1"/><rect x="401.9" y="816.4" width="3.5" height="4.3" rx="1"/></g>
<polygon points="1463.7,694.0 1448.8,718.9 1433.9,751.2 1426.4,776.1 1416.4,813.5 1409.0,848.3 1405.2,873.2 1406.5,888.1 1411.5,924.0 1600.0,924.0 1600.0,694.0" fill="#aad3df"/>
<polygon points="1309.4,694.0 1319.4,701.5 1314.4,716.4 1297.0,718.9 1297.0,736.3 1293.2,751.2 1289.5,788.6 1288.3,811.0 1287.0,833.4 1287.0,848.3 1304.4,853.3 1314.4,859.5 1329.3,853.3 1346.7,855.8 1339.3,873.2 1339.3,885.6 1346.7,900.6 1351.7,924.0 1411.5,924.0 1406.5,888.1 1405.2,873.2 1409.0,848.3 1416.4,813.5 1426.4,776.1 1433.9,751.2 1448.8,718.9 1463.7,694.0" fill="#aad3df"/>
<polygon points="1319.4,701.5 1339.3,699.0 1354.2,704.0 1376.6,701.5 1379.1,721.4 1374.1,743.8 1354.2,758.7 1359.2,776.1 1349.2,798.5 1354.2,823.4 1351.7,843.3 1339.3,853.3 1331.8,843.3 1339.3,818.4 1334.3,798.5 1341.8,776.1 1334.3,758.7 1341.8,738.8 1319.4,721.4" fill="#dfeccb" opacity=".6"/>
<polygon points="1329.3,694.0 1462.5,694.0 1447.5,718.9 1432.6,751.2 1425.1,776.1 1415.2,813.5 1407.7,848.3 1404.0,868.2 1369.1,865.7 1351.7,843.3 1339.3,823.4 1334.3,776.1 1314.4,718.9" fill="url(#wet)"/>
<polyline points="1463.7,694.0 1448.8,718.9 1433.9,751.2 1426.4,776.1 1416.4,813.5 1409.0,848.3 1405.2,873.2 1406.5,888.1 1411.5,924.0" fill="none" stroke="#f3f0e6" stroke-width="2.6"/>
<polyline points="1465.0,694.0 1450.1,718.9 1435.2,751.2 1427.7,776.1 1417.7,813.5 1410.3,848.3 1406.5,873.2 1407.8,888.1 1412.8,924.0" fill="none" stroke="#8a9a80" stroke-width=".5" stroke-dasharray="1.5,2.5"/>
<polygon points="1309.0,694.0 1320.0,703.0 1314.0,716.0 1327.0,734.0 1310.0,733.0 1297.0,720.0 1297.0,736.0 1289.0,740.0 1289.0,694.0" fill="#f2efe9"/>
<polyline points="1439.7,778.6 1464.6,788.6 1530.0,850.0 1598.0,924.0" fill="none" stroke="#7f93f2" stroke-width="1.05" stroke-dasharray="3,2.5"/>
<polyline points="1519.4,694.0 1598.0,740.0" fill="none" stroke="#7f93f2" stroke-width="1.05" stroke-dasharray="3,2.5"/>
<polygon points="1405.2,868.2 1410.2,879.4 1418.9,879.4 1418.9,884.4 1410.2,884.4 1411.5,900.6 1415.2,924.0 1394.0,924.0 1396.5,908.0 1404.0,893.1 1402.7,875.7" fill="#f2efe9"/>
<polygon points="1339.3,885.6 1346.7,900.6 1351.7,924.0 1319.4,924.0 1319.4,893.1" fill="#f2efe9"/>
<g fill="#bcd8a9" opacity=".8" filter="url(#blur0)"><ellipse cx="775" cy="722" rx="10" ry="7"/><ellipse cx="805" cy="718" rx="9" ry="9"/><ellipse cx="828" cy="742" rx="7" ry="7"/><ellipse cx="795" cy="702" rx="18" ry="7"/><ellipse cx="848" cy="718" rx="6" ry="9"/><ellipse cx="772" cy="705" rx="9" ry="6"/><ellipse cx="770" cy="700" rx="12" ry="8"/><ellipse cx="790" cy="712" rx="14" ry="12"/><ellipse cx="812" cy="700" rx="12" ry="8"/><ellipse cx="800" cy="735" rx="12" ry="14"/><ellipse cx="825" cy="722" rx="10" ry="14"/><ellipse cx="838" cy="705" rx="8" ry="10"/><ellipse cx="783" cy="738" rx="7" ry="8"/><ellipse cx="815" cy="750" rx="6" ry="6"/><ellipse cx="842" cy="735" rx="5" ry="8"/><ellipse cx="860" cy="702" rx="6" ry="5"/><ellipse cx="765" cy="715" rx="5" ry="6"/></g>
<g fill="#d3ebc5" opacity=".75"><ellipse cx="722" cy="700" rx="9" ry="5"/><ellipse cx="735" cy="712" rx="8" ry="6"/><ellipse cx="750" cy="702" rx="7" ry="5"/><ellipse cx="748" cy="728" rx="6" ry="5"/><ellipse cx="730" cy="738" rx="5" ry="4"/><ellipse cx="705" cy="705" rx="8" ry="4"/><ellipse cx="725" cy="725" rx="7" ry="5"/><ellipse cx="745" cy="745" rx="9" ry="4"/><ellipse cx="760" cy="760" rx="6" ry="4"/><ellipse cx="870" cy="720" rx="6" ry="4"/><ellipse cx="885" cy="740" rx="5" ry="3"/><ellipse cx="915" cy="720" rx="6" ry="5"/><ellipse cx="920" cy="760" rx="4" ry="6"/><ellipse cx="1020" cy="712" rx="7" ry="4"/><ellipse cx="610" cy="795" rx="7" ry="3"/><ellipse cx="580" cy="788" rx="9" ry="3"/><ellipse cx="420" cy="800" rx="5" ry="5"/><ellipse cx="500" cy="790" rx="4" ry="6"/><ellipse cx="450" cy="880" rx="5" ry="6"/><ellipse cx="1100" cy="790" rx="3" ry="3"/><ellipse cx="1140" cy="840" rx="4" ry="3"/><ellipse cx="1165" cy="860" rx="3" ry="5"/><ellipse cx="880" cy="800" rx="3" ry="3"/></g>
<polygon points="939.8,717.6 953.5,715.2 959.7,728.8 974.7,741.3 1004.5,731.3 1014.5,741.3 1019.5,758.7 1031.9,776.1 1034.4,791.1 1046.8,793.6 1039.4,811.0 1029.4,833.4 1017.0,853.3 1007.0,868.2 999.6,883.1 972.2,893.1 952.3,890.6 923.6,888.1 924.9,853.3 927.4,833.4 914.9,828.4 905.0,816.0 914.9,807.2 926.1,811.0 928.6,788.6 927.4,768.7 923.6,751.2 939.8,733.8" fill="#eff1e7" stroke="#9fcb8f" stroke-width="1.9" stroke-linejoin="round" stroke-opacity=".9"/>
<polygon points="942.3,726.4 957.2,736.3 974.7,748.8 1002.0,741.3 1012.0,758.7 1024.4,781.1 1024.4,801.0 1017.0,828.4 1004.5,853.3 994.6,873.2 974.7,878.2 957.2,868.2 939.8,858.3 937.3,798.5 934.8,768.7 932.4,753.7" fill="#c6debb" opacity=".5" filter="url(#blur0)"/>
<g fill="#bfdaae" opacity=".8" filter="url(#blur0)"><ellipse cx="948" cy="722" rx="9" ry="6"/><ellipse cx="940" cy="752" rx="13" ry="9"/><ellipse cx="958" cy="770" rx="12" ry="10"/><ellipse cx="975" cy="760" rx="8" ry="12"/><ellipse cx="990" cy="750" rx="10" ry="9"/><ellipse cx="1005" cy="742" rx="6" ry="6"/><ellipse cx="960" cy="795" rx="16" ry="12"/><ellipse cx="985" cy="800" rx="14" ry="12"/><ellipse cx="1005" cy="790" rx="10" ry="14"/><ellipse cx="1015" cy="770" rx="5" ry="9"/><ellipse cx="950" cy="830" rx="14" ry="12"/><ellipse cx="985" cy="835" rx="16" ry="12"/><ellipse cx="1010" cy="825" rx="9" ry="12"/><ellipse cx="965" cy="860" rx="14" ry="10"/><ellipse cx="1000" cy="862" rx="10" ry="10"/><ellipse cx="940" cy="800" rx="9" ry="14"/><ellipse cx="1025" cy="795" rx="7" ry="8"/><ellipse cx="935" cy="810" rx="5" ry="10"/></g>
<polygon points="1074.2,694.0 1161.3,694.0 1158.8,716.4 1138.9,736.3 1104.1,743.8 1079.2,733.8 1071.7,713.9" fill="#e1dfdd" opacity=".9"/>
<polygon points="1029.4,743.8 1049.3,741.3 1054.3,758.7 1039.4,776.1 1026.9,763.7" fill="#e2e0de" opacity=".8"/>
<polyline points="405.0,777.4 417.5,791.1 432.4,803.5 439.9,818.4 447.3,828.4 437.4,848.3 432.4,868.2 442.4,883.1 447.3,905.5 457.3,924.0" fill="none" stroke="#a6d0e0" stroke-width="1.2" stroke-linejoin="round" stroke-linecap="round"/>
<polyline points="388.1,835.9 402.5,840.8 415.0,848.3 427.4,863.2 437.4,873.2" fill="none" stroke="#a6d0e0" stroke-width="1.2" stroke-linejoin="round" stroke-linecap="round"/>
<polyline points="480.9,772.9 487.1,788.6 497.1,806.0 512.0,816.0 522.0,823.4 531.9,840.8 546.9,853.3 561.8,868.2" fill="none" stroke="#a6d0e0" stroke-width="1.2" stroke-linejoin="round" stroke-linecap="round"/>
<polyline points="531.9,783.6 551.9,793.6 571.8,794.8 596.7,801.0 628.0,811.0" fill="none" stroke="#a6d0e0" stroke-width="1.2" stroke-linejoin="round" stroke-linecap="round"/>
<polyline points="298.0,723.9 305.5,733.8 303.0,751.2 312.9,763.7" fill="none" stroke="#a6d0e0" stroke-width="1.2" stroke-linejoin="round" stroke-linecap="round"/>
<polyline points="472.2,853.3 464.7,873.2 472.2,893.1 479.7,908.0" fill="none" stroke="#a6d0e0" stroke-width="2.2" stroke-linejoin="round" stroke-linecap="round"/>
<polyline points="657.3,718.9 664.8,743.8 652.4,793.6 659.8,818.4 647.4,840.8 662.3,863.2 667.3,893.1 677.2,918.0" fill="none" stroke="#a6d0e0" stroke-width="1.5" stroke-linejoin="round" stroke-linecap="round"/>
<polyline points="719.6,753.7 729.5,776.1 737.0,793.6 751.9,818.4 781.8,840.8 811.6,863.2 844.0,857.0 873.9,850.8 918.7,853.3" fill="none" stroke="#a6d0e0" stroke-width="1.2" stroke-linejoin="round" stroke-linecap="round"/>
<polyline points="744.4,833.4 754.4,853.3 756.9,883.1 759.4,918.0" fill="none" stroke="#a6d0e0" stroke-width="1.2" stroke-linejoin="round" stroke-linecap="round"/>
<polyline points="620.0,811.0 634.9,823.4 637.4,843.3" fill="none" stroke="#a6d0e0" stroke-width="1.2" stroke-linejoin="round" stroke-linecap="round"/>
<polyline points="1188.7,694.0 1208.6,728.8 1230.0,763.7" fill="none" stroke="#a6d0e0" stroke-width="1.1" stroke-linejoin="round" stroke-linecap="round"/>
<polyline points="900.0,853.3 919.9,865.7 924.9,868.2" fill="none" stroke="#a6d0e0" stroke-width="1.2" stroke-linejoin="round" stroke-linecap="round"/>
<polyline points="1180.0,853.3 1209.9,865.7 1244.7,878.2 1284.5,878.2 1304.4,890.6 1319.4,903.1" fill="none" stroke="#a6d0e0" stroke-width="1.4" stroke-linejoin="round" stroke-linecap="round"/>
<polyline points="1190.0,704.0 1214.8,743.8 1244.7,793.6 1262.1,823.4 1269.6,853.3" fill="none" stroke="#a6d0e0" stroke-width="1.0" stroke-linejoin="round" stroke-linecap="round"/>
<polyline points="407.5,783.6 422.4,798.5 417.5,823.4 412.5,843.3 392.6,873.2" fill="none" stroke="#c9c7c3" stroke-width="0.8" stroke-linejoin="round"/>
<polyline points="422.4,798.5 437.4,813.5 469.7,818.4 497.1,818.4 522.0,813.5" fill="none" stroke="#c9c7c3" stroke-width="0.8" stroke-linejoin="round"/>
<polyline points="412.5,843.3 437.4,838.4 467.2,833.4" fill="none" stroke="#c9c7c3" stroke-width="0.8" stroke-linejoin="round"/>
<polyline points="407.5,848.3 437.4,870.7 447.3,883.1 457.3,908.0" fill="none" stroke="#c9c7c3" stroke-width="0.8" stroke-linejoin="round"/>
<polyline points="482.2,840.8 502.1,823.4 522.0,816.0 551.9,811.0 579.2,813.5" fill="none" stroke="#c9c7c3" stroke-width="0.8" stroke-linejoin="round"/>
<polyline points="522.0,816.0 536.9,845.8 531.9,868.2 522.0,873.2 517.0,900.6 502.1,924.0" fill="none" stroke="#c9c7c3" stroke-width="0.8" stroke-linejoin="round"/>
<polyline points="549.4,860.7 561.8,883.1 576.7,900.6 591.7,924.0" fill="none" stroke="#c9c7c3" stroke-width="0.8" stroke-linejoin="round"/>
<polyline points="556.8,816.0 561.8,833.4 549.4,853.3" fill="none" stroke="#c9c7c3" stroke-width="0.8" stroke-linejoin="round"/>
<polyline points="579.2,813.5 591.7,833.4 586.7,853.3 604.1,868.2 628.0,878.2" fill="none" stroke="#c9c7c3" stroke-width="0.8" stroke-linejoin="round"/>
<polyline points="531.9,868.2 556.8,873.2 571.8,888.1 596.7,893.1 628.0,908.0" fill="none" stroke="#c9c7c3" stroke-width="0.8" stroke-linejoin="round"/>
<polyline points="507.1,772.9 517.0,803.5 522.0,816.0" fill="none" stroke="#c9c7c3" stroke-width="0.8" stroke-linejoin="round"/>
<polyline points="571.8,772.9 574.3,788.6 594.2,803.5 628.0,801.0" fill="none" stroke="#c9c7c3" stroke-width="0.8" stroke-linejoin="round"/>
<polyline points="477.2,883.1 504.6,883.1" fill="none" stroke="#c9c7c3" stroke-width="0.8" stroke-linejoin="round"/>
<polyline points="447.3,772.9 449.8,783.6 437.4,793.6" fill="none" stroke="#c9c7c3" stroke-width="0.8" stroke-linejoin="round"/>
<polyline points="644.9,756.2 662.3,788.6 659.8,811.0 679.7,843.3 702.1,868.2" fill="none" stroke="#c9c7c3" stroke-width="0.8" stroke-linejoin="round"/>
<polyline points="669.8,723.9 677.2,751.2 672.3,768.7 724.5,781.1 737.0,788.6" fill="none" stroke="#c9c7c3" stroke-width="0.8" stroke-linejoin="round"/>
<polyline points="677.2,751.2 704.6,741.3 734.5,743.8" fill="none" stroke="#c9c7c3" stroke-width="0.8" stroke-linejoin="round"/>
<polyline points="662.3,788.6 694.7,791.1 729.5,783.6" fill="none" stroke="#c9c7c3" stroke-width="0.8" stroke-linejoin="round"/>
<polyline points="679.7,843.3 719.6,838.4 749.4,833.4 779.3,853.3 809.1,853.3 814.1,833.4 819.1,823.4" fill="none" stroke="#c9c7c3" stroke-width="0.8" stroke-linejoin="round"/>
<polyline points="739.5,788.6 769.3,768.7 794.2,763.7 834.0,753.7 868.9,751.2" fill="none" stroke="#c9c7c3" stroke-width="0.8" stroke-linejoin="round"/>
<polyline points="794.2,763.7 809.1,776.1 829.1,788.6 844.0,811.0 858.9,823.4" fill="none" stroke="#c9c7c3" stroke-width="0.8" stroke-linejoin="round"/>
<polyline points="759.4,811.0 779.3,793.6 794.2,793.6 814.1,803.5 819.1,823.4" fill="none" stroke="#c9c7c3" stroke-width="0.8" stroke-linejoin="round"/>
<polyline points="819.1,823.4 816.6,843.3 809.1,868.2 794.2,883.1 791.7,924.0" fill="none" stroke="#c9c7c3" stroke-width="0.8" stroke-linejoin="round"/>
<polyline points="834.0,753.7 831.5,776.1 829.1,788.6" fill="none" stroke="#c9c7c3" stroke-width="0.8" stroke-linejoin="round"/>
<polyline points="702.1,868.2 724.5,878.2 727.0,898.1 759.4,900.6" fill="none" stroke="#c9c7c3" stroke-width="0.8" stroke-linejoin="round"/>
<polyline points="754.4,883.1 759.4,900.6 779.3,918.0" fill="none" stroke="#c9c7c3" stroke-width="0.8" stroke-linejoin="round"/>
<polyline points="839.0,890.6 844.0,908.0 836.5,924.0" fill="none" stroke="#c9c7c3" stroke-width="0.8" stroke-linejoin="round"/>
<polyline points="886.3,833.4 908.7,843.3 911.2,813.5 926.1,798.5" fill="none" stroke="#c9c7c3" stroke-width="0.8" stroke-linejoin="round"/>
<polyline points="888.8,776.1 908.7,783.6 926.1,788.6" fill="none" stroke="#c9c7c3" stroke-width="0.8" stroke-linejoin="round"/>
<polyline points="908.7,888.1 906.2,868.2 888.8,853.3" fill="none" stroke="#c9c7c3" stroke-width="0.8" stroke-linejoin="round"/>
<polyline points="853.9,694.0 858.9,716.4 844.0,728.8 836.5,746.3" fill="none" stroke="#c9c7c3" stroke-width="0.8" stroke-linejoin="round"/>
<polyline points="926.1,718.9 938.6,738.8 950.0,758.7" fill="none" stroke="#c9c7c3" stroke-width="0.8" stroke-linejoin="round"/>
<polyline points="634.9,773.6 627.5,798.5 634.9,833.4 625.0,863.2" fill="none" stroke="#c9c7c3" stroke-width="0.8" stroke-linejoin="round"/>
<polyline points="1074.2,776.1 1089.1,808.5 1071.7,833.4 1079.2,868.2 1074.2,900.6" fill="none" stroke="#c9c7c3" stroke-width="0.8" stroke-linejoin="round"/>
<polyline points="1089.1,808.5 1124.0,793.6 1148.9,803.5 1188.7,818.4" fill="none" stroke="#c9c7c3" stroke-width="0.8" stroke-linejoin="round"/>
<polyline points="1059.3,803.5 1074.2,823.4 1104.1,833.4 1143.9,843.3 1183.7,855.8 1230.0,868.2" fill="none" stroke="#c9c7c3" stroke-width="0.8" stroke-linejoin="round"/>
<polyline points="1119.0,761.2 1124.0,793.6 1138.9,833.4 1143.9,843.3 1124.0,868.2 1114.0,900.6" fill="none" stroke="#c9c7c3" stroke-width="0.8" stroke-linejoin="round"/>
<polyline points="1039.4,843.3 1059.3,853.3 1071.7,833.4" fill="none" stroke="#c9c7c3" stroke-width="0.8" stroke-linejoin="round"/>
<polyline points="1029.4,873.2 1049.3,868.2 1079.2,868.2 1104.1,853.3 1143.9,843.3" fill="none" stroke="#c9c7c3" stroke-width="0.8" stroke-linejoin="round"/>
<polyline points="1148.9,751.2 1158.8,776.1 1148.9,803.5" fill="none" stroke="#c9c7c3" stroke-width="0.8" stroke-linejoin="round"/>
<polyline points="1173.8,736.3 1168.8,766.2 1188.7,788.6 1188.7,818.4 1183.7,855.8" fill="none" stroke="#c9c7c3" stroke-width="0.8" stroke-linejoin="round"/>
<polyline points="1079.2,900.6 1084.2,924.0" fill="none" stroke="#c9c7c3" stroke-width="0.8" stroke-linejoin="round"/>
<polyline points="1124.0,900.6 1119.0,924.0" fill="none" stroke="#c9c7c3" stroke-width="0.8" stroke-linejoin="round"/>
<polyline points="1168.8,900.6 1173.8,924.0" fill="none" stroke="#c9c7c3" stroke-width="0.8" stroke-linejoin="round"/>
<polyline points="1148.9,865.7 1163.8,883.1 1163.8,900.6" fill="none" stroke="#c9c7c3" stroke-width="0.8" stroke-linejoin="round"/>
<polyline points="974.7,694.0 982.1,713.9 1004.5,731.3" fill="none" stroke="#c9c7c3" stroke-width="0.8" stroke-linejoin="round"/>
<polyline points="1004.5,731.3 1024.4,718.9 1039.4,726.4" fill="none" stroke="#c9c7c3" stroke-width="0.8" stroke-linejoin="round"/>
<polyline points="900.0,776.1 914.9,783.6 926.1,788.6" fill="none" stroke="#c9c7c3" stroke-width="0.8" stroke-linejoin="round"/>
<polyline points="900.0,843.3 914.9,843.3 924.9,853.3" fill="none" stroke="#c9c7c3" stroke-width="0.8" stroke-linejoin="round"/>
<polyline points="949.8,748.8 964.7,768.7 959.7,798.5 974.7,823.4 969.7,848.3" fill="none" stroke="#c9c7c3" stroke-width="0.8" stroke-linejoin="round"/>
<polyline points="974.7,741.3 989.6,763.7 1009.5,776.1" fill="none" stroke="#c9c7c3" stroke-width="0.8" stroke-linejoin="round"/>
<polyline points="959.7,798.5 984.6,803.5 1024.4,801.0" fill="none" stroke="#c9c7c3" stroke-width="0.8" stroke-linejoin="round"/>
<polyline points="1219.8,704.0 1229.8,733.8 1254.7,753.7 1279.6,776.1 1287.0,788.6" fill="none" stroke="#c9c7c3" stroke-width="0.8" stroke-linejoin="round"/>
<polyline points="1180.0,763.7 1209.9,768.7 1237.2,763.7 1279.6,776.1" fill="none" stroke="#c9c7c3" stroke-width="0.8" stroke-linejoin="round"/>
<polyline points="1244.7,793.6 1264.6,806.0 1287.0,808.5" fill="none" stroke="#c9c7c3" stroke-width="0.8" stroke-linejoin="round"/>
<polyline points="1214.8,823.4 1234.8,833.4 1264.6,843.3 1284.5,845.8" fill="none" stroke="#c9c7c3" stroke-width="0.8" stroke-linejoin="round"/>
<polyline points="1180.0,833.4 1194.9,843.3 1207.4,863.2" fill="none" stroke="#c9c7c3" stroke-width="0.8" stroke-linejoin="round"/>
<polyline points="1229.8,873.2 1244.7,893.1 1262.1,898.1" fill="none" stroke="#c9c7c3" stroke-width="0.8" stroke-linejoin="round"/>
<polyline points="1264.6,843.3 1269.6,868.2 1262.1,898.1 1259.6,924.0" fill="none" stroke="#c9c7c3" stroke-width="0.8" stroke-linejoin="round"/>
<polyline points="1180.0,913.0 1229.8,908.0 1284.5,903.1 1319.4,893.1" fill="none" stroke="#c9c7c3" stroke-width="0.8" stroke-linejoin="round"/>
<polyline points="1249.7,694.0 1254.7,718.9 1249.7,743.8 1237.2,763.7" fill="none" stroke="#c9c7c3" stroke-width="0.8" stroke-linejoin="round"/>
<polyline points="388.1,865.7 397.6,875.7 412.5,880.7 412.5,893.1 422.4,908.0 447.3,913.0 457.3,924.0" fill="none" stroke="#8fae8a" stroke-width="1.6" stroke-opacity=".75"/>
<polyline points="712.1,699.0 714.6,731.3 719.6,756.2 749.4,763.7 779.3,778.6 791.7,788.6 779.3,798.5 789.2,811.0 809.1,823.4 844.0,833.4 868.9,853.3" fill="none" stroke="#9aa59a" stroke-width=".8" stroke-dasharray="4,1.5,1,1.5"/>
<polyline points="1264.6,803.5 1287.0,809.7 1324.4,808.5 1329.3,823.4 1339.3,833.4 1334.3,868.2 1319.4,893.1 1302.0,900.6 1304.4,924.0" fill="none" stroke="#9aa59a" stroke-width=".8" stroke-dasharray="4,1.5,1,1.5"/>
<polyline points="453.6,772.9 469.7,818.4 475.9,865.7 500.8,924.0" fill="none" stroke="#6f6f6f" stroke-width="0.9" stroke-linejoin="round"/>
<polyline points="479.7,843.3 487.1,842.1 522.0,853.3 559.3,863.2 584.2,880.7 614.1,910.5 619.1,918.0" fill="none" stroke="#6f6f6f" stroke-width="0.9" stroke-linejoin="round"/>
<polyline points="388.1,718.9 372.7,736.3 355.2,747.5" fill="none" stroke="#999" stroke-width="0.9" stroke-linejoin="round"/>
<polyline points="669.8,924.0 699.6,918.0 719.6,900.6 744.4,883.1 809.1,885.6 844.0,890.6 931.1,891.9 950.0,891.9" fill="none" stroke="#6f6f6f" stroke-width="0.9" stroke-linejoin="round"/>
<polyline points="643.9,701.5 682.2,700.2 709.6,696.5 714.6,694.0" fill="none" stroke="#6f6f6f" stroke-width="0.9" stroke-linejoin="round"/>
<polyline points="900.0,891.9 922.4,891.9 949.8,894.3 974.7,896.8 999.6,890.6" fill="none" stroke="#6f6f6f" stroke-width="0.9" stroke-linejoin="round"/>
<polyline points="1064.3,728.8 1059.3,738.8 1039.4,793.6 1012.0,855.8 977.2,924.0" fill="none" stroke="#6f6f6f" stroke-width="0.9" stroke-linejoin="round"/>
<polyline points="1129.0,694.0 1133.9,704.0 1132.7,723.9 1138.9,768.7 1143.9,843.3" fill="none" stroke="#aaa" stroke-width="0.8" stroke-linejoin="round"/>
<polyline points="1277.1,694.0 1262.1,728.8 1254.7,758.7 1229.8,798.5 1214.8,833.4 1209.9,868.2 1227.3,888.1 1224.8,924.0" fill="none" stroke="#8a8a8a" stroke-width="0.9" stroke-linejoin="round"/>
<polyline points="1180.0,924.0 1229.8,913.0 1284.5,905.5" fill="none" stroke="#8a8a8a" stroke-width="0.9" stroke-linejoin="round"/>
<polyline points="388.1,732.6 372.7,745.0 355.2,752.5 341.6,772.9" fill="none" stroke="#e58a9e" stroke-width="2.8" stroke-linejoin="round" stroke-linecap="round"/><polyline points="388.1,732.6 372.7,745.0 355.2,752.5 341.6,772.9" fill="none" stroke="#f2bcc7" stroke-width="0.56" stroke-linejoin="round"/>
<polyline points="462.8,772.9 469.7,811.0 478.4,838.4 464.7,868.2 477.2,893.1 499.6,924.0" fill="none" stroke="#e58a9e" stroke-width="2.8" stroke-linejoin="round" stroke-linecap="round"/><polyline points="462.8,772.9 469.7,811.0 478.4,838.4 464.7,868.2 477.2,893.1 499.6,924.0" fill="none" stroke="#f2bcc7" stroke-width="0.56" stroke-linejoin="round"/>
<polyline points="469.7,811.0 475.2,833.4 472.2,855.8 464.7,868.2" fill="none" stroke="#e58a9e" stroke-width="2.0" stroke-linejoin="round" stroke-linecap="round"/><polyline points="469.7,811.0 475.2,833.4 472.2,855.8 464.7,868.2" fill="none" stroke="#f2bcc7" stroke-width="0.40" stroke-linejoin="round"/>
<polyline points="514.7,773.0 530.6,784.9 558.0,800.0 586.0,814.6 606.0,827.0 621.7,838.3 630.0,851.0 635.5,866.0 637.5,891.8 644.0,905.0 653.3,915.6 657.0,924.0" fill="none" stroke="#e58a9e" stroke-width="3.4" stroke-linejoin="round" stroke-linecap="round"/><polyline points="514.7,773.0 530.6,784.9 558.0,800.0 586.0,814.6 606.0,827.0 621.7,838.3 630.0,851.0 635.5,866.0 637.5,891.8 644.0,905.0 653.3,915.6 657.0,924.0" fill="none" stroke="#f2bcc7" stroke-width="0.68" stroke-linejoin="round"/>
<polyline points="388.1,908.0 407.5,913.0 427.4,915.5 417.5,924.0" fill="none" stroke="#e58a9e" stroke-width="2.8" stroke-linejoin="round" stroke-linecap="round"/><polyline points="388.1,908.0 407.5,913.0 427.4,915.5 417.5,924.0" fill="none" stroke="#f2bcc7" stroke-width="0.56" stroke-linejoin="round"/>
<polyline points="427.4,915.5 447.3,924.0" fill="none" stroke="#e58a9e" stroke-width="2.8" stroke-linejoin="round" stroke-linecap="round"/><polyline points="427.4,915.5 447.3,924.0" fill="none" stroke="#f2bcc7" stroke-width="0.56" stroke-linejoin="round"/>
<polyline points="739.5,694.0 742.0,713.9 740.7,733.8 733.2,751.2 737.0,776.1 738.2,811.0 727.0,833.4 724.5,853.3 704.6,873.2 694.7,898.1 672.3,908.0 654.8,914.3 644.9,910.5 634.9,868.2 627.5,848.3 620.0,835.9" fill="none" stroke="#e58a9e" stroke-width="2.8" stroke-linejoin="round" stroke-linecap="round"/><polyline points="739.5,694.0 742.0,713.9 740.7,733.8 733.2,751.2 737.0,776.1 738.2,811.0 727.0,833.4 724.5,853.3 704.6,873.2 694.7,898.1 672.3,908.0 654.8,914.3 644.9,910.5 634.9,868.2 627.5,848.3 620.0,835.9" fill="none" stroke="#f2bcc7" stroke-width="0.56" stroke-linejoin="round"/>
<polyline points="694.7,898.1 719.6,883.1 754.4,879.4 774.3,876.9 809.1,885.6 844.0,885.6 893.8,889.4 931.1,888.1" fill="none" stroke="#e58a9e" stroke-width="2.8" stroke-linejoin="round" stroke-linecap="round"/><polyline points="694.7,898.1 719.6,883.1 754.4,879.4 774.3,876.9 809.1,885.6 844.0,885.6 893.8,889.4 931.1,888.1" fill="none" stroke="#f2bcc7" stroke-width="0.56" stroke-linejoin="round"/>
<polyline points="756.9,694.0 754.4,704.0 742.0,713.9" fill="none" stroke="#e58a9e" stroke-width="2.2" stroke-linejoin="round" stroke-linecap="round"/><polyline points="756.9,694.0 754.4,704.0 742.0,713.9" fill="none" stroke="#f2bcc7" stroke-width="0.44" stroke-linejoin="round"/>
<polyline points="643.9,703.5 669.8,701.5 702.1,696.5 709.6,694.0" fill="none" stroke="#e58a9e" stroke-width="2.2" stroke-linejoin="round" stroke-linecap="round"/><polyline points="643.9,703.5 669.8,701.5 702.1,696.5 709.6,694.0" fill="none" stroke="#f2bcc7" stroke-width="0.44" stroke-linejoin="round"/>
<polyline points="888.8,694.0 876.3,736.3 875.1,776.1 862.7,833.4 876.3,837.1" fill="none" stroke="#e58a9e" stroke-width="2.2" stroke-linejoin="round" stroke-linecap="round"/><polyline points="888.8,694.0 876.3,736.3 875.1,776.1 862.7,833.4 876.3,837.1" fill="none" stroke="#f2bcc7" stroke-width="0.44" stroke-linejoin="round"/>
<polyline points="900.0,890.6 914.9,895.6 912.4,908.0 949.8,909.3 969.7,903.1 1012.0,905.5 1049.3,899.3 1099.1,899.3 1148.9,900.6 1230.0,898.1" fill="none" stroke="#e58a9e" stroke-width="2.8" stroke-linejoin="round" stroke-linecap="round"/><polyline points="900.0,890.6 914.9,895.6 912.4,908.0 949.8,909.3 969.7,903.1 1012.0,905.5 1049.3,899.3 1099.1,899.3 1148.9,900.6 1230.0,898.1" fill="none" stroke="#f2bcc7" stroke-width="0.56" stroke-linejoin="round"/>
<polyline points="914.9,895.6 942.3,893.1" fill="none" stroke="#e58a9e" stroke-width="2.2" stroke-linejoin="round" stroke-linecap="round"/><polyline points="914.9,895.6 942.3,893.1" fill="none" stroke="#f2bcc7" stroke-width="0.44" stroke-linejoin="round"/>
<polyline points="1138.9,694.0 1142.7,704.0 1140.2,711.4 1124.0,733.8 1089.1,745.0 1079.2,736.3 1074.2,731.3 1054.3,726.4 1034.4,726.4" fill="none" stroke="#e58a9e" stroke-width="2.8" stroke-linejoin="round" stroke-linecap="round"/><polyline points="1138.9,694.0 1142.7,704.0 1140.2,711.4 1124.0,733.8 1089.1,745.0 1079.2,736.3 1074.2,731.3 1054.3,726.4 1034.4,726.4" fill="none" stroke="#f2bcc7" stroke-width="0.56" stroke-linejoin="round"/>
<polyline points="1074.2,731.3 1061.8,743.8 1051.8,747.5 1059.3,733.8 1074.2,731.3" fill="none" stroke="#e58a9e" stroke-width="2.2" stroke-linejoin="round" stroke-linecap="round"/><polyline points="1074.2,731.3 1061.8,743.8 1051.8,747.5 1059.3,733.8 1074.2,731.3" fill="none" stroke="#f2bcc7" stroke-width="0.44" stroke-linejoin="round"/>
<polyline points="1084.2,753.7 1074.2,771.2 1059.3,793.6 1049.3,806.0" fill="none" stroke="#e58a9e" stroke-width="2.4" stroke-linejoin="round" stroke-linecap="round"/><polyline points="1084.2,753.7 1074.2,771.2 1059.3,793.6 1049.3,806.0" fill="none" stroke="#f2bcc7" stroke-width="0.48" stroke-linejoin="round"/>
<polyline points="1012.0,865.7 1012.0,900.6 1013.2,924.0" fill="none" stroke="#e58a9e" stroke-width="2.2" stroke-linejoin="round" stroke-linecap="round"/><polyline points="1012.0,865.7 1012.0,900.6 1013.2,924.0" fill="none" stroke="#f2bcc7" stroke-width="0.44" stroke-linejoin="round"/>
<polyline points="1138.9,713.9 1181.2,736.3 1211.1,776.1 1223.5,803.5 1230.0,811.0" fill="none" stroke="#e58a9e" stroke-width="2.8" stroke-linejoin="round" stroke-linecap="round"/><polyline points="1138.9,713.9 1181.2,736.3 1211.1,776.1 1223.5,803.5 1230.0,811.0" fill="none" stroke="#f2bcc7" stroke-width="0.56" stroke-linejoin="round"/>
<polyline points="1124.0,733.8 1148.9,746.3 1211.1,808.5 1209.9,868.2 1208.6,900.6 1218.6,924.0" fill="none" stroke="#e58a9e" stroke-width="2.8" stroke-linejoin="round" stroke-linecap="round"/><polyline points="1124.0,733.8 1148.9,746.3 1211.1,808.5 1209.9,868.2 1208.6,900.6 1218.6,924.0" fill="none" stroke="#f2bcc7" stroke-width="0.56" stroke-linejoin="round"/>
<polyline points="1181.2,736.3 1198.7,758.7 1203.6,776.1" fill="none" stroke="#e58a9e" stroke-width="2.0" stroke-linejoin="round" stroke-linecap="round"/><polyline points="1181.2,736.3 1198.7,758.7 1203.6,776.1" fill="none" stroke="#f2bcc7" stroke-width="0.40" stroke-linejoin="round"/>
<polyline points="1193.7,694.0 1198.7,699.0 1206.1,694.0" fill="none" stroke="#e58a9e" stroke-width="2.2" stroke-linejoin="round" stroke-linecap="round"/><polyline points="1193.7,694.0 1198.7,699.0 1206.1,694.0" fill="none" stroke="#f2bcc7" stroke-width="0.44" stroke-linejoin="round"/>
<polyline points="1306.9,694.0 1292.0,711.4 1289.5,768.7 1284.5,843.3 1283.3,855.8 1314.4,883.1 1354.2,898.1 1391.5,918.0 1394.0,924.0" fill="none" stroke="#e58a9e" stroke-width="2.8" stroke-linejoin="round" stroke-linecap="round"/><polyline points="1306.9,694.0 1292.0,711.4 1289.5,768.7 1284.5,843.3 1283.3,855.8 1314.4,883.1 1354.2,898.1 1391.5,918.0 1394.0,924.0" fill="none" stroke="#f2bcc7" stroke-width="0.56" stroke-linejoin="round"/>
<polyline points="1180.0,736.3 1187.5,737.6 1194.9,748.8 1212.4,798.5 1229.8,816.0 1262.1,840.8 1283.3,855.8" fill="none" stroke="#e58a9e" stroke-width="2.8" stroke-linejoin="round" stroke-linecap="round"/><polyline points="1180.0,736.3 1187.5,737.6 1194.9,748.8 1212.4,798.5 1229.8,816.0 1262.1,840.8 1283.3,855.8" fill="none" stroke="#f2bcc7" stroke-width="0.56" stroke-linejoin="round"/>
<polyline points="1212.4,816.0 1206.1,863.2 1207.4,888.1 1217.3,900.6 1219.8,924.0" fill="none" stroke="#e58a9e" stroke-width="2.8" stroke-linejoin="round" stroke-linecap="round"/><polyline points="1212.4,816.0 1206.1,863.2 1207.4,888.1 1217.3,900.6 1219.8,924.0" fill="none" stroke="#f2bcc7" stroke-width="0.56" stroke-linejoin="round"/>
<polyline points="1180.0,900.6 1217.3,899.3 1264.6,895.6 1279.6,878.2 1284.5,858.3" fill="none" stroke="#e58a9e" stroke-width="2.8" stroke-linejoin="round" stroke-linecap="round"/><polyline points="1180.0,900.6 1217.3,899.3 1264.6,895.6 1279.6,878.2 1284.5,858.3" fill="none" stroke="#f2bcc7" stroke-width="0.56" stroke-linejoin="round"/>
<polyline points="1180.0,778.6 1197.4,793.6 1212.4,806.0" fill="none" stroke="#e58a9e" stroke-width="2.2" stroke-linejoin="round" stroke-linecap="round"/><polyline points="1180.0,778.6 1197.4,793.6 1212.4,806.0" fill="none" stroke="#f2bcc7" stroke-width="0.44" stroke-linejoin="round"/>
<polyline points="1194.9,694.0 1199.9,697.7 1204.9,694.0" fill="none" stroke="#e58a9e" stroke-width="2.0" stroke-linejoin="round" stroke-linecap="round"/><polyline points="1194.9,694.0 1199.9,697.7 1204.9,694.0" fill="none" stroke="#f2bcc7" stroke-width="0.40" stroke-linejoin="round"/>
<polyline points="1049.3,806.0 1039.4,823.4 1024.4,848.3 1014.5,868.2" fill="none" stroke="#b08878" stroke-width="1.6"/>
<polyline points="362.7,694.0 377.6,695.5 388.1,694.0" fill="none" stroke="#f1814a" stroke-width="5.5" stroke-linejoin="round" stroke-linecap="round"/><polyline points="362.7,694.0 377.6,695.5 388.1,694.0" fill="none" stroke="#f9dd4c" stroke-width="2.09" stroke-linejoin="round"/>
<polyline points="403.8,772.9 401.3,788.6 393.8,806.0 388.1,813.5" fill="none" stroke="#f1814a" stroke-width="5.6" stroke-linejoin="round" stroke-linecap="round"/><polyline points="403.8,772.9 401.3,788.6 393.8,806.0 388.1,813.5" fill="none" stroke="#f9dd4c" stroke-width="2.13" stroke-linejoin="round"/>
<polyline points="643.9,699.5 657.3,699.0 669.8,696.5 682.2,694.0" fill="none" stroke="#f1814a" stroke-width="5.5" stroke-linejoin="round" stroke-linecap="round"/><polyline points="643.9,699.5 657.3,699.0 669.8,696.5 682.2,694.0" fill="none" stroke="#f9dd4c" stroke-width="2.09" stroke-linejoin="round"/>
<polyline points="924.1,694.0 916.2,713.9 906.2,726.4 905.0,743.8 883.8,768.7 878.8,783.6 882.6,801.0 878.8,833.4 876.3,853.3 868.9,873.2 858.9,898.1 856.4,924.0" fill="none" stroke="#f1814a" stroke-width="5.6" stroke-linejoin="round" stroke-linecap="round"/><polyline points="924.1,694.0 916.2,713.9 906.2,726.4 905.0,743.8 883.8,768.7 878.8,783.6 882.6,801.0 878.8,833.4 876.3,853.3 868.9,873.2 858.9,898.1 856.4,924.0" fill="none" stroke="#f9dd4c" stroke-width="2.13" stroke-linejoin="round"/>
<polyline points="1160.1,694.0 1163.8,704.0 1148.9,751.2 1133.9,758.7 1079.2,769.9 1061.8,793.6 1059.3,803.5 1039.4,828.4 1026.9,853.3 1025.7,888.1 1026.9,924.0" fill="none" stroke="#f1814a" stroke-width="5.6" stroke-linejoin="round" stroke-linecap="round"/><polyline points="1160.1,694.0 1163.8,704.0 1148.9,751.2 1133.9,758.7 1079.2,769.9 1061.8,793.6 1059.3,803.5 1039.4,828.4 1026.9,853.3 1025.7,888.1 1026.9,924.0" fill="none" stroke="#f9dd4c" stroke-width="2.13" stroke-linejoin="round"/>
<polyline points="1084.2,743.8 1085.4,753.7 1079.2,769.9" fill="none" stroke="#f1814a" stroke-width="4" stroke-linejoin="round" stroke-linecap="round"/><polyline points="1084.2,743.8 1085.4,753.7 1079.2,769.9" fill="none" stroke="#f9dd4c" stroke-width="1.52" stroke-linejoin="round"/>
<rect x="1082" y="743" width="8.5" height="4.6" fill="#f07c3c"/>
<rect x="877" y="771" width="8" height="5" fill="#f28a4a" transform="rotate(-25 881 773)"/>
<text x="303.0" y="703.7" font-size="10.6" fill="#333" text-anchor="start" stroke="#fff" stroke-width="1.6" stroke-opacity=".75" paint-order="stroke" stroke-linejoin="round" >Sommacampagna</text>
<text x="348.0" y="756.0" font-size="10.6" fill="#333" text-anchor="middle" stroke="#fff" stroke-width="1.6" stroke-opacity=".75" paint-order="stroke" stroke-linejoin="round" >Villafranca</text>
<text x="350.0" y="768.7" font-size="10.6" fill="#333" text-anchor="middle" stroke="#fff" stroke-width="1.6" stroke-opacity=".75" paint-order="stroke" stroke-linejoin="round" >di Verona</text>
<g transform="translate(379,711.5)" fill="#8461c4"><path d="M0 -5.2C.8 -5.2 1 -4 1 -3V-1.2L5.2 1.6V2.8L1 1.4V3.6L2.3 4.6V5.4L0 4.8L-2.3 5.4V4.6L-1 3.6V1.4L-5.2 2.8V1.6L-1 -1.2V-3C-1 -4 -.8 -5.2 0 -5.2Z"/></g>
<text x="647.0" y="716.4" font-size="10.6" fill="#333" text-anchor="start" stroke="#fff" stroke-width="1.6" stroke-opacity=".75" paint-order="stroke" stroke-linejoin="round" >Bonifacio</text>
<text x="744.4" y="723.7" font-size="10.6" fill="#333" text-anchor="middle" stroke="#fff" stroke-width="1.6" stroke-opacity=".75" paint-order="stroke" stroke-linejoin="round" >Lonigo</text>
<text x="742.0" y="804.7" font-size="10.6" fill="#333" text-anchor="middle" stroke="#fff" stroke-width="1.6" stroke-opacity=".75" paint-order="stroke" stroke-linejoin="round" >Cologna Veneta</text>
<text x="855.2" y="824.7" font-size="10.6" fill="#333" text-anchor="middle" stroke="#fff" stroke-width="1.6" stroke-opacity=".75" paint-order="stroke" stroke-linejoin="round" >Noventa Vicentina</text>
<text x="801.2" y="883.9" font-size="10.6" fill="#333" text-anchor="middle" stroke="#fff" stroke-width="1.6" stroke-opacity=".75" paint-order="stroke" stroke-linejoin="round" >Montagnana</text>
<text x="688.4" y="925.4" font-size="10.6" fill="#333" text-anchor="middle" stroke="#fff" stroke-width="1.6" stroke-opacity=".75" paint-order="stroke" stroke-linejoin="round" >Legnago</text>
<text x="614.0" y="925.4" font-size="10.6" fill="#333" text-anchor="middle" stroke="#fff" stroke-width="1.6" stroke-opacity=".75" paint-order="stroke" stroke-linejoin="round" >Cerea</text>
<text x="941.0" y="893.1" font-size="10.6" fill="#333" text-anchor="middle" stroke="#fff" stroke-width="1.6" stroke-opacity=".75" paint-order="stroke" stroke-linejoin="round" >Este</text>
<text x="467.2" y="836.6" font-size="10.6" fill="#333" text-anchor="middle" stroke="#fff" stroke-width="1.6" stroke-opacity=".75" paint-order="stroke" stroke-linejoin="round" >Isola della</text>
<text x="467.2" y="849.0" font-size="10.6" fill="#333" text-anchor="middle" stroke="#fff" stroke-width="1.6" stroke-opacity=".75" paint-order="stroke" stroke-linejoin="round" >Scala</text>
<text x="549.4" y="858.2" font-size="10.6" fill="#333" text-anchor="middle" stroke="#fff" stroke-width="1.6" stroke-opacity=".75" paint-order="stroke" stroke-linejoin="round" >Bovolone</text>
<text x="1034.4" y="715.7" font-size="10.6" fill="#333" text-anchor="middle" stroke="#fff" stroke-width="1.6" stroke-opacity=".75" paint-order="stroke" stroke-linejoin="round" >Selvazzano</text>
<text x="1034.4" y="728.1" font-size="10.6" fill="#333" text-anchor="middle" stroke="#fff" stroke-width="1.6" stroke-opacity=".75" paint-order="stroke" stroke-linejoin="round" >Dentro</text>
<text x="1097.9" y="698.6" font-size="13.4" fill="#333" text-anchor="middle" stroke="#fff" stroke-width="1.6" stroke-opacity=".75" paint-order="stroke" stroke-linejoin="round" >Padova</text>
<text x="1097.9" y="712.6" font-size="13.4" fill="#333" text-anchor="middle" stroke="#fff" stroke-width="1.6" stroke-opacity=".75" paint-order="stroke" stroke-linejoin="round" >Padua</text>
<text x="1093.4" y="765.7" font-size="10.6" fill="#333" text-anchor="middle" stroke="#fff" stroke-width="1.6" stroke-opacity=".75" paint-order="stroke" stroke-linejoin="round" >Albignasego</text>
<text x="1008.8" y="874.9" font-size="10.6" fill="#333" text-anchor="middle" stroke="#fff" stroke-width="1.6" stroke-opacity=".75" paint-order="stroke" stroke-linejoin="round" >Monselice</text>
<text x="1098.4" y="883.4" font-size="10.6" fill="#333" text-anchor="middle" stroke="#fff" stroke-width="1.6" stroke-opacity=".75" paint-order="stroke" stroke-linejoin="round" >Conselve</text>
<text x="1242.7" y="727.6" font-size="10.6" fill="#333" text-anchor="middle" stroke="#fff" stroke-width="1.6" stroke-opacity=".75" paint-order="stroke" stroke-linejoin="round" >Camponogara</text>
<text x="1225.3" y="777.3" font-size="10.6" fill="#333" text-anchor="middle" stroke="#fff" stroke-width="1.6" stroke-opacity=".75" paint-order="stroke" stroke-linejoin="round" >Campolongo</text>
<text x="1225.3" y="789.7" font-size="10.6" fill="#333" text-anchor="middle" stroke="#fff" stroke-width="1.6" stroke-opacity=".75" paint-order="stroke" stroke-linejoin="round" >Maggiore</text>
<text x="1216.8" y="817.2" font-size="10.6" fill="#333" text-anchor="middle" stroke="#fff" stroke-width="1.6" stroke-opacity=".75" paint-order="stroke" stroke-linejoin="round" >Piove di Sacco</text>
<text x="1392.8" y="898.7" font-size="10.6" fill="#333" text-anchor="middle" stroke="#fff" stroke-width="1.6" stroke-opacity=".75" paint-order="stroke" stroke-linejoin="round" >Chioggia</text>
<text x="984.6" y="780.5" font-size="11.4" fill="#0e8a16" text-anchor="middle" stroke="#e8f2e0" stroke-width="1.2" stroke-opacity=".75" paint-order="stroke" stroke-linejoin="round" font-style="italic">Parco dei</text>
<text x="984.6" y="795.0" font-size="11.4" fill="#0e8a16" text-anchor="middle" stroke="#e8f2e0" stroke-width="1.2" stroke-opacity=".75" paint-order="stroke" stroke-linejoin="round" font-style="italic">Colli Euganei</text>
<text x="984.6" y="809.4" font-size="11.4" fill="#0e8a16" text-anchor="middle" stroke="#e8f2e0" stroke-width="1.2" stroke-opacity=".75" paint-order="stroke" stroke-linejoin="round" font-style="italic">- Regionalpark</text>
<text x="984.6" y="823.9" font-size="11.4" fill="#0e8a16" text-anchor="middle" stroke="#e8f2e0" stroke-width="1.2" stroke-opacity=".75" paint-order="stroke" stroke-linejoin="round" font-style="italic">der Euganeischen</text>
<text x="984.6" y="838.3" font-size="11.4" fill="#0e8a16" text-anchor="middle" stroke="#e8f2e0" stroke-width="1.2" stroke-opacity=".75" paint-order="stroke" stroke-linejoin="round" font-style="italic">Hügel</text>
<text x="1404.0" y="727.4" font-size="11.8" fill="#6b8db5" text-anchor="middle" stroke="#aad3df" stroke-width="1.0" stroke-opacity=".75" paint-order="stroke" stroke-linejoin="round" font-style="italic">Laguna</text>
<text x="1404.0" y="741.9" font-size="11.8" fill="#6b8db5" text-anchor="middle" stroke="#aad3df" stroke-width="1.0" stroke-opacity=".75" paint-order="stroke" stroke-linejoin="round" font-style="italic">di Venezia</text>
<text x="1404.0" y="756.3" font-size="11.8" fill="#6b8db5" text-anchor="middle" stroke="#aad3df" stroke-width="1.0" stroke-opacity=".75" paint-order="stroke" stroke-linejoin="round" font-style="italic">Lagune</text>
<text x="1404.0" y="770.8" font-size="11.8" fill="#6b8db5" text-anchor="middle" stroke="#aad3df" stroke-width="1.0" stroke-opacity=".75" paint-order="stroke" stroke-linejoin="round" font-style="italic">von Venedig</text>
<text x="1410.2" y="782.5" font-size="9.8" fill="#4a80d4" text-anchor="middle" stroke="#aad3df" stroke-width="1.0" stroke-opacity=".75" paint-order="stroke" stroke-linejoin="round" font-style="italic">Laguna</text>
<text x="1410.2" y="794.0" font-size="9.8" fill="#4a80d4" text-anchor="middle" stroke="#aad3df" stroke-width="1.0" stroke-opacity=".75" paint-order="stroke" stroke-linejoin="round" font-style="italic">Sud</text>
<polygon points="884.2,746.5 891.0,746.5 894.5,745.0 901.5,745.0 905.0,746.5 911.8,746.5 911.8,759.5 905.0,759.5 901.5,761.0 894.5,761.0 891.0,759.5 884.2,759.5" fill="#2f55ae" stroke="#2a4a98" stroke-width=".6" stroke-linejoin="round"/><text x="898.0" y="756.4" font-size="9.6" font-weight="700" fill="#fff" text-anchor="middle" font-family="'DejaVu Sans','Liberation Sans',sans-serif">A31</text>
<polygon points="1033.7,812.5 1040.4,812.5 1043.9,811.0 1050.9,811.0 1054.4,812.5 1061.2,812.5 1061.2,825.5 1054.4,825.5 1050.9,827.0 1043.9,827.0 1040.4,825.5 1033.7,825.5" fill="#2f55ae" stroke="#2a4a98" stroke-width=".6" stroke-linejoin="round"/><text x="1047.4" y="822.4" font-size="9.6" font-weight="700" fill="#fff" text-anchor="middle" font-family="'DejaVu Sans','Liberation Sans',sans-serif">A13</text>
</g>
<defs><linearGradient id="pin" x1="0" x2="0" y1="0" y2="1"><stop offset="0" stop-color="#dc3f3f"/><stop offset=".55" stop-color="#cf2e2e"/><stop offset="1" stop-color="#a81c1c"/></linearGradient><filter id="blur1" x="-50%" y="-50%" width="200%" height="200%"><feGaussianBlur stdDeviation="1.8"/></filter></defs>
<path d="M948 892.5 L957 880 C962 873 970 871 972 875 C974 880 964 887 948 892.5Z" fill="#000" opacity=".26" filter="url(#blur1)"/>
<path d="M947.6 893 C946 884 935.6 876.5 935.6 866.4 C935.6 859.6 941 854.4 947.6 854.4 C954.2 854.4 959.7 859.6 959.7 866.4 C959.7 876.5 949.2 884 947.6 893Z" fill="url(#pin)" stroke="#9c1a1a" stroke-width=".6"/>
<circle cx="947.6" cy="866.6" r="3.8" fill="#fff"/>
<rect x="308.2" y="704" width="32.6" height="63" rx="4.5" fill="none" stroke="#000" stroke-opacity=".2" stroke-width="2"/>
<rect x="309.2" y="705" width="30.6" height="61" rx="3" fill="#fff"/>
<rect x="309.2" y="735.2" width="30.6" height="1" fill="#ccc"/>
<text x="325.6" y="725.9" font-family="'DejaVu Sans Mono','Liberation Mono',monospace" font-weight="700" font-size="21" fill="#000" text-anchor="middle">+</text>
<text x="325.6" y="756.3" font-family="'DejaVu Sans Mono','Liberation Mono',monospace" font-weight="700" font-size="21" fill="#000" text-anchor="middle">−</text>
</svg>
<div class="b" style="left:1609.00px;top:855.00px;width:298.00px;height:50.00px;background:rgba(50,160,76,.93);border-radius:3px;box-shadow:0 0 10px rgba(0,0,0,.35);overflow:hidden"></div>
<div class="b" style="left:1609.00px;top:901.00px;width:163.00px;height:4.00px;background:#2a7138;border-radius:0 0 0 3px"></div>
<svg class="ic" style="left:1623.67px;top:870.75px;" width="24.65" height="18.89" viewBox="121.0 -1202.0 1550.0 1188.0"><path fill="#e6ece7" transform="scale(1,-1)" d="M1671 970q0 -40 -28 -68l-724 -724l-136 -136q-28 -28 -68 -28t-68 28l-136 136l-362 362q-28 28 -28 68t28 68l136 136q28 28 68 28t68 -28l294 -295l656 657q28 28 68 28t68 -28l136 -136q28 -28 28 -68z"/></svg>
<div class="t" style="left:1659.00px;top:869.30px;font-size:11.375px;color:#eaf1eb;line-height:20px;">Aggiunta una nuova sede!</div>
<svg class="ic" style="left:1887.06px;top:869.86px;" width="10.28" height="10.28" viewBox="110.0 -1170.0 1188.0 1188.0"><path fill="#dfe9e1" transform="scale(1,-1)" d="M1298 214q0 -40 -28 -68l-136 -136q-28 -28 -68 -28t-68 28l-294 294l-294 -294q-28 -28 -68 -28t-68 28l-136 136q-28 28 -28 68t28 68l294 294l-294 294q-28 28 -28 68t28 68l136 136q28 28 68 28t68 -28l294 -294l294 294q28 28 68 28t68 -28l136 -136q28 -28 28 -68 t-28 -68l-294 -294l294 -294q28 -28 28 -68z"/></svg>
</div>
</body></html>
